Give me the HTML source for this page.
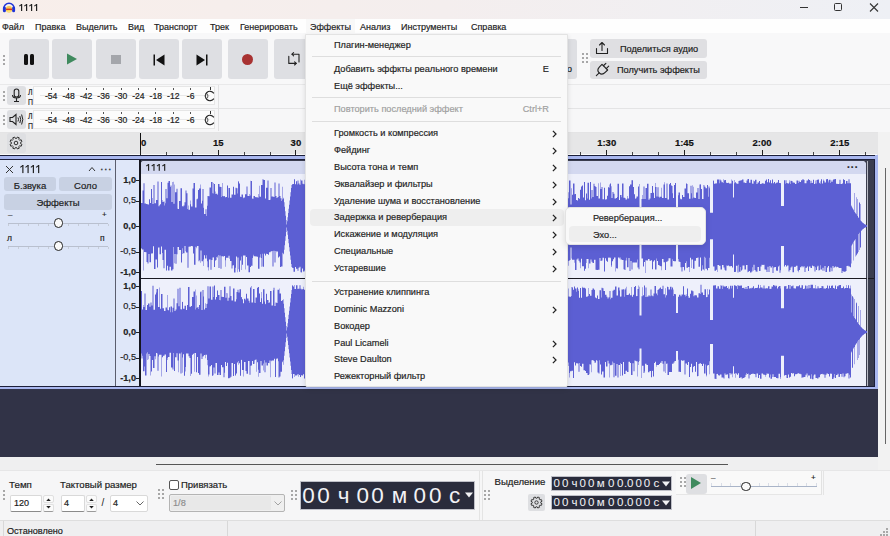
<!DOCTYPE html>
<html><head><meta charset="utf-8"><style>
*{box-sizing:border-box;margin:0;padding:0}
html,body{width:890px;height:536px;overflow:hidden;background:#f7f7f8;font-family:"Liberation Sans",sans-serif;color:#1b1b1b}
.a{position:absolute}
.t{position:absolute;white-space:nowrap;line-height:1;-webkit-text-stroke-width:0.18px}
#title{left:0;top:0;width:890px;height:19px;background:linear-gradient(90deg,#f8eeea 0%,#f4eeee 50%,#eef0f5 100%)}
#menubar{left:0;top:19px;width:890px;height:14px;background:#fefefe;font-size:9px;color:#222}
.btn{position:absolute;top:39px;width:40px;height:40px;background:#dedfe3;border-radius:3px}
.grip{position:absolute;width:2px;}
.grip i{position:absolute;left:0;width:2px;height:2px;background:#9a9a9a;border-radius:1px}
.meter{position:absolute;left:33px;width:182px;height:19px;background:#fcfcfc;border:1px solid #e6e6e6}
.ml{position:absolute;font-size:8.6px;color:#222;line-height:1;white-space:nowrap;-webkit-text-stroke-width:0.2px}
.menu{font-size:9.2px;color:#1e1e1e}
.mi{position:absolute;left:334px;white-space:nowrap;line-height:1}
.arr{position:absolute;left:551px}
</style></head><body>
<div id="title" class="a">
  <svg class="a" style="left:1.5px;top:-0.5px" width="14" height="14" viewBox="0 0 14 14">
    <path d="M1.8 8.5 A5.2 5.2 0 0 1 12.2 8.5" fill="none" stroke="#1f33d6" stroke-width="1.5"/>
    <rect x="0.9" y="6.6" width="3" height="5.6" rx="1.5" fill="#1f33d6"/>
    <rect x="10.1" y="6.6" width="3" height="5.6" rx="1.5" fill="#1f33d6"/>
    <ellipse cx="7" cy="9.3" rx="3.1" ry="3.2" fill="#f8c64c"/>
    <rect x="3.9" y="8.6" width="6.2" height="1.4" fill="#d9361e"/>
    <ellipse cx="7" cy="11.5" rx="2" ry="1" fill="#fbe27a"/>
  </svg>
<svg class="a" style="left:18.00px;top:3.00px" width="20.20" height="9.00" viewBox="0 0 20.20 9.00"><rect x="3.00" y="1" width="1.2" height="7" fill="#222"/><path d="M3.72 1.3 L1.30 3.10" stroke="#222" stroke-width="1.05" fill="none"/><rect x="8.00" y="1" width="1.2" height="7" fill="#222"/><path d="M8.72 1.3 L6.30 3.10" stroke="#222" stroke-width="1.05" fill="none"/><rect x="13.00" y="1" width="1.2" height="7" fill="#222"/><path d="M13.72 1.3 L11.30 3.10" stroke="#222" stroke-width="1.05" fill="none"/><rect x="18.00" y="1" width="1.2" height="7" fill="#222"/><path d="M18.72 1.3 L16.30 3.10" stroke="#222" stroke-width="1.05" fill="none"/></svg>
  <div class="a" style="left:800px;top:7px;width:8px;height:1px;background:#333"></div>
  <div class="a" style="left:834px;top:3px;width:8px;height:8px;border:1.2px solid #333;border-radius:1.5px"></div>
  <svg class="a" style="left:869px;top:3px" width="10" height="9" viewBox="0 0 10 9"><path d="M1 0.5 L9 8.5 M9 0.5 L1 8.5" stroke="#333" stroke-width="1.1"/></svg>
</div>
<div id="menubar" class="a"><div class="a" style="left:306px;top:0px;width:49px;height:14px;background:#f8f8f8"></div>
<div class="t" style="left:2px;top:3.6px">Файл</div>
<div class="t" style="left:35px;top:3.6px">Правка</div>
<div class="t" style="left:76px;top:3.6px">Выделить</div>
<div class="t" style="left:128px;top:3.6px">Вид</div>
<div class="t" style="left:154px;top:3.6px">Транспорт</div>
<div class="t" style="left:210px;top:3.6px">Трек</div>
<div class="t" style="left:240px;top:3.6px">Генерировать</div>
<div class="t" style="left:310px;top:3.6px">Эффекты</div>
<div class="t" style="left:360px;top:3.6px">Анализ</div>
<div class="t" style="left:401px;top:3.6px">Инструменты</div>
<div class="t" style="left:471px;top:3.6px">Справка</div>
</div>
<div class="a" style="left:0;top:33px;width:890px;height:51px;background:#f8f8f9"></div>
<div class="a" style="left:0;top:84px;width:890px;height:1px;background:#e9e9ea"></div>
<div class="a" style="left:3px;top:55px"><i class="a" style="left:0px;top:0px;width:1.5px;height:1.5px;background:#8c8c8c;border-radius:1px"></i><i class="a" style="left:0px;top:4px;width:1.5px;height:1.5px;background:#8c8c8c;border-radius:1px"></i><i class="a" style="left:0px;top:8px;width:1.5px;height:1.5px;background:#8c8c8c;border-radius:1px"></i></div>
<div class="btn" style="left:9px"></div>
<div class="btn" style="left:52px"></div>
<div class="btn" style="left:96px"></div>
<div class="btn" style="left:139px"></div>
<div class="btn" style="left:182px"></div>
<div class="btn" style="left:228px"></div>
<div class="btn" style="left:274px"></div>
<div class="a" style="left:24px;top:54px;width:4px;height:11px;background:#111;border-radius:1.5px"></div>
<div class="a" style="left:30px;top:54px;width:4px;height:11px;background:#111;border-radius:1.5px"></div>
<svg class="a" style="left:66px;top:53px" width="12" height="12" viewBox="0 0 12 12"><path d="M1 0.5 L11 6 L1 11.5Z" fill="#3f8a5e"/></svg>
<div class="a" style="left:111px;top:54.5px;width:9.5px;height:9.5px;background:#a4a6ab"></div>
<svg class="a" style="left:153px;top:53.5px" width="12" height="12" viewBox="0 0 12 12"><rect x="0.5" y="0.5" width="1.5" height="11" fill="#111"/><path d="M11.5 0.5 L3 6 L11.5 11.5Z" fill="#111"/></svg>
<svg class="a" style="left:196px;top:53.5px" width="12" height="12" viewBox="0 0 12 12"><rect x="10" y="0.5" width="1.5" height="11" fill="#111"/><path d="M0.5 0.5 L9 6 L0.5 11.5Z" fill="#111"/></svg>
<div class="a" style="left:242px;top:53.5px;width:11px;height:11px;background:#a83232;border-radius:50%"></div>
<svg class="a" style="left:287px;top:52px" width="14" height="14" viewBox="0 0 14 14"><g fill="none" stroke="#222" stroke-width="1.1" stroke-linejoin="round" stroke-linecap="round"><path d="M5 2.2 H12 V10"/><path d="M6.6 0.6 L5 2.2 L6.6 3.8"/><path d="M9.2 11.4 H1.8 V4.2"/><path d="M7.6 9.8 L9.2 11.4 L7.6 13"/></g></svg>
<div class="btn" style="left:560px;width:17px"></div>
<div class="t" style="left:567px;top:65px;font-size:9px">o</div>
<div class="a" style="left:582px;top:53px"><i class="a" style="left:0px;top:0px;width:1.5px;height:1.5px;background:#8c8c8c;border-radius:1px"></i><i class="a" style="left:0px;top:4px;width:1.5px;height:1.5px;background:#8c8c8c;border-radius:1px"></i><i class="a" style="left:0px;top:8px;width:1.5px;height:1.5px;background:#8c8c8c;border-radius:1px"></i><i class="a" style="left:4px;top:0px;width:1.5px;height:1.5px;background:#8c8c8c;border-radius:1px"></i><i class="a" style="left:4px;top:4px;width:1.5px;height:1.5px;background:#8c8c8c;border-radius:1px"></i><i class="a" style="left:4px;top:8px;width:1.5px;height:1.5px;background:#8c8c8c;border-radius:1px"></i></div>
<div class="a" style="left:590px;top:39px;width:117px;height:19px;background:#dfdfe2;border-radius:3px"></div>
<div class="a" style="left:590px;top:61px;width:117px;height:18px;background:#dfdfe2;border-radius:3px"></div>
<div class="t" style="left:620px;top:44.8px;font-size:9.2px">Поделиться аудио</div>
<div class="t" style="left:617px;top:65.5px;font-size:9.2px">Получить эффекты</div>
<svg class="a" style="left:594px;top:41px" width="16" height="15" viewBox="0 0 16 15"><path d="M2.5 7.5 V12.5 H13.5 V7.5 M8 9.5 V1.5 M5.5 4 L8 1.5 L10.5 4" fill="none" stroke="#222" stroke-width="1.1" stroke-linecap="round" stroke-linejoin="round"/></svg>
<svg class="a" style="left:593px;top:61px" width="18" height="18" viewBox="0 0 18 18"><g transform="rotate(45 9 9)" fill="none" stroke="#222" stroke-width="1.1" stroke-linecap="round" stroke-linejoin="round"><path d="M7 1.5 V5 M11 1.5 V5"/><path d="M5 5 H13 V8.5 C13 11.5 11 13 9 13 C7 13 5 11.5 5 8.5 Z"/><path d="M9 13 V17"/></g></svg>
<div class="a" style="left:0;top:108px;width:890px;height:1px;background:#e4e4e5"></div>
<div class="a" style="left:0;top:132px;width:890px;height:1px;background:#e4e4e5"></div>
<div class="a" style="left:218px;top:85px;width:1px;height:46px;background:#e2e2e3"></div>
<div class="a" style="left:3px;top:91px"><i class="a" style="left:0px;top:0px;width:1.5px;height:1.5px;background:#8c8c8c;border-radius:1px"></i><i class="a" style="left:0px;top:4px;width:1.5px;height:1.5px;background:#8c8c8c;border-radius:1px"></i><i class="a" style="left:0px;top:8px;width:1.5px;height:1.5px;background:#8c8c8c;border-radius:1px"></i></div>
<div class="a" style="left:7px;top:86px;width:19px;height:19px;background:#dedfe2;border-radius:3px"></div>
<svg class="a" style="left:10px;top:88px" width="13" height="15" viewBox="0 0 13 15"><rect x="4.2" y="1" width="4.6" height="8" rx="2.3" fill="none" stroke="#222" stroke-width="1.1"/><path d="M2.5 7 C2.5 11 10.5 11 10.5 7 M6.5 10.5 V13 M4 13.5 H9" fill="none" stroke="#222" stroke-width="1.1"/></svg>
<div class="ml" style="left:28px;top:87px;font-size:9.6px;transform:scaleX(0.72);transform-origin:0 0">Л</div>
<div class="ml" style="left:28px;top:97px;font-size:9.6px;transform:scaleX(0.72);transform-origin:0 0">П</div>
<div class="meter" style="top:86px"></div>
<div class="a" style="left:40px;top:95px;width:170px;height:1px;background:#e8e8e8"></div>
<div class="a" style="left:50.7px;top:87.5px;width:1px;height:2.5px;background:#555"></div>
<div class="ml" style="left:39.2px;width:24px;text-align:center;top:92px">-54</div>
<div class="a" style="left:68.1px;top:87.5px;width:1px;height:2.5px;background:#555"></div>
<div class="ml" style="left:56.6px;width:24px;text-align:center;top:92px">-48</div>
<div class="a" style="left:85.6px;top:87.5px;width:1px;height:2.5px;background:#555"></div>
<div class="ml" style="left:74.1px;width:24px;text-align:center;top:92px">-42</div>
<div class="a" style="left:103.0px;top:87.5px;width:1px;height:2.5px;background:#555"></div>
<div class="ml" style="left:91.5px;width:24px;text-align:center;top:92px">-36</div>
<div class="a" style="left:120.5px;top:87.5px;width:1px;height:2.5px;background:#555"></div>
<div class="ml" style="left:109.0px;width:24px;text-align:center;top:92px">-30</div>
<div class="a" style="left:137.9px;top:87.5px;width:1px;height:2.5px;background:#555"></div>
<div class="ml" style="left:126.4px;width:24px;text-align:center;top:92px">-24</div>
<div class="a" style="left:155.3px;top:87.5px;width:1px;height:2.5px;background:#555"></div>
<div class="ml" style="left:143.8px;width:24px;text-align:center;top:92px">-18</div>
<div class="a" style="left:172.8px;top:87.5px;width:1px;height:2.5px;background:#555"></div>
<div class="ml" style="left:161.3px;width:24px;text-align:center;top:92px">-12</div>
<div class="a" style="left:190.2px;top:87.5px;width:1px;height:2.5px;background:#555"></div>
<div class="ml" style="left:178.7px;width:24px;text-align:center;top:92px">-6</div>
<div class="a" style="left:209.5px;top:87px;width:1px;height:3px;background:#333"></div>
<svg class="a" style="left:203px;top:90px" width="14" height="12" viewBox="0 0 14 12"><path d="M10.85 3.30 A4.7 4.7 0 1 0 10.85 8.70" fill="none" stroke="#222" stroke-width="1.15"/><ellipse cx="3.6" cy="6" rx="1.3" ry="2.4" fill="none" stroke="#444" stroke-width="0.9"/></svg>
<div class="a" style="left:3px;top:115px"><i class="a" style="left:0px;top:0px;width:1.5px;height:1.5px;background:#8c8c8c;border-radius:1px"></i><i class="a" style="left:0px;top:4px;width:1.5px;height:1.5px;background:#8c8c8c;border-radius:1px"></i><i class="a" style="left:0px;top:8px;width:1.5px;height:1.5px;background:#8c8c8c;border-radius:1px"></i></div>
<div class="a" style="left:7px;top:110px;width:19px;height:19px;background:#dedfe2;border-radius:3px"></div>
<svg class="a" style="left:9px;top:113px" width="15" height="13" viewBox="0 0 15 13"><path d="M1 4.5 H3.5 L7 1.5 V11.5 L3.5 8.5 H1Z" fill="none" stroke="#222" stroke-width="1.1"/><path d="M9 4.5 Q10 6.5 9 8.5 M10.8 3 Q12.6 6.5 10.8 10 M12.6 1.5 Q15 6.5 12.6 11.5" fill="none" stroke="#222" stroke-width="1"/></svg>
<div class="ml" style="left:28px;top:111px;font-size:9.6px;transform:scaleX(0.72);transform-origin:0 0">Л</div>
<div class="ml" style="left:28px;top:121px;font-size:9.6px;transform:scaleX(0.72);transform-origin:0 0">П</div>
<div class="meter" style="top:110px"></div>
<div class="a" style="left:40px;top:119px;width:170px;height:1px;background:#e8e8e8"></div>
<div class="a" style="left:50.7px;top:111.5px;width:1px;height:2.5px;background:#555"></div>
<div class="ml" style="left:39.2px;width:24px;text-align:center;top:116px">-54</div>
<div class="a" style="left:68.1px;top:111.5px;width:1px;height:2.5px;background:#555"></div>
<div class="ml" style="left:56.6px;width:24px;text-align:center;top:116px">-48</div>
<div class="a" style="left:85.6px;top:111.5px;width:1px;height:2.5px;background:#555"></div>
<div class="ml" style="left:74.1px;width:24px;text-align:center;top:116px">-42</div>
<div class="a" style="left:103.0px;top:111.5px;width:1px;height:2.5px;background:#555"></div>
<div class="ml" style="left:91.5px;width:24px;text-align:center;top:116px">-36</div>
<div class="a" style="left:120.5px;top:111.5px;width:1px;height:2.5px;background:#555"></div>
<div class="ml" style="left:109.0px;width:24px;text-align:center;top:116px">-30</div>
<div class="a" style="left:137.9px;top:111.5px;width:1px;height:2.5px;background:#555"></div>
<div class="ml" style="left:126.4px;width:24px;text-align:center;top:116px">-24</div>
<div class="a" style="left:155.3px;top:111.5px;width:1px;height:2.5px;background:#555"></div>
<div class="ml" style="left:143.8px;width:24px;text-align:center;top:116px">-18</div>
<div class="a" style="left:172.8px;top:111.5px;width:1px;height:2.5px;background:#555"></div>
<div class="ml" style="left:161.3px;width:24px;text-align:center;top:116px">-12</div>
<div class="a" style="left:190.2px;top:111.5px;width:1px;height:2.5px;background:#555"></div>
<div class="ml" style="left:178.7px;width:24px;text-align:center;top:116px">-6</div>
<div class="a" style="left:209.5px;top:111px;width:1px;height:3px;background:#333"></div>
<svg class="a" style="left:203px;top:114px" width="14" height="12" viewBox="0 0 14 12"><path d="M10.85 3.30 A4.7 4.7 0 1 0 10.85 8.70" fill="none" stroke="#222" stroke-width="1.15"/><ellipse cx="3.6" cy="6" rx="1.3" ry="2.4" fill="none" stroke="#444" stroke-width="0.9"/></svg>
<div class="a" style="left:0;top:133px;width:878px;height:22px;background:#e6e6e7"></div>
<div class="a" style="left:878px;top:132px;width:12px;height:23px;background:#f2f2f2"></div>
<div class="a" style="left:7px;top:133px;width:19px;height:20px;background:#dedfe2;border-radius:3px"></div>
<svg class="a" style="left:9px;top:136px" width="14" height="14" viewBox="0 0 14 14"><path d="M11.56 7.61 L12.95 8.35 L12.16 10.25 L10.65 9.79 L10.25 10.25 L9.79 10.65 L10.25 12.16 L8.35 12.95 L7.61 11.56 L7.00 11.60 L6.39 11.56 L5.65 12.95 L3.75 12.16 L4.21 10.65 L3.75 10.25 L3.35 9.79 L1.84 10.25 L1.05 8.35 L2.44 7.61 L2.40 7.00 L2.44 6.39 L1.05 5.65 L1.84 3.75 L3.35 4.21 L3.75 3.75 L4.21 3.35 L3.75 1.84 L5.65 1.05 L6.39 2.44 L7.00 2.40 L7.61 2.44 L8.35 1.05 L10.25 1.84 L9.79 3.35 L10.25 3.75 L10.65 4.21 L12.16 3.75 L12.95 5.65 L11.56 6.39 L11.60 7.00Z" fill="none" stroke="#2a2a2a" stroke-width="0.95" stroke-linejoin="round"/><circle cx="7" cy="7" r="1.8" fill="none" stroke="#2a2a2a" stroke-width="0.95"/></svg>
<div class="a" style="left:140px;top:133px;width:1.2px;height:21px;background:#111"></div>
<div class="a" style="left:0;top:154px;width:877px;height:1px;background:#fafafa"></div>
<div class="a" style="left:140.0px;top:150px;width:1px;height:5px;background:#222"></div>
<div class="t" style="left:141px;top:138px;font-size:9.5px;font-weight:bold;color:#111">0</div>
<div class="a" style="left:165.9px;top:152px;width:1px;height:3px;background:#444"></div>
<div class="a" style="left:191.8px;top:152px;width:1px;height:3px;background:#444"></div>
<div class="a" style="left:217.7px;top:150px;width:1px;height:5px;background:#222"></div>
<div class="t" style="left:198.2px;width:40px;text-align:center;top:138px;font-size:9.5px;font-weight:bold;color:#111">15</div>
<div class="a" style="left:243.6px;top:152px;width:1px;height:3px;background:#444"></div>
<div class="a" style="left:269.5px;top:152px;width:1px;height:3px;background:#444"></div>
<div class="a" style="left:295.4px;top:150px;width:1px;height:5px;background:#222"></div>
<div class="t" style="left:275.9px;width:40px;text-align:center;top:138px;font-size:9.5px;font-weight:bold;color:#111">30</div>
<div class="a" style="left:321.3px;top:152px;width:1px;height:3px;background:#444"></div>
<div class="a" style="left:347.2px;top:152px;width:1px;height:3px;background:#444"></div>
<div class="a" style="left:373.1px;top:150px;width:1px;height:5px;background:#222"></div>
<div class="a" style="left:399.0px;top:152px;width:1px;height:3px;background:#444"></div>
<div class="a" style="left:424.9px;top:152px;width:1px;height:3px;background:#444"></div>
<div class="a" style="left:450.8px;top:150px;width:1px;height:5px;background:#222"></div>
<div class="a" style="left:476.7px;top:152px;width:1px;height:3px;background:#444"></div>
<div class="a" style="left:502.6px;top:152px;width:1px;height:3px;background:#444"></div>
<div class="a" style="left:528.5px;top:150px;width:1px;height:5px;background:#222"></div>
<div class="a" style="left:554.4px;top:152px;width:1px;height:3px;background:#444"></div>
<div class="a" style="left:580.3px;top:152px;width:1px;height:3px;background:#444"></div>
<div class="a" style="left:606.2px;top:150px;width:1px;height:5px;background:#222"></div>
<div class="t" style="left:586.7px;width:40px;text-align:center;top:138px;font-size:9.5px;font-weight:bold;color:#111">1:30</div>
<div class="a" style="left:632.1px;top:152px;width:1px;height:3px;background:#444"></div>
<div class="a" style="left:658.0px;top:152px;width:1px;height:3px;background:#444"></div>
<div class="a" style="left:683.9px;top:150px;width:1px;height:5px;background:#222"></div>
<div class="t" style="left:664.4px;width:40px;text-align:center;top:138px;font-size:9.5px;font-weight:bold;color:#111">1:45</div>
<div class="a" style="left:709.8px;top:152px;width:1px;height:3px;background:#444"></div>
<div class="a" style="left:735.7px;top:152px;width:1px;height:3px;background:#444"></div>
<div class="a" style="left:761.6px;top:150px;width:1px;height:5px;background:#222"></div>
<div class="t" style="left:742.1px;width:40px;text-align:center;top:138px;font-size:9.5px;font-weight:bold;color:#111">2:00</div>
<div class="a" style="left:787.5px;top:152px;width:1px;height:3px;background:#444"></div>
<div class="a" style="left:813.4px;top:152px;width:1px;height:3px;background:#444"></div>
<div class="a" style="left:839.3px;top:150px;width:1px;height:5px;background:#222"></div>
<div class="t" style="left:819.8px;width:40px;text-align:center;top:138px;font-size:9.5px;font-weight:bold;color:#111">2:15</div>
<div class="a" style="left:865.2px;top:152px;width:1px;height:3px;background:#444"></div>
<div class="a" style="left:0;top:155px;width:878px;height:303px;background:#313347"></div>
<div class="a" style="left:878px;top:155px;width:12px;height:315px;background:#f2f2f2"></div>
<div class="a" style="left:884.5px;top:168px;width:1.5px;height:276px;background:#666"></div>
<div class="a" style="left:0;top:155px;width:878px;height:234px;background:#a9b7ef"></div>
<div class="a" style="left:0;top:155px;width:875px;height:1px;background:#1c1f3a"></div>
<div class="a" style="left:0;top:159px;width:875px;height:228px;background:#1c1f3a"></div>
<div class="a" style="left:0;top:160px;width:874px;height:226px;background:#313347"></div>
<div class="a" style="left:0;top:160px;width:115px;height:226px;background:#dce5f8"></div>
<div class="a" style="left:115px;top:160px;width:1.2px;height:226px;background:#5b5e6e"></div>
<div class="a" style="left:116px;top:160px;width:23.5px;height:226px;background:#dfe7f9"></div>
<div class="a" style="left:139px;top:160px;width:2px;height:226px;background:#15161f"></div>
<div class="a" style="left:141px;top:160px;width:733px;height:226px;background:#3a3d4f"></div>
<div class="a" style="left:141px;top:161px;width:725px;height:225px;background:#eef0fb;border-radius:3px 4px 0 0"></div>
<div class="a" style="left:141px;top:161px;width:725px;height:13px;background:#d3d8f0;border-radius:3px 4px 0 0"></div>
<svg class="a" style="left:144.90px;top:163.00px" width="21.25" height="8.80" viewBox="0 0 21.25 8.80"><rect x="3.00" y="1" width="1.15" height="6.8" fill="#222"/><path d="M3.69 1.3 L1.30 3.04" stroke="#222" stroke-width="1.05" fill="none"/><rect x="8.40" y="1" width="1.15" height="6.8" fill="#222"/><path d="M9.09 1.3 L6.70 3.04" stroke="#222" stroke-width="1.05" fill="none"/><rect x="13.70" y="1" width="1.15" height="6.8" fill="#222"/><path d="M14.39 1.3 L12.00 3.04" stroke="#222" stroke-width="1.05" fill="none"/><rect x="19.10" y="1" width="1.15" height="6.8" fill="#222"/><path d="M19.79 1.3 L17.40 3.04" stroke="#222" stroke-width="1.05" fill="none"/></svg>
<div class="t" style="left:847px;top:163px;font-size:10px;font-weight:bold;letter-spacing:0.5px;color:#222">&middot;&middot;&middot;</div>
<div class="a" style="left:141px;top:277.5px;width:733px;height:1.5px;background:#1a1a22"></div>
<div class="a" style="left:866.5px;top:161px;width:1.3px;height:225px;background:#b9bbc6"></div>
<svg class="a" style="left:5px;top:165px" width="9" height="9" viewBox="0 0 9 9"><path d="M1 1 L8 8 M8 1 L1 8" stroke="#333" stroke-width="1"/></svg>
<svg class="a" style="left:18.60px;top:164.00px" width="21.25" height="10.10" viewBox="0 0 21.25 10.10"><rect x="3.30" y="1" width="1.15" height="8.1" fill="#1b1b1b"/><path d="M3.99 1.3 L1.30 3.43" stroke="#1b1b1b" stroke-width="1.05" fill="none"/><rect x="8.50" y="1" width="1.15" height="8.1" fill="#1b1b1b"/><path d="M9.19 1.3 L6.50 3.43" stroke="#1b1b1b" stroke-width="1.05" fill="none"/><rect x="13.80" y="1" width="1.15" height="8.1" fill="#1b1b1b"/><path d="M14.49 1.3 L11.80 3.43" stroke="#1b1b1b" stroke-width="1.05" fill="none"/><rect x="19.10" y="1" width="1.15" height="8.1" fill="#1b1b1b"/><path d="M19.79 1.3 L17.10 3.43" stroke="#1b1b1b" stroke-width="1.05" fill="none"/></svg>
<svg class="a" style="left:88px;top:166px" width="8" height="6" viewBox="0 0 8 6"><path d="M1 5 L4 1.5 L7 5" fill="none" stroke="#333" stroke-width="1"/></svg>
<div class="t" style="left:100.5px;top:166px;font-size:9px;font-weight:bold;letter-spacing:1px;color:#333">&middot;&middot;&middot;</div>
<div class="a" style="left:4px;top:177px;width:52px;height:14px;background:#c8d1e3;border-radius:3px"></div>
<div class="a" style="left:59px;top:177px;width:53px;height:14px;background:#c8d1e3;border-radius:3px"></div>
<div class="a" style="left:4px;top:194px;width:108px;height:16px;background:#c8d1e3;border-radius:3px"></div>
<div class="t" style="left:4px;width:52px;text-align:center;top:180.5px;font-size:9.5px">Б.звука</div>
<div class="t" style="left:59px;width:53px;text-align:center;top:180.5px;font-size:9.5px">Соло</div>
<div class="t" style="left:4px;width:108px;text-align:center;top:198px;font-size:9.5px">Эффекты</div>
<div class="t" style="left:8px;top:211px;font-size:8px;color:#222">&ndash;</div>
<div class="t" style="left:102px;top:211px;font-size:8px;color:#222">+</div>
<div class="t" style="left:7px;top:234px;font-size:8.5px;color:#222">л</div>
<div class="t" style="left:100px;top:234px;font-size:8.5px;color:#222">п</div>
<div class="a" style="left:8px;top:222.5px;width:100px;height:1px;background:#b9c0cf"></div>
<div class="a" style="left:8px;top:223.5px;width:1px;height:2px;background:#c6ccd8"></div>
<div class="a" style="left:18px;top:223.5px;width:1px;height:2px;background:#c6ccd8"></div>
<div class="a" style="left:28px;top:223.5px;width:1px;height:2px;background:#c6ccd8"></div>
<div class="a" style="left:38px;top:223.5px;width:1px;height:2px;background:#c6ccd8"></div>
<div class="a" style="left:48px;top:223.5px;width:1px;height:2px;background:#c6ccd8"></div>
<div class="a" style="left:58px;top:223.5px;width:1px;height:2px;background:#c6ccd8"></div>
<div class="a" style="left:68px;top:223.5px;width:1px;height:2px;background:#c6ccd8"></div>
<div class="a" style="left:78px;top:223.5px;width:1px;height:2px;background:#c6ccd8"></div>
<div class="a" style="left:88px;top:223.5px;width:1px;height:2px;background:#c6ccd8"></div>
<div class="a" style="left:98px;top:223.5px;width:1px;height:2px;background:#c6ccd8"></div>
<div class="a" style="left:108px;top:223.5px;width:1px;height:2px;background:#c6ccd8"></div>
<div class="a" style="left:53.5px;top:218.0px;width:9.5px;height:9.5px;border:1.2px solid #222;border-radius:50%;background:#fafafa"></div>
<div class="a" style="left:8px;top:245.5px;width:100px;height:1px;background:#b9c0cf"></div>
<div class="a" style="left:8px;top:246.5px;width:1px;height:2px;background:#c6ccd8"></div>
<div class="a" style="left:18px;top:246.5px;width:1px;height:2px;background:#c6ccd8"></div>
<div class="a" style="left:28px;top:246.5px;width:1px;height:2px;background:#c6ccd8"></div>
<div class="a" style="left:38px;top:246.5px;width:1px;height:2px;background:#c6ccd8"></div>
<div class="a" style="left:48px;top:246.5px;width:1px;height:2px;background:#c6ccd8"></div>
<div class="a" style="left:58px;top:246.5px;width:1px;height:2px;background:#c6ccd8"></div>
<div class="a" style="left:68px;top:246.5px;width:1px;height:2px;background:#c6ccd8"></div>
<div class="a" style="left:78px;top:246.5px;width:1px;height:2px;background:#c6ccd8"></div>
<div class="a" style="left:88px;top:246.5px;width:1px;height:2px;background:#c6ccd8"></div>
<div class="a" style="left:98px;top:246.5px;width:1px;height:2px;background:#c6ccd8"></div>
<div class="a" style="left:108px;top:246.5px;width:1px;height:2px;background:#c6ccd8"></div>
<div class="a" style="left:53.5px;top:241.0px;width:9.5px;height:9.5px;border:1.2px solid #222;border-radius:50%;background:#fafafa"></div>
<div class="t" style="left:110px;width:26px;text-align:right;top:175.5px;font-size:9.2px;font-weight:bold;color:#222">1,0</div>
<div class="a" style="left:136px;top:180px;width:3px;height:1px;background:#222"></div>
<div class="t" style="left:110px;width:26px;text-align:right;top:196.0px;font-size:9.2px;color:#222">0,5</div>
<div class="a" style="left:136px;top:200.5px;width:3px;height:1px;background:#222"></div>
<div class="t" style="left:110px;width:26px;text-align:right;top:221.5px;font-size:9.2px;font-weight:bold;color:#222">0,0</div>
<div class="a" style="left:136px;top:226px;width:3px;height:1px;background:#222"></div>
<div class="t" style="left:110px;width:26px;text-align:right;top:247.0px;font-size:9.2px;color:#222">-0,5</div>
<div class="a" style="left:136px;top:251.5px;width:3px;height:1px;background:#222"></div>
<div class="t" style="left:110px;width:26px;text-align:right;top:267.5px;font-size:9.2px;font-weight:bold;color:#222">-1,0</div>
<div class="a" style="left:136px;top:272px;width:3px;height:1px;background:#222"></div>
<div class="t" style="left:110px;width:26px;text-align:right;top:281.5px;font-size:9.2px;font-weight:bold;color:#222">1,0</div>
<div class="a" style="left:136px;top:286px;width:3px;height:1px;background:#222"></div>
<div class="t" style="left:110px;width:26px;text-align:right;top:302.0px;font-size:9.2px;color:#222">0,5</div>
<div class="a" style="left:136px;top:306.5px;width:3px;height:1px;background:#222"></div>
<div class="t" style="left:110px;width:26px;text-align:right;top:327.5px;font-size:9.2px;font-weight:bold;color:#222">0,0</div>
<div class="a" style="left:136px;top:332px;width:3px;height:1px;background:#222"></div>
<div class="t" style="left:110px;width:26px;text-align:right;top:353.0px;font-size:9.2px;color:#222">-0,5</div>
<div class="a" style="left:136px;top:357.5px;width:3px;height:1px;background:#222"></div>
<div class="t" style="left:110px;width:26px;text-align:right;top:373.5px;font-size:9.2px;font-weight:bold;color:#222">-1,0</div>
<div class="a" style="left:136px;top:378px;width:3px;height:1px;background:#222"></div>
<svg class="a" style="left:0;top:0" width="890" height="536" viewBox="0 0 890 536"><g fill="#5c5fd3"><path d="M141 226L141 202.9L141.5 202.9L141.5 202.9L142 202.9L142 202.9L142.5 202.9L142.5 190.6L143 190.6L143 190.6L143.5 190.6L143.5 183.2L144 183.2L144 183.2L144.5 183.2L144.5 203.4L145 203.4L145 203.4L145.5 203.4L145.5 203.4L146 203.4L146 204.1L146.5 204.1L146.5 204.1L147 204.1L147 204.1L147.5 204.1L147.5 204.4L148 204.4L148 204.4L148.5 204.4L148.5 204.4L149 204.4L149 199.2L149.5 199.2L149.5 199.2L150 199.2L150 203.1L150.5 203.1L150.5 203.1L151 203.1L151 189.0L151.5 189.0L151.5 189.0L152 189.0L152 198.0L152.5 198.0L152.5 204.0L153 204.0L153 204.0L153.5 204.0L153.5 185.0L154 185.0L154 185.0L154.5 185.0L154.5 203.2L155 203.2L155 203.2L155.5 203.2L155.5 203.2L156 203.2L156 200.1L156.5 200.1L156.5 200.1L157 200.1L157 200.1L157.5 200.1L157.5 181.5L158 181.5L158 181.5L158.5 181.5L158.5 206.3L159 206.3L159 206.3L159.5 206.3L159.5 205.0L160 205.0L160 204.2L160.5 204.2L160.5 204.2L161 204.2L161 182.1L161.5 182.1L161.5 182.1L162 182.1L162 200.1L162.5 200.1L162.5 202.1L163 202.1L163 202.1L163.5 202.1L163.5 201.5L164 201.5L164 201.5L164.5 201.5L164.5 205.6L165 205.6L165 203.2L165.5 203.2L165.5 188.9L166 188.9L166 188.9L166.5 188.9L166.5 198.3L167 198.3L167 198.3L167.5 198.3L167.5 182.8L168 182.8L168 182.8L168.5 182.8L168.5 181.1L169 181.1L169 181.1L169.5 181.1L169.5 181.1L170 181.1L170 186.9L170.5 186.9L170.5 185.5L171 185.5L171 185.5L171.5 185.5L171.5 202.1L172 202.1L172 202.1L172.5 202.1L172.5 182.1L173 182.1L173 181.8L173.5 181.8L173.5 203.7L174 203.7L174 203.7L174.5 203.7L174.5 184.5L175 184.5L175 192.3L175.5 192.3L175.5 192.3L176 192.3L176 192.3L176.5 192.3L176.5 188.8L177 188.8L177 188.8L177.5 188.8L177.5 208.7L178 208.7L178 208.9L178.5 208.9L178.5 208.9L179 208.9L179 200.9L179.5 200.9L179.5 200.9L180 200.9L180 200.9L180.5 200.9L180.5 188.3L181 188.3L181 188.3L181.5 188.3L181.5 188.3L182 188.3L182 206.0L182.5 206.0L182.5 206.5L183 206.5L183 206.5L183.5 206.5L183.5 205.4L184 205.4L184 205.4L184.5 205.4L184.5 202.2L185 202.2L185 202.2L185.5 202.2L185.5 190.4L186 190.4L186 190.4L186.5 190.4L186.5 193.3L187 193.3L187 193.3L187.5 193.3L187.5 208.9L188 208.9L188 205.4L188.5 205.4L188.5 209.7L189 209.7L189 209.7L189.5 209.7L189.5 209.7L190 209.7L190 200.5L190.5 200.5L190.5 204.2L191 204.2L191 206.5L191.5 206.5L191.5 206.5L192 206.5L192 206.5L192.5 206.5L192.5 188.6L193 188.6L193 188.6L193.5 188.6L193.5 183.0L194 183.0L194 183.0L194.5 183.0L194.5 183.0L195 183.0L195 207.5L195.5 207.5L195.5 207.5L196 207.5L196 207.5L196.5 207.5L196.5 199.2L197 199.2L197 199.2L197.5 199.2L197.5 198.4L198 198.4L198 190.0L198.5 190.0L198.5 190.0L199 190.0L199 188.6L199.5 188.6L199.5 188.6L200 188.6L200 188.6L200.5 188.6L200.5 184.4L201 184.4L201 203.4L201.5 203.4L201.5 203.4L202 203.4L202 200.7L202.5 200.7L202.5 189.0L203 189.0L203 189.0L203.5 189.0L203.5 207.7L204 207.7L204 214.0L204.5 214.0L204.5 214.1L205 214.1L205 214.1L205.5 214.1L205.5 209.3L206 209.3L206 209.3L206.5 209.3L206.5 215.9L207 215.9L207 205.7L207.5 205.7L207.5 195.9L208 195.9L208 196.0L208.5 196.0L208.5 196.2L209 196.2L209 196.2L209.5 196.2L209.5 187.4L210 187.4L210 187.4L210.5 187.4L210.5 187.4L211 187.4L211 182.1L211.5 182.1L211.5 182.1L212 182.1L212 182.1L212.5 182.1L212.5 193.3L213 193.3L213 193.4L213.5 193.4L213.5 183.1L214 183.1L214 183.9L214.5 183.9L214.5 183.9L215 183.9L215 191.4L215.5 191.4L215.5 193.9L216 193.9L216 194.0L216.5 194.0L216.5 193.6L217 193.6L217 193.7L217.5 193.7L217.5 195.0L218 195.0L218 184.0L218.5 184.0L218.5 184.1L219 184.1L219 184.1L219.5 184.1L219.5 186.7L220 186.7L220 186.8L220.5 186.8L220.5 186.9L221 186.9L221 187.0L221.5 187.0L221.5 197.0L222 197.0L222 183.1L222.5 183.1L222.5 196.1L223 196.1L223 196.2L223.5 196.2L223.5 196.2L224 196.2L224 196.1L224.5 196.1L224.5 196.2L225 196.2L225 197.4L225.5 197.4L225.5 197.0L226 197.0L226 197.1L226.5 197.1L226.5 197.1L227 197.1L227 185.6L227.5 185.6L227.5 185.6L228 185.6L228 197.7L228.5 197.7L228.5 188.0L229 188.0L229 188.0L229.5 188.0L229.5 188.0L230 188.0L230 197.8L230.5 197.8L230.5 197.8L231 197.8L231 197.7L231.5 197.7L231.5 194.4L232 194.4L232 194.4L232.5 194.4L232.5 194.5L233 194.5L233 186.7L233.5 186.7L233.5 186.7L234 186.7L234 194.8L234.5 194.8L234.5 194.8L235 194.8L235 194.8L235.5 194.8L235.5 187.8L236 187.8L236 187.8L236.5 187.8L236.5 188.3L237 188.3L237 188.3L237.5 188.3L237.5 193.4L238 193.4L238 181.3L238.5 181.3L238.5 181.4L239 181.4L239 183.4L239.5 183.4L239.5 183.4L240 183.4L240 196.8L240.5 196.8L240.5 196.8L241 196.8L241 196.9L241.5 196.9L241.5 194.5L242 194.5L242 194.5L242.5 194.5L242.5 194.6L243 194.6L243 198.2L243.5 198.2L243.5 197.5L244 197.5L244 197.5L244.5 197.5L244.5 197.6L245 197.6L245 194.2L245.5 194.2L245.5 194.2L246 194.2L246 194.3L246.5 194.3L246.5 186.4L247 186.4L247 186.4L247.5 186.4L247.5 196.1L248 196.1L248 196.1L248.5 196.1L248.5 196.1L249 196.1L249 196.0L249.5 196.0L249.5 194.1L250 194.1L250 195.4L250.5 195.4L250.5 180.8L251 180.8L251 180.9L251.5 180.9L251.5 180.9L252 180.9L252 198.6L252.5 198.6L252.5 198.7L253 198.7L253 198.7L253.5 198.7L253.5 196.1L254 196.1L254 196.1L254.5 196.1L254.5 196.1L255 196.1L255 197.1L255.5 197.1L255.5 197.2L256 197.2L256 197.2L256.5 197.2L256.5 197.3L257 197.3L257 197.3L257.5 197.3L257.5 197.6L258 197.6L258 197.7L258.5 197.7L258.5 194.1L259 194.1L259 185.7L259.5 185.7L259.5 196.6L260 196.6L260 196.7L260.5 196.7L260.5 196.7L261 196.7L261 185.0L261.5 185.0L261.5 185.0L262 185.0L262 185.1L262.5 185.1L262.5 179.2L263 179.2L263 179.2L263.5 179.2L263.5 180.1L264 180.1L264 180.1L264.5 180.1L264.5 180.1L265 180.1L265 198.4L265.5 198.4L265.5 198.5L266 198.5L266 187.8L266.5 187.8L266.5 187.8L267 187.8L267 187.8L267.5 187.8L267.5 180.4L268 180.4L268 180.4L268.5 180.4L268.5 199.9L269 199.9L269 199.9L269.5 199.9L269.5 199.9L270 199.9L270 199.7L270.5 199.7L270.5 187.9L271 187.9L271 187.9L271.5 187.9L271.5 196.5L272 196.5L272 196.6L272.5 196.6L272.5 196.6L273 196.6L273 196.8L273.5 196.8L273.5 196.8L274 196.8L274 196.9L274.5 196.9L274.5 182.4L275 182.4L275 182.4L275.5 182.4L275.5 195.9L276 195.9L276 196.0L276.5 196.0L276.5 197.9L277 197.9L277 197.9L277.5 197.9L277.5 196.9L278 196.9L278 197.0L278.5 197.0L278.5 183.5L279 183.5L279 183.5L279.5 183.5L279.5 195.9L280 195.9L280 195.9L280.5 195.9L280.5 198.2L281 198.2L281 198.2L281.5 198.2L281.5 200.9L282 200.9L282 186.8L282.5 186.8L282.5 199.6L283 199.6L283 198.8L283.5 198.8L283.5 197.7L284 197.7L284 202.2L284.5 202.2L284.5 206.7L285 206.7L285 211.2L285.5 211.2L285.5 215.7L286 215.7L286 220.1L286.5 220.1L286.5 224.6L287 224.6L287 221.3L287.5 221.3L287.5 217.2L288 217.2L288 213.0L288.5 213.0L288.5 208.8L289 208.8L289 204.7L289.5 204.7L289.5 200.5L290 200.5L290 196.4L290.5 196.4L290.5 192.2L291 192.2L291 188.1L291.5 188.1L291.5 184.9L292 184.9L292 184.6L292.5 184.6L292.5 184.1L293 184.1L293 184.1L293.5 184.1L293.5 184.1L294 184.1L294 179.5L294.5 179.5L294.5 179.1L295 179.1L295 184.2L295.5 184.2L295.5 184.2L296 184.2L296 181.2L296.5 181.2L296.5 181.2L297 181.2L297 184.5L297.5 184.5L297.5 180.4L298 180.4L298 180.4L298.5 180.4L298.5 183.4L299 183.4L299 183.4L299.5 183.4L299.5 184.7L300 184.7L300 184.7L300.5 184.7L300.5 179.4L301 179.4L301 180.6L301.5 180.6L301.5 180.6L302 180.6L302 180.6L302.5 180.6L302.5 183.7L303 183.7L303 183.7L303.5 183.7L303.5 184.3L304 184.3L304 184.3L304.5 184.3L304.5 179.7L305 179.7L305 179.7L305.5 179.7L305.5 185.0L306 185.0L306 184.3L306.5 184.3L306.5 183.7L307 183.7L307 184.9L307.5 184.9L307.5 181.1L308 181.1L308 185.3L308.5 185.3L308.5 185.3L309 185.3L309 179.7L309.5 179.7L309.5 179.7L310 179.7L310 179.7L310.5 179.7L310.5 181.4L311 181.4L311 181.5L311.5 181.5L311.5 185.1L312 185.1L312 185.1L312.5 185.1L312.5 185.3L313 185.3L313 185.3L313.5 185.3L313.5 184.9L314 184.9L314 183.9L314.5 183.9L314.5 183.9L315 183.9L315 183.9L315.5 183.9L315.5 183.7L316 183.7L316 183.7L316.5 183.7L316.5 184.2L317 184.2L317 183.7L317.5 183.7L317.5 184.5L318 184.5L318 185.2L318.5 185.2L318.5 185.2L319 185.2L319 181.5L319.5 181.5L319.5 181.5L320 181.5L320 181.5L320.5 181.5L320.5 185.2L321 185.2L321 185.2L321.5 185.2L321.5 185.2L322 185.2L322 185.1L322.5 185.1L322.5 184.0L323 184.0L323 184.0L323.5 184.0L323.5 183.8L324 183.8L324 183.9L324.5 183.9L324.5 183.9L325 183.9L325 183.4L325.5 183.4L325.5 181.1L326 181.1L326 181.1L326.5 181.1L326.5 181.0L327 181.0L327 181.0L327.5 181.0L327.5 181.0L328 181.0L328 185.5L328.5 185.5L328.5 185.5L329 185.5L329 185.1L329.5 185.1L329.5 185.2L330 185.2L330 183.5L330.5 183.5L330.5 183.5L331 183.5L331 183.5L331.5 183.5L331.5 185.0L332 185.0L332 185.1L332.5 185.1L332.5 185.1L333 185.1L333 185.5L333.5 185.5L333.5 185.8L334 185.8L334 181.5L334.5 181.5L334.5 181.5L335 181.5L335 181.5L335.5 181.5L335.5 184.3L336 184.3L336 184.3L336.5 184.3L336.5 186.2L337 186.2L337 186.2L337.5 186.2L337.5 184.1L338 184.1L338 184.2L338.5 184.2L338.5 186.1L339 186.1L339 186.1L339.5 186.1L339.5 186.1L340 186.1L340 186.4L340.5 186.4L340.5 186.4L341 186.4L341 186.5L341.5 186.5L341.5 186.5L342 186.5L342 183.9L342.5 183.9L342.5 183.9L343 183.9L343 186.7L343.5 186.7L343.5 186.7L344 186.7L344 179.4L344.5 179.4L344.5 179.4L345 179.4L345 186.8L345.5 186.8L345.5 186.8L346 186.8L346 185.9L346.5 185.9L346.5 185.9L347 185.9L347 185.9L347.5 185.9L347.5 187.0L348 187.0L348 187.1L348.5 187.1L348.5 181.9L349 181.9L349 181.9L349.5 181.9L349.5 187.2L350 187.2L350 187.2L350.5 187.2L350.5 187.2L351 187.2L351 180.7L351.5 180.7L351.5 180.7L352 180.7L352 180.7L352.5 180.7L352.5 179.6L353 179.6L353 179.6L353.5 179.6L353.5 181.3L354 181.3L354 181.4L354.5 181.4L354.5 186.1L355 186.1L355 180.4L355.5 180.4L355.5 186.2L356 186.2L356 188.0L356.5 188.0L356.5 188.0L357 188.0L357 188.0L357.5 188.0L357.5 187.2L358 187.2L358 187.2L358.5 187.2L358.5 187.4L359 187.4L359 186.0L359.5 186.0L359.5 186.0L360 186.0L360 188.3L360.5 188.3L360.5 188.3L361 188.3L361 188.3L361.5 188.3L361.5 186.5L362 186.5L362 186.5L362.5 186.5L362.5 187.3L363 187.3L363 182.9L363.5 182.9L363.5 179.9L364 179.9L364 179.9L364.5 179.9L364.5 179.9L365 179.9L365 188.2L365.5 188.2L365.5 188.2L366 188.2L366 188.3L366.5 188.3L366.5 183.3L367 183.3L367 181.3L367.5 181.3L367.5 181.3L368 181.3L368 182.3L368.5 182.3L368.5 182.3L369 182.3L369 182.3L369.5 182.3L369.5 189.0L370 189.0L370 189.1L370.5 189.1L370.5 179.8L371 179.8L371 179.8L371.5 179.8L371.5 179.8L372 179.8L372 183.7L372.5 183.7L372.5 183.7L373 183.7L373 183.7L373.5 183.7L373.5 189.1L374 189.1L374 189.2L374.5 189.2L374.5 186.8L375 186.8L375 186.9L375.5 186.9L375.5 186.9L376 186.9L376 186.4L376.5 186.4L376.5 187.8L377 187.8L377 187.8L377.5 187.8L377.5 187.1L378 187.1L378 183.3L378.5 183.3L378.5 183.3L379 183.3L379 189.5L379.5 189.5L379.5 189.5L380 189.5L380 189.5L380.5 189.5L380.5 182.8L381 182.8L381 182.8L381.5 182.8L381.5 188.2L382 188.2L382 188.2L382.5 188.2L382.5 182.0L383 182.0L383 182.1L383.5 182.1L383.5 189.4L384 189.4L384 189.4L384.5 189.4L384.5 189.9L385 189.9L385 189.9L385.5 189.9L385.5 190.3L386 190.3L386 190.3L386.5 190.3L386.5 190.2L387 190.2L387 190.2L387.5 190.2L387.5 190.3L388 190.3L388 188.3L388.5 188.3L388.5 188.3L389 188.3L389 180.6L389.5 180.6L389.5 180.6L390 180.6L390 190.1L390.5 190.1L390.5 190.1L391 190.1L391 181.7L391.5 181.7L391.5 189.5L392 189.5L392 189.5L392.5 189.5L392.5 189.7L393 189.7L393 179.7L393.5 179.7L393.5 179.7L394 179.7L394 188.8L394.5 188.8L394.5 188.9L395 188.9L395 181.1L395.5 181.1L395.5 188.7L396 188.7L396 188.7L396.5 188.7L396.5 180.5L397 180.5L397 180.5L397.5 180.5L397.5 180.5L398 180.5L398 187.9L398.5 187.9L398.5 182.0L399 182.0L399 182.1L399.5 182.1L399.5 182.2L400 182.2L400 182.2L400.5 182.2L400.5 181.7L401 181.7L401 181.7L401.5 181.7L401.5 179.8L402 179.8L402 190.5L402.5 190.5L402.5 190.5L403 190.5L403 182.1L403.5 182.1L403.5 189.7L404 189.7L404 189.7L404.5 189.7L404.5 189.7L405 189.7L405 189.5L405.5 189.5L405.5 189.5L406 189.5L406 189.6L406.5 189.6L406.5 187.7L407 187.7L407 187.8L407.5 187.8L407.5 187.8L408 187.8L408 190.6L408.5 190.6L408.5 189.2L409 189.2L409 189.2L409.5 189.2L409.5 189.2L410 189.2L410 190.5L410.5 190.5L410.5 181.0L411 181.0L411 181.0L411.5 181.0L411.5 181.1L412 181.1L412 188.5L412.5 188.5L412.5 188.6L413 188.6L413 187.1L413.5 187.1L413.5 187.1L414 187.1L414 181.7L414.5 181.7L414.5 181.7L415 181.7L415 181.7L415.5 181.7L415.5 189.2L416 189.2L416 190.2L416.5 190.2L416.5 190.2L417 190.2L417 187.1L417.5 187.1L417.5 188.4L418 188.4L418 188.4L418.5 188.4L418.5 190.1L419 190.1L419 190.1L419.5 190.1L419.5 180.9L420 180.9L420 191.4L420.5 191.4L420.5 191.4L421 191.4L421 182.2L421.5 182.2L421.5 182.2L422 182.2L422 182.2L422.5 182.2L422.5 183.9L423 183.9L423 183.9L423.5 183.9L423.5 184.3L424 184.3L424 184.3L424.5 184.3L424.5 184.3L425 184.3L425 188.7L425.5 188.7L425.5 188.7L426 188.7L426 188.7L426.5 188.7L426.5 181.1L427 181.1L427 181.1L427.5 181.1L427.5 184.5L428 184.5L428 184.5L428.5 184.5L428.5 181.7L429 181.7L429 181.7L429.5 181.7L429.5 181.8L430 181.8L430 190.7L430.5 190.7L430.5 179.6L431 179.6L431 179.6L431.5 179.6L431.5 191.1L432 191.1L432 191.1L432.5 191.1L432.5 190.6L433 190.6L433 190.4L433.5 190.4L433.5 190.5L434 190.5L434 190.6L434.5 190.6L434.5 190.6L435 190.6L435 190.7L435.5 190.7L435.5 191.2L436 191.2L436 191.2L436.5 191.2L436.5 191.2L437 191.2L437 183.5L437.5 183.5L437.5 183.5L438 183.5L438 180.6L438.5 180.6L438.5 180.6L439 180.6L439 183.3L439.5 183.3L439.5 183.3L440 183.3L440 190.7L440.5 190.7L440.5 191.3L441 191.3L441 191.3L441.5 191.3L441.5 191.5L442 191.5L442 191.6L442.5 191.6L442.5 181.1L443 181.1L443 192.1L443.5 192.1L443.5 192.3L444 192.3L444 192.4L444.5 192.4L444.5 191.5L445 191.5L445 179.8L445.5 179.8L445.5 179.8L446 179.8L446 184.4L446.5 184.4L446.5 180.9L447 180.9L447 189.6L447.5 189.6L447.5 189.7L448 189.7L448 189.7L448.5 189.7L448.5 181.4L449 181.4L449 183.5L449.5 183.5L449.5 183.5L450 183.5L450 184.0L450.5 184.0L450.5 192.6L451 192.6L451 192.7L451.5 192.7L451.5 191.2L452 191.2L452 193.8L452.5 193.8L452.5 193.8L453 193.8L453 193.9L453.5 193.9L453.5 193.7L454 193.7L454 193.7L454.5 193.7L454.5 183.4L455 183.4L455 183.5L455.5 183.5L455.5 183.5L456 183.5L456 185.5L456.5 185.5L456.5 190.3L457 190.3L457 190.4L457.5 190.4L457.5 182.9L458 182.9L458 182.9L458.5 182.9L458.5 182.9L459 182.9L459 192.6L459.5 192.6L459.5 192.6L460 192.6L460 194.3L460.5 194.3L460.5 192.2L461 192.2L461 192.2L461.5 192.2L461.5 194.1L462 194.1L462 194.1L462.5 194.1L462.5 194.1L463 194.1L463 184.0L463.5 184.0L463.5 184.0L464 184.0L464 191.8L464.5 191.8L464.5 191.8L465 191.8L465 183.9L465.5 183.9L465.5 183.9L466 183.9L466 183.9L466.5 183.9L466.5 189.3L467 189.3L467 189.3L467.5 189.3L467.5 189.3L468 189.3L468 182.5L468.5 182.5L468.5 182.5L469 182.5L469 190.2L469.5 190.2L469.5 180.4L470 180.4L470 180.4L470.5 180.4L470.5 182.5L471 182.5L471 182.9L471.5 182.9L471.5 182.9L472 182.9L472 182.2L472.5 182.2L472.5 182.2L473 182.2L473 182.2L473.5 182.2L473.5 194.1L474 194.1L474 191.2L474.5 191.2L474.5 191.2L475 191.2L475 185.6L475.5 185.6L475.5 185.6L476 185.6L476 185.9L476.5 185.9L476.5 185.9L477 185.9L477 184.3L477.5 184.3L477.5 184.3L478 184.3L478 183.8L478.5 183.8L478.5 192.4L479 192.4L479 192.5L479.5 192.5L479.5 193.3L480 193.3L480 193.3L480.5 193.3L480.5 180.9L481 180.9L481 180.9L481.5 180.9L481.5 184.3L482 184.3L482 184.3L482.5 184.3L482.5 192.7L483 192.7L483 192.7L483.5 192.7L483.5 192.8L484 192.8L484 192.1L484.5 192.1L484.5 192.1L485 192.1L485 192.2L485.5 192.2L485.5 190.8L486 190.8L486 190.8L486.5 190.8L486.5 190.9L487 190.9L487 182.9L487.5 182.9L487.5 183.7L488 183.7L488 183.7L488.5 183.7L488.5 192.3L489 192.3L489 192.3L489.5 192.3L489.5 192.3L490 192.3L490 192.3L490.5 192.3L490.5 183.9L491 183.9L491 183.9L491.5 183.9L491.5 191.5L492 191.5L492 191.5L492.5 191.5L492.5 192.2L493 192.2L493 184.8L493.5 184.8L493.5 184.8L494 184.8L494 184.8L494.5 184.8L494.5 191.5L495 191.5L495 191.6L495.5 191.6L495.5 191.6L496 191.6L496 181.8L496.5 181.8L496.5 183.1L497 183.1L497 183.1L497.5 183.1L497.5 183.1L498 183.1L498 186.5L498.5 186.5L498.5 186.5L499 186.5L499 185.5L499.5 185.5L499.5 185.6L500 185.6L500 185.6L500.5 185.6L500.5 193.6L501 193.6L501 193.6L501.5 193.6L501.5 185.0L502 185.0L502 185.0L502.5 185.0L502.5 185.0L503 185.0L503 186.9L503.5 186.9L503.5 186.9L504 186.9L504 195.6L504.5 195.6L504.5 195.7L505 195.7L505 182.1L505.5 182.1L505.5 182.1L506 182.1L506 185.5L506.5 185.5L506.5 185.6L507 185.6L507 181.8L507.5 181.8L507.5 181.8L508 181.8L508 181.8L508.5 181.8L508.5 192.5L509 192.5L509 192.6L509.5 192.6L509.5 196.4L510 196.4L510 196.4L510.5 196.4L510.5 195.1L511 195.1L511 191.6L511.5 191.6L511.5 191.6L512 191.6L512 195.4L512.5 195.4L512.5 195.5L513 195.5L513 195.5L513.5 195.5L513.5 183.4L514 183.4L514 183.4L514.5 183.4L514.5 183.4L515 183.4L515 184.6L515.5 184.6L515.5 184.6L516 184.6L516 184.6L516.5 184.6L516.5 195.6L517 195.6L517 195.7L517.5 195.7L517.5 195.7L518 195.7L518 181.1L518.5 181.1L518.5 181.1L519 181.1L519 195.5L519.5 195.5L519.5 191.1L520 191.1L520 191.1L520.5 191.1L520.5 195.4L521 195.4L521 195.5L521.5 195.5L521.5 196.2L522 196.2L522 196.3L522.5 196.3L522.5 196.3L523 196.3L523 179.9L523.5 179.9L523.5 179.9L524 179.9L524 179.9L524.5 179.9L524.5 184.3L525 184.3L525 184.3L525.5 184.3L525.5 195.9L526 195.9L526 195.9L526.5 195.9L526.5 187.5L527 187.5L527 187.6L527.5 187.6L527.5 195.1L528 195.1L528 195.1L528.5 195.1L528.5 192.9L529 192.9L529 192.9L529.5 192.9L529.5 192.9L530 192.9L530 185.9L530.5 185.9L530.5 185.9L531 185.9L531 183.1L531.5 183.1L531.5 183.1L532 183.1L532 195.3L532.5 195.3L532.5 195.4L533 195.4L533 195.4L533.5 195.4L533.5 198.5L534 198.5L534 193.5L534.5 193.5L534.5 193.6L535 193.6L535 193.6L535.5 193.6L535.5 197.4L536 197.4L536 197.4L536.5 197.4L536.5 198.2L537 198.2L537 198.2L537.5 198.2L537.5 198.2L538 198.2L538 181.5L538.5 181.5L538.5 181.5L539 181.5L539 198.5L539.5 198.5L539.5 198.5L540 198.5L540 198.7L540.5 198.7L540.5 193.3L541 193.3L541 185.5L541.5 185.5L541.5 196.8L542 196.8L542 196.8L542.5 196.8L542.5 188.6L543 188.6L543 183.5L543.5 183.5L543.5 183.5L544 183.5L544 183.5L544.5 183.5L544.5 193.2L545 193.2L545 193.2L545.5 193.2L545.5 184.0L546 184.0L546 184.0L546.5 184.0L546.5 184.0L547 184.0L547 198.1L547.5 198.1L547.5 198.1L548 198.1L548 198.1L548.5 198.1L548.5 182.8L549 182.8L549 182.8L549.5 182.8L549.5 182.8L550 182.8L550 186.8L550.5 186.8L550.5 186.9L551 186.9L551 193.2L551.5 193.2L551.5 193.3L552 193.3L552 192.3L552.5 192.3L552.5 197.5L553 197.5L553 197.5L553.5 197.5L553.5 197.5L554 197.5L554 194.5L554.5 194.5L554.5 180.4L555 180.4L555 180.4L555.5 180.4L555.5 180.4L556 180.4L556 185.1L556.5 185.1L556.5 185.1L557 185.1L557 185.2L557.5 185.2L557.5 181.7L558 181.7L558 181.7L558.5 181.7L558.5 196.4L559 196.4L559 196.4L559.5 196.4L559.5 197.1L560 197.1L560 197.1L560.5 197.1L560.5 196.0L561 196.0L561 196.0L561.5 196.0L561.5 192.9L562 192.9L562 192.9L562.5 192.9L562.5 184.4L563 184.4L563 184.4L563.5 184.4L563.5 186.2L564 186.2L564 194.5L564.5 194.5L564.5 194.5L565 194.5L565 185.6L565.5 185.6L565.5 185.6L566 185.6L566 197.0L566.5 197.0L566.5 197.0L567 197.0L567 181.8L567.5 181.8L567.5 198.2L568 198.2L568 198.2L568.5 198.2L568.5 192.2L569 192.2L569 180.5L569.5 180.5L569.5 180.5L570 180.5L570 180.5L570.5 180.5L570.5 204.6L571 204.6L571 204.6L571.5 204.6L571.5 188.3L572 188.3L572 194.8L572.5 194.8L572.5 194.8L573 194.8L573 183.5L573.5 183.5L573.5 183.5L574 183.5L574 183.5L574.5 183.5L574.5 194.2L575 194.2L575 194.1L575.5 194.1L575.5 194.1L576 194.1L576 200.1L576.5 200.1L576.5 200.1L577 200.1L577 200.4L577.5 200.4L577.5 200.4L578 200.4L578 197.9L578.5 197.9L578.5 197.9L579 197.9L579 198.7L579.5 198.7L579.5 198.7L580 198.7L580 189.8L580.5 189.8L580.5 189.8L581 189.8L581 186.4L581.5 186.4L581.5 186.4L582 186.4L582 185.6L582.5 185.6L582.5 185.6L583 185.6L583 197.5L583.5 197.5L583.5 197.5L584 197.5L584 182.0L584.5 182.0L584.5 182.0L585 182.0L585 200.3L585.5 200.3L585.5 200.3L586 200.3L586 193.6L586.5 193.6L586.5 193.6L587 193.6L587 198.6L587.5 198.6L587.5 182.8L588 182.8L588 182.8L588.5 182.8L588.5 182.8L589 182.8L589 199.8L589.5 199.8L589.5 199.8L590 199.8L590 181.9L590.5 181.9L590.5 181.9L591 181.9L591 198.6L591.5 198.6L591.5 189.9L592 189.9L592 189.9L592.5 189.9L592.5 197.0L593 197.0L593 197.0L593.5 197.0L593.5 183.7L594 183.7L594 183.7L594.5 183.7L594.5 186.1L595 186.1L595 186.1L595.5 186.1L595.5 187.0L596 187.0L596 187.0L596.5 187.0L596.5 196.0L597 196.0L597 196.0L597.5 196.0L597.5 196.0L598 196.0L598 183.3L598.5 183.3L598.5 198.5L599 198.5L599 198.5L599.5 198.5L599.5 198.5L600 198.5L600 182.4L600.5 182.4L600.5 189.0L601 189.0L601 189.0L601.5 189.0L601.5 187.1L602 187.1L602 187.1L602.5 187.1L602.5 199.3L603 199.3L603 199.3L603.5 199.3L603.5 199.3L604 199.3L604 187.7L604.5 187.7L604.5 187.7L605 187.7L605 199.4L605.5 199.4L605.5 199.4L606 199.4L606 199.3L606.5 199.3L606.5 199.3L607 199.3L607 195.8L607.5 195.8L607.5 195.8L608 195.8L608 187.3L608.5 187.3L608.5 187.3L609 187.3L609 184.6L609.5 184.6L609.5 187.7L610 187.7L610 183.4L610.5 183.4L610.5 183.4L611 183.4L611 186.3L611.5 186.3L611.5 198.0L612 198.0L612 197.9L612.5 197.9L612.5 191.9L613 191.9L613 191.9L613.5 191.9L613.5 193.8L614 193.8L614 193.8L614.5 193.8L614.5 198.5L615 198.5L615 198.5L615.5 198.5L615.5 198.5L616 198.5L616 197.9L616.5 197.9L616.5 197.9L617 197.9L617 196.9L617.5 196.9L617.5 183.8L618 183.8L618 183.8L618.5 183.8L618.5 183.8L619 183.8L619 199.9L619.5 199.9L619.5 199.9L620 199.9L620 194.9L620.5 194.9L620.5 194.9L621 194.9L621 194.9L621.5 194.9L621.5 197.3L622 197.3L622 183.4L622.5 183.4L622.5 183.4L623 183.4L623 183.4L623.5 183.4L623.5 197.8L624 197.8L624 197.8L624.5 197.8L624.5 197.8L625 197.8L625 198.0L625.5 198.0L625.5 199.4L626 199.4L626 199.4L626.5 199.4L626.5 199.4L627 199.4L627 196.1L627.5 196.1L627.5 198.6L628 198.6L628 198.6L628.5 198.6L628.5 198.6L629 198.6L629 186.3L629.5 186.3L629.5 186.3L630 186.3L630 184.5L630.5 184.5L630.5 184.5L631 184.5L631 184.5L631.5 184.5L631.5 180.3L632 180.3L632 180.3L632.5 180.3L632.5 180.3L633 180.3L633 187.0L633.5 187.0L633.5 187.0L634 187.0L634 194.3L634.5 194.3L634.5 194.3L635 194.3L635 198.9L635.5 198.9L635.5 198.2L636 198.2L636 198.2L636.5 198.2L636.5 196.5L637 196.5L637 196.5L637.5 196.5L637.5 196.5L638 196.5L638 186.4L638.5 186.4L638.5 186.4L639 186.4L639 184.1L639.5 184.1L639.5 211.8L640 211.8L640 211.8L640.5 211.8L640.5 211.8L641 211.8L641 211.8L641.5 211.8L641.5 199.0L642 199.0L642 194.9L642.5 194.9L642.5 199.0L643 199.0L643 199.0L643.5 199.0L643.5 186.4L644 186.4L644 186.4L644.5 186.4L644.5 199.0L645 199.0L645 199.0L645.5 199.0L645.5 187.9L646 187.9L646 187.9L646.5 187.9L646.5 187.9L647 187.9L647 183.8L647.5 183.8L647.5 183.8L648 183.8L648 183.8L648.5 183.8L648.5 199.7L649 199.7L649 199.7L649.5 199.7L649.5 198.5L650 198.5L650 198.5L650.5 198.5L650.5 193.0L651 193.0L651 193.0L651.5 193.0L651.5 193.0L652 193.0L652 185.9L652.5 185.9L652.5 185.9L653 185.9L653 192.7L653.5 192.7L653.5 192.7L654 192.7L654 197.9L654.5 197.9L654.5 197.9L655 197.9L655 183.1L655.5 183.1L655.5 186.9L656 186.9L656 186.9L656.5 186.9L656.5 196.6L657 196.6L657 196.6L657.5 196.6L657.5 187.2L658 187.2L658 187.2L658.5 187.2L658.5 196.8L659 196.8L659 196.8L659.5 196.8L659.5 197.8L660 197.8L660 196.7L660.5 196.7L660.5 196.7L661 196.7L661 196.7L661.5 196.7L661.5 187.7L662 187.7L662 197.9L662.5 197.9L662.5 197.9L663 197.9L663 197.9L663.5 197.9L663.5 184.6L664 184.6L664 184.6L664.5 184.6L664.5 182.3L665 182.3L665 197.9L665.5 197.9L665.5 197.9L666 197.9L666 197.9L666.5 197.9L666.5 183.5L667 183.5L667 183.5L667.5 183.5L667.5 199.6L668 199.6L668 199.6L668.5 199.6L668.5 199.6L669 199.6L669 184.3L669.5 184.3L669.5 184.3L670 184.3L670 183.1L670.5 183.1L670.5 183.1L671 183.1L671 185.5L671.5 185.5L671.5 185.5L672 185.5L672 186.0L672.5 186.0L672.5 193.3L673 193.3L673 198.1L673.5 198.1L673.5 198.1L674 198.1L674 185.0L674.5 185.0L674.5 185.0L675 185.0L675 183.1L675.5 183.1L675.5 183.1L676 183.1L676 207.0L676.5 207.0L676.5 207.0L677 207.0L677 207.0L677.5 207.0L677.5 207.0L678 207.0L678 195.2L678.5 195.2L678.5 192.5L679 192.5L679 192.5L679.5 192.5L679.5 192.5L680 192.5L680 198.5L680.5 198.5L680.5 199.2L681 199.2L681 199.2L681.5 199.2L681.5 199.2L682 199.2L682 195.1L682.5 195.1L682.5 195.1L683 195.1L683 196.9L683.5 196.9L683.5 196.9L684 196.9L684 196.9L684.5 196.9L684.5 188.4L685 188.4L685 188.4L685.5 188.4L685.5 188.4L686 188.4L686 182.9L686.5 182.9L686.5 184.1L687 184.1L687 184.1L687.5 184.1L687.5 193.2L688 193.2L688 193.2L688.5 193.2L688.5 193.2L689 193.2L689 198.8L689.5 198.8L689.5 198.8L690 198.8L690 198.8L690.5 198.8L690.5 185.7L691 185.7L691 185.7L691.5 185.7L691.5 193.3L692 193.3L692 185.2L692.5 185.2L692.5 198.5L693 198.5L693 186.7L693.5 186.7L693.5 197.6L694 197.6L694 197.6L694.5 197.6L694.5 198.0L695 198.0L695 197.9L695.5 197.9L695.5 197.9L696 197.9L696 192.6L696.5 192.6L696.5 192.5L697 192.5L697 192.5L697.5 192.5L697.5 188.1L698 188.1L698 188.1L698.5 188.1L698.5 198.9L699 198.9L699 198.9L699.5 198.9L699.5 184.5L700 184.5L700 184.5L700.5 184.5L700.5 184.2L701 184.2L701 189.1L701.5 189.1L701.5 189.1L702 189.1L702 199.0L702.5 199.0L702.5 199.0L703 199.0L703 199.0L703.5 199.0L703.5 184.9L704 184.9L704 185.2L704.5 185.2L704.5 186.7L705 186.7L705 186.7L705.5 186.7L705.5 188.2L706 188.2L706 188.2L706.5 188.2L706.5 188.2L707 188.2L707 185.1L707.5 185.1L707.5 185.1L708 185.1L708 196.8L708.5 196.8L708.5 186.6L709 186.6L709 186.6L709.5 186.6L709.5 188.3L710 188.3L710 212.7L710.5 212.7L710.5 212.7L711 212.7L711 212.7L711.5 212.7L711.5 212.7L712 212.7L712 212.7L712.5 212.7L712.5 212.7L713 212.7L713 180.4L713.5 180.4L713.5 180.7L714 180.7L714 183.8L714.5 183.8L714.5 183.8L715 183.8L715 183.5L715.5 183.5L715.5 183.5L716 183.5L716 183.5L716.5 183.5L716.5 183.2L717 183.2L717 179.5L717.5 179.5L717.5 179.5L718 179.5L718 179.5L718.5 179.5L718.5 179.5L719 179.5L719 183.2L719.5 183.2L719.5 179.6L720 179.6L720 179.6L720.5 179.6L720.5 180.5L721 180.5L721 180.5L721.5 180.5L721.5 182.2L722 182.2L722 182.2L722.5 182.2L722.5 182.2L723 182.2L723 183.0L723.5 183.0L723.5 179.3L724 179.3L724 180.3L724.5 180.3L724.5 180.3L725 180.3L725 180.1L725.5 180.1L725.5 180.1L726 180.1L726 182.6L726.5 182.6L726.5 182.9L727 182.9L727 182.9L727.5 182.9L727.5 182.9L728 182.9L728 182.8L728.5 182.8L728.5 182.8L729 182.8L729 183.5L729.5 183.5L729.5 183.5L730 183.5L730 183.5L730.5 183.5L730.5 183.5L731 183.5L731 183.5L731.5 183.5L731.5 179.5L732 179.5L732 180.8L732.5 180.8L732.5 180.8L733 180.8L733 197.5L733.5 197.5L733.5 197.5L734 197.5L734 180.1L734.5 180.1L734.5 183.3L735 183.3L735 182.3L735.5 182.3L735.5 182.3L736 182.3L736 183.2L736.5 183.2L736.5 183.5L737 183.5L737 183.8L737.5 183.8L737.5 183.8L738 183.8L738 183.8L738.5 183.8L738.5 181.0L739 181.0L739 180.7L739.5 180.7L739.5 180.7L740 180.7L740 180.7L740.5 180.7L740.5 180.2L741 180.2L741 180.2L741.5 180.2L741.5 180.2L742 180.2L742 179.5L742.5 179.5L742.5 179.5L743 179.5L743 179.5L743.5 179.5L743.5 182.6L744 182.6L744 182.6L744.5 182.6L744.5 182.6L745 182.6L745 182.9L745.5 182.9L745.5 182.9L746 182.9L746 183.1L746.5 183.1L746.5 180.4L747 180.4L747 180.4L747.5 180.4L747.5 179.0L748 179.0L748 179.0L748.5 179.0L748.5 179.0L749 179.0L749 182.8L749.5 182.8L749.5 182.8L750 182.8L750 182.8L750.5 182.8L750.5 179.7L751 179.7L751 179.7L751.5 179.7L751.5 179.7L752 179.7L752 183.4L752.5 183.4L752.5 183.7L753 183.7L753 183.7L753.5 183.7L753.5 180.4L754 180.4L754 181.2L754.5 181.2L754.5 181.2L755 181.2L755 179.8L755.5 179.8L755.5 179.8L756 179.8L756 179.8L756.5 179.8L756.5 184.0L757 184.0L757 184.0L757.5 184.0L757.5 182.5L758 182.5L758 182.5L758.5 182.5L758.5 182.5L759 182.5L759 181.1L759.5 181.1L759.5 181.1L760 181.1L760 183.9L760.5 183.9L760.5 183.9L761 183.9L761 183.8L761.5 183.8L761.5 183.8L762 183.8L762 183.2L762.5 183.2L762.5 183.2L763 183.2L763 183.4L763.5 183.4L763.5 183.4L764 183.4L764 183.8L764.5 183.8L764.5 183.8L765 183.8L765 180.8L765.5 180.8L765.5 180.8L766 180.8L766 179.5L766.5 179.5L766.5 179.5L767 179.5L767 182.3L767.5 182.3L767.5 182.3L768 182.3L768 179.0L768.5 179.0L768.5 179.0L769 179.0L769 182.4L769.5 182.4L769.5 182.4L770 182.4L770 180.2L770.5 180.2L770.5 180.2L771 180.2L771 183.3L771.5 183.3L771.5 183.3L772 183.3L772 179.6L772.5 179.6L772.5 179.6L773 179.6L773 183.2L773.5 183.2L773.5 183.2L774 183.2L774 181.9L774.5 181.9L774.5 181.9L775 181.9L775 183.4L775.5 183.4L775.5 183.4L776 183.4L776 182.8L776.5 182.8L776.5 182.8L777 182.8L777 182.6L777.5 182.6L777.5 182.6L778 182.6L778 180.0L778.5 180.0L778.5 180.0L779 180.0L779 182.9L779.5 182.9L779.5 182.9L780 182.9L780 182.9L780.5 182.9L780.5 183.2L781 183.2L781 206.1L781.5 206.1L781.5 206.1L782 206.1L782 206.1L782.5 206.1L782.5 206.1L783 206.1L783 206.1L783.5 206.1L783.5 206.1L784 206.1L784 180.2L784.5 180.2L784.5 180.2L785 180.2L785 183.7L785.5 183.7L785.5 180.2L786 180.2L786 180.2L786.5 180.2L786.5 182.9L787 182.9L787 182.9L787.5 182.9L787.5 183.5L788 183.5L788 183.5L788.5 183.5L788.5 183.5L789 183.5L789 182.6L789.5 182.6L789.5 180.3L790 180.3L790 184.1L790.5 184.1L790.5 180.8L791 180.8L791 180.8L791.5 180.8L791.5 180.9L792 180.9L792 180.9L792.5 180.9L792.5 182.5L793 182.5L793 182.5L793.5 182.5L793.5 182.5L794 182.5L794 182.8L794.5 182.8L794.5 182.8L795 182.8L795 183.9L795.5 183.9L795.5 183.9L796 183.9L796 183.8L796.5 183.8L796.5 180.4L797 180.4L797 180.6L797.5 180.6L797.5 180.6L798 180.6L798 182.9L798.5 182.9L798.5 180.7L799 180.7L799 180.7L799.5 180.7L799.5 182.1L800 182.1L800 182.1L800.5 182.1L800.5 182.1L801 182.1L801 180.2L801.5 180.2L801.5 180.2L802 180.2L802 180.2L802.5 180.2L802.5 179.1L803 179.1L803 179.1L803.5 179.1L803.5 180.0L804 180.0L804 180.0L804.5 180.0L804.5 183.2L805 183.2L805 183.2L805.5 183.2L805.5 183.3L806 183.3L806 183.3L806.5 183.3L806.5 180.6L807 180.6L807 180.6L807.5 180.6L807.5 180.6L808 180.6L808 179.3L808.5 179.3L808.5 179.3L809 179.3L809 179.9L809.5 179.9L809.5 179.9L810 179.9L810 183.3L810.5 183.3L810.5 180.8L811 180.8L811 180.8L811.5 180.8L811.5 182.9L812 182.9L812 182.9L812.5 182.9L812.5 182.8L813 182.8L813 179.7L813.5 179.7L813.5 179.7L814 179.7L814 184.0L814.5 184.0L814.5 184.0L815 184.0L815 180.6L815.5 180.6L815.5 183.6L816 183.6L816 183.6L816.5 183.6L816.5 179.9L817 179.9L817 179.9L817.5 179.9L817.5 179.6L818 179.6L818 179.6L818.5 179.6L818.5 179.6L819 179.6L819 183.3L819.5 183.3L819.5 182.7L820 182.7L820 181.2L820.5 181.2L820.5 183.8L821 183.8L821 179.3L821.5 179.3L821.5 179.3L822 179.3L822 183.5L822.5 183.5L822.5 183.5L823 183.5L823 179.6L823.5 179.6L823.5 180.8L824 180.8L824 180.8L824.5 180.8L824.5 182.6L825 182.6L825 182.6L825.5 182.6L825.5 182.6L826 182.6L826 179.3L826.5 179.3L826.5 179.3L827 179.3L827 179.0L827.5 179.0L827.5 179.0L828 179.0L828 182.6L828.5 182.6L828.5 180.5L829 180.5L829 179.8L829.5 179.8L829.5 179.8L830 179.8L830 179.8L830.5 179.8L830.5 183.0L831 183.0L831 180.5L831.5 180.5L831.5 182.0L832 182.0L832 182.0L832.5 182.0L832.5 180.4L833 180.4L833 179.4L833.5 179.4L833.5 179.4L834 179.4L834 179.4L834.5 179.4L834.5 179.0L835 179.0L835 179.0L835.5 179.0L835.5 179.0L836 179.0L836 183.8L836.5 183.8L836.5 183.8L837 183.8L837 183.8L837.5 183.8L837.5 183.9L838 183.9L838 183.9L838.5 183.9L838.5 183.9L839 183.9L839 183.7L839.5 183.7L839.5 179.7L840 179.7L840 179.7L840.5 179.7L840.5 183.9L841 183.9L841 183.9L841.5 183.9L841.5 183.9L842 183.9L842 183.3L842.5 183.3L842.5 183.8L843 183.8L843 179.2L843.5 179.2L843.5 179.2L844 179.2L844 179.9L844.5 179.9L844.5 179.9L845 179.9L845 183.7L845.5 183.7L845.5 183.7L846 183.7L846 181.0L846.5 181.0L846.5 181.0L847 181.0L847 181.0L847.5 181.0L847.5 183.2L848 183.2L848 183.2L848.5 183.2L848.5 179.3L849 179.3L849 179.3L849.5 179.3L849.5 183.2L850 183.2L850 183.2L850.5 183.2L850.5 183.3L851 183.3L851 205.6L851.5 205.6L851.5 206.5L852 206.5L852 207.5L852.5 207.5L852.5 208.4L853 208.4L853 209.3L853.5 209.3L853.5 210.2L854 210.2L854 193.0L854.5 193.0L854.5 211.9L855 211.9L855 212.7L855.5 212.7L855.5 213.5L856 213.5L856 214.3L856.5 214.3L856.5 197.2L857 197.2L857 215.9L857.5 215.9L857.5 199.0L858 199.0L858 217.3L858.5 217.3L858.5 218.0L859 218.0L859 201.9L859.5 201.9L859.5 202.9L860 202.9L860 204.0L860.5 204.0L860.5 220.5L861 220.5L861 221.1L861.5 221.1L861.5 221.7L862 221.7L862 222.2L862.5 222.2L862.5 222.7L863 222.7L863 223.1L863.5 223.1L863.5 223.6L864 223.6L864 223.9L864.5 223.9L864.5 224.3L865 224.3L865 224.6L865.5 224.6L865.5 224.8L866 224.8L866 225.0L866.5 225.0L866.5 225.1L867 225.1L867 226.9L866.5 226.9L866.5 227.0L866 227.0L866 227.2L865.5 227.2L865.5 227.4L865 227.4L865 227.7L864.5 227.7L864.5 228.1L864 228.1L864 228.4L863.5 228.4L863.5 228.9L863 228.9L863 229.3L862.5 229.3L862.5 229.8L862 229.8L862 230.3L861.5 230.3L861.5 230.9L861 230.9L861 247.0L860.5 247.0L860.5 248.0L860 248.0L860 232.7L859.5 232.7L859.5 250.1L859 250.1L859 234.0L858.5 234.0L858.5 252.0L858 252.0L858 253.0L857.5 253.0L857.5 253.9L857 253.9L857 254.8L856.5 254.8L856.5 255.6L856 255.6L856 256.5L855.5 256.5L855.5 239.3L855 239.3L855 240.1L854.5 240.1L854.5 241.0L854 241.0L854 241.8L853.5 241.8L853.5 260.6L853 260.6L853 243.6L852.5 243.6L852.5 244.5L852 244.5L852 245.5L851.5 245.5L851.5 263.6L851 263.6L851 267.3L850.5 267.3L850.5 267.3L850 267.3L850 266.4L849.5 266.4L849.5 266.4L849 266.4L849 266.4L848.5 266.4L848.5 265.8L848 265.8L848 265.8L847.5 265.8L847.5 266.1L847 266.1L847 266.1L846.5 266.1L846.5 271.0L846 271.0L846 271.5L845.5 271.5L845.5 271.5L845 271.5L845 271.5L844.5 271.5L844.5 272.0L844 272.0L844 272.0L843.5 272.0L843.5 271.0L843 271.0L843 271.0L842.5 271.0L842.5 272.9L842 272.9L842 272.9L841.5 272.9L841.5 268.1L841 268.1L841 268.1L840.5 268.1L840.5 268.1L840 268.1L840 268.1L839.5 268.1L839.5 268.1L839 268.1L839 268.1L838.5 268.1L838.5 267.0L838 267.0L838 267.0L837.5 267.0L837.5 266.7L837 266.7L837 266.7L836.5 266.7L836.5 267.5L836 267.5L836 266.0L835.5 266.0L835.5 267.1L835 267.1L835 267.1L834.5 267.1L834.5 267.7L834 267.7L834 267.7L833.5 267.7L833.5 266.0L833 266.0L833 266.0L832.5 266.0L832.5 271.3L832 271.3L832 271.3L831.5 271.3L831.5 267.7L831 267.7L831 267.6L830.5 267.6L830.5 271.7L830 271.7L830 271.7L829.5 271.7L829.5 271.7L829 271.7L829 266.0L828.5 266.0L828.5 266.0L828 266.0L828 267.4L827.5 267.4L827.5 267.4L827 267.4L827 272.0L826.5 272.0L826.5 272.0L826 272.0L826 272.0L825.5 272.0L825.5 265.9L825 265.9L825 265.9L824.5 265.9L824.5 270.8L824 270.8L824 270.8L823.5 270.8L823.5 267.7L823 267.7L823 267.7L822.5 267.7L822.5 270.8L822 270.8L822 269.6L821.5 269.6L821.5 269.6L821 269.6L821 269.6L820.5 269.6L820.5 265.3L820 265.3L820 270.0L819.5 270.0L819.5 270.4L819 270.4L819 270.4L818.5 270.4L818.5 265.8L818 265.8L818 265.8L817.5 265.8L817.5 266.7L817 266.7L817 269.9L816.5 269.9L816.5 269.9L816 269.9L816 267.2L815.5 267.2L815.5 271.5L815 271.5L815 271.5L814.5 271.5L814.5 266.2L814 266.2L814 266.2L813.5 266.2L813.5 266.2L813 266.2L813 265.6L812.5 265.6L812.5 265.7L812 265.7L812 267.9L811.5 267.9L811.5 267.9L811 267.9L811 267.9L810.5 267.9L810.5 266.4L810 266.4L810 266.4L809.5 266.4L809.5 266.4L809 266.4L809 270.9L808.5 270.9L808.5 270.9L808 270.9L808 266.4L807.5 266.4L807.5 266.4L807 266.4L807 267.8L806.5 267.8L806.5 267.8L806 267.8L806 267.8L805.5 267.8L805.5 272.0L805 272.0L805 272.0L804.5 272.0L804.5 266.2L804 266.2L804 266.2L803.5 266.2L803.5 267.2L803 267.2L803 267.2L802.5 267.2L802.5 265.9L802 265.9L802 265.9L801.5 265.9L801.5 267.2L801 267.2L801 267.2L800.5 267.2L800.5 267.2L800 267.2L800 270.0L799.5 270.0L799.5 270.0L799 270.0L799 272.3L798.5 272.3L798.5 270.8L798 270.8L798 270.8L797.5 270.8L797.5 265.8L797 265.8L797 265.8L796.5 265.8L796.5 265.8L796 265.8L796 266.8L795.5 266.8L795.5 266.8L795 266.8L795 266.8L794.5 266.8L794.5 266.9L794 266.9L794 272.3L793.5 272.3L793.5 272.3L793 272.3L793 272.3L792.5 272.3L792.5 266.5L792 266.5L792 266.5L791.5 266.5L791.5 267.6L791 267.6L791 267.6L790.5 267.6L790.5 269.9L790 269.9L790 269.9L789.5 269.9L789.5 271.4L789 271.4L789 271.4L788.5 271.4L788.5 265.6L788 265.6L788 265.6L787.5 265.6L787.5 265.6L787 265.6L787 266.5L786.5 266.5L786.5 266.5L786 266.5L786 265.1L785.5 265.1L785.5 265.1L785 265.1L785 266.5L784.5 266.5L784.5 266.5L784 266.5L784 245.9L783.5 245.9L783.5 245.9L783 245.9L783 245.9L782.5 245.9L782.5 245.9L782 245.9L782 245.9L781.5 245.9L781.5 245.9L781 245.9L781 270.3L780.5 270.3L780.5 272.7L780 272.7L780 272.7L779.5 272.7L779.5 265.6L779 265.6L779 266.5L778.5 266.5L778.5 266.5L778 266.5L778 270.8L777.5 270.8L777.5 270.8L777 270.8L777 270.8L776.5 270.8L776.5 270.4L776 270.4L776 267.0L775.5 267.0L775.5 267.0L775 267.0L775 267.0L774.5 267.0L774.5 267.6L774 267.6L774 267.6L773.5 267.6L773.5 273.0L773 273.0L773 273.0L772.5 273.0L772.5 265.9L772 265.9L772 267.5L771.5 267.5L771.5 267.5L771 267.5L771 267.5L770.5 267.5L770.5 266.1L770 266.1L770 266.1L769.5 266.1L769.5 271.9L769 271.9L769 271.9L768.5 271.9L768.5 266.8L768 266.8L768 266.8L767.5 266.8L767.5 272.0L767 272.0L767 272.0L766.5 272.0L766.5 269.7L766 269.7L766 269.6L765.5 269.6L765.5 269.6L765 269.6L765 269.6L764.5 269.6L764.5 264.8L764 264.8L764 264.8L763.5 264.8L763.5 264.9L763 264.9L763 264.9L762.5 264.9L762.5 264.7L762 264.7L762 264.7L761.5 264.7L761.5 266.5L761 266.5L761 266.5L760.5 266.5L760.5 270.9L760 270.9L760 270.9L759.5 270.9L759.5 270.9L759 270.9L759 267.1L758.5 267.1L758.5 267.1L758 267.1L758 267.1L757.5 267.1L757.5 271.8L757 271.8L757 271.8L756.5 271.8L756.5 271.6L756 271.6L756 271.6L755.5 271.6L755.5 270.1L755 270.1L755 270.1L754.5 270.1L754.5 264.8L754 264.8L754 264.8L753.5 264.8L753.5 270.8L753 270.8L753 267.3L752.5 267.3L752.5 271.4L752 271.4L752 271.4L751.5 271.4L751.5 272.4L751 272.4L751 272.4L750.5 272.4L750.5 272.4L750 272.4L750 271.0L749.5 271.0L749.5 271.0L749 271.0L749 271.8L748.5 271.8L748.5 271.8L748 271.8L748 272.3L747.5 272.3L747.5 264.9L747 264.9L747 264.9L746.5 264.9L746.5 264.9L746 264.9L746 269.6L745.5 269.6L745.5 269.6L745 269.6L745 269.6L744.5 269.6L744.5 265.6L744 265.6L744 265.6L743.5 265.6L743.5 265.6L743 265.6L743 265.6L742.5 265.6L742.5 269.5L742 269.5L742 270.6L741.5 270.6L741.5 270.6L741 270.6L741 267.1L740.5 267.1L740.5 271.7L740 271.7L740 271.7L739.5 271.7L739.5 271.7L739 271.7L739 264.8L738.5 264.8L738.5 272.4L738 272.4L738 272.4L737.5 272.4L737.5 265.8L737 265.8L737 265.8L736.5 265.8L736.5 265.8L736 265.8L736 271.7L735.5 271.7L735.5 272.1L735 272.1L735 272.1L734.5 272.1L734.5 272.1L734 272.1L734 254.5L733.5 254.5L733.5 254.5L733 254.5L733 267.5L732.5 267.5L732.5 267.5L732 267.5L732 266.0L731.5 266.0L731.5 266.0L731 266.0L731 266.2L730.5 266.2L730.5 266.2L730 266.2L730 266.2L729.5 266.2L729.5 266.2L729 266.2L729 265.5L728.5 265.5L728.5 265.5L728 265.5L728 265.7L727.5 265.7L727.5 265.7L727 265.7L727 265.4L726.5 265.4L726.5 270.4L726 270.4L726 270.4L725.5 270.4L725.5 270.4L725 270.4L725 269.7L724.5 269.7L724.5 267.6L724 267.6L724 267.6L723.5 267.6L723.5 265.0L723 265.0L723 265.0L722.5 265.0L722.5 265.0L722 265.0L722 269.4L721.5 269.4L721.5 269.4L721 269.4L721 269.4L720.5 269.4L720.5 265.8L720 265.8L720 265.8L719.5 265.8L719.5 265.8L719 265.8L719 265.1L718.5 265.1L718.5 265.0L718 265.0L718 265.0L717.5 265.0L717.5 272.1L717 272.1L717 269.8L716.5 269.8L716.5 269.8L716 269.8L716 270.8L715.5 270.8L715.5 270.8L715 270.8L715 270.8L714.5 270.8L714.5 266.4L714 266.4L714 266.4L713.5 266.4L713.5 266.6L713 266.6L713 239.3L712.5 239.3L712.5 239.3L712 239.3L712 239.3L711.5 239.3L711.5 239.3L711 239.3L711 239.3L710.5 239.3L710.5 239.3L710 239.3L710 257.8L709.5 257.8L709.5 267.9L709 267.9L709 267.9L708.5 267.9L708.5 267.9L708 267.9L708 270.3L707.5 270.3L707.5 270.3L707 270.3L707 268.8L706.5 268.8L706.5 268.8L706 268.8L706 268.8L705.5 268.8L705.5 257.8L705 257.8L705 256.8L704.5 256.8L704.5 270.5L704 270.5L704 269.6L703.5 269.6L703.5 269.6L703 269.6L703 269.6L702.5 269.6L702.5 265.2L702 265.2L702 270.8L701.5 270.8L701.5 270.8L701 270.8L701 257.6L700.5 257.6L700.5 257.6L700 257.6L700 266.8L699.5 266.8L699.5 266.8L699 266.8L699 266.8L698.5 266.8L698.5 257.5L698 257.5L698 257.5L697.5 257.5L697.5 257.9L697 257.9L697 257.9L696.5 257.9L696.5 257.9L696 257.9L696 260.8L695.5 260.8L695.5 260.8L695 260.8L695 260.8L694.5 260.8L694.5 268.7L694 268.7L694 268.7L693.5 268.7L693.5 268.7L693 268.7L693 259.5L692.5 259.5L692.5 259.5L692 259.5L692 259.5L691.5 259.5L691.5 268.0L691 268.0L691 257.8L690.5 257.8L690.5 257.8L690 257.8L690 272.0L689.5 272.0L689.5 267.1L689 267.1L689 267.1L688.5 267.1L688.5 267.1L688 267.1L688 267.7L687.5 267.7L687.5 267.7L687 267.7L687 267.7L686.5 267.7L686.5 261.2L686 261.2L686 262.9L685.5 262.9L685.5 262.9L685 262.9L685 269.8L684.5 269.8L684.5 270.7L684 270.7L684 267.1L683.5 267.1L683.5 267.1L683 267.1L683 267.1L682.5 267.1L682.5 271.4L682 271.4L682 271.4L681.5 271.4L681.5 267.3L681 267.3L681 267.3L680.5 267.3L680.5 262.0L680 262.0L680 262.0L679.5 262.0L679.5 261.6L679 261.6L679 261.6L678.5 261.6L678.5 258.9L678 258.9L678 245.0L677.5 245.0L677.5 245.0L677 245.0L677 245.0L676.5 245.0L676.5 245.0L676 245.0L676 261.1L675.5 261.1L675.5 261.5L675 261.5L675 261.5L674.5 261.5L674.5 261.1L674 261.1L674 261.1L673.5 261.1L673.5 261.1L673 261.1L673 266.4L672.5 266.4L672.5 259.3L672 259.3L672 266.5L671.5 266.5L671.5 266.5L671 266.5L671 266.5L670.5 266.5L670.5 258.2L670 258.2L670 258.2L669.5 258.2L669.5 258.3L669 258.3L669 258.3L668.5 258.3L668.5 260.8L668 260.8L668 260.8L667.5 260.8L667.5 261.8L667 261.8L667 261.8L666.5 261.8L666.5 261.8L666 261.8L666 269.9L665.5 269.9L665.5 269.9L665 269.9L665 262.2L664.5 262.2L664.5 262.2L664 262.2L664 262.2L663.5 262.2L663.5 259.1L663 259.1L663 259.1L662.5 259.1L662.5 259.1L662 259.1L662 270.2L661.5 270.2L661.5 266.3L661 266.3L661 266.3L660.5 266.3L660.5 266.0L660 266.0L660 266.0L659.5 266.0L659.5 264.9L659 264.9L659 264.9L658.5 264.9L658.5 264.9L658 264.9L658 261.0L657.5 261.0L657.5 261.0L657 261.0L657 258.6L656.5 258.6L656.5 269.4L656 269.4L656 269.4L655.5 269.4L655.5 269.4L655 269.4L655 260.3L654.5 260.3L654.5 260.3L654 260.3L654 261.6L653.5 261.6L653.5 261.6L653 261.6L653 269.3L652.5 269.3L652.5 269.3L652 269.3L652 260.3L651.5 260.3L651.5 260.3L651 260.3L651 260.8L650.5 260.8L650.5 260.8L650 260.8L650 260.8L649.5 260.8L649.5 259.0L649 259.0L649 259.0L648.5 259.0L648.5 259.0L648 259.0L648 260.4L647.5 260.4L647.5 260.4L647 260.4L647 260.4L646.5 260.4L646.5 260.2L646 260.2L646 260.2L645.5 260.2L645.5 272.9L645 272.9L645 261.9L644.5 261.9L644.5 261.9L644 261.9L644 266.4L643.5 266.4L643.5 266.4L643 266.4L643 258.5L642.5 258.5L642.5 258.5L642 258.5L642 258.5L641.5 258.5L641.5 240.2L641 240.2L641 240.2L640.5 240.2L640.5 240.2L640 240.2L640 240.2L639.5 240.2L639.5 269.3L639 269.3L639 269.3L638.5 269.3L638.5 267.4L638 267.4L638 267.4L637.5 267.4L637.5 259.5L637 259.5L637 262.5L636.5 262.5L636.5 262.5L636 262.5L636 262.5L635.5 262.5L635.5 262.6L635 262.6L635 262.6L634.5 262.6L634.5 262.6L634 262.6L634 262.6L633.5 262.6L633.5 262.6L633 262.6L633 262.6L632.5 262.6L632.5 269.6L632 269.6L632 269.6L631.5 269.6L631.5 260.9L631 260.9L631 260.9L630.5 260.9L630.5 270.9L630 270.9L630 270.9L629.5 270.9L629.5 258.0L629 258.0L629 258.0L628.5 258.0L628.5 267.3L628 267.3L628 267.3L627.5 267.3L627.5 267.3L627 267.3L627 257.7L626.5 257.7L626.5 260.6L626 260.6L626 260.6L625.5 260.6L625.5 269.9L625 269.9L625 269.9L624.5 269.9L624.5 269.3L624 269.3L624 269.3L623.5 269.3L623.5 260.1L623 260.1L623 260.1L622.5 260.1L622.5 260.1L622 260.1L622 259.4L621.5 259.4L621.5 259.4L621 259.4L621 259.4L620.5 259.4L620.5 257.6L620 257.6L620 257.6L619.5 257.6L619.5 258.4L619 258.4L619 257.5L618.5 257.5L618.5 257.5L618 257.5L618 268.6L617.5 268.6L617.5 268.6L617 268.6L617 268.6L616.5 268.6L616.5 267.9L616 267.9L616 271.5L615.5 271.5L615.5 257.5L615 257.5L615 257.5L614.5 257.5L614.5 257.5L614 257.5L614 259.3L613.5 259.3L613.5 259.3L613 259.3L613 261.2L612.5 261.2L612.5 261.2L612 261.2L612 265.6L611.5 265.6L611.5 266.9L611 266.9L611 258.3L610.5 258.3L610.5 257.4L610 257.4L610 257.8L609.5 257.8L609.5 257.4L609 257.4L609 257.4L608.5 257.4L608.5 257.8L608 257.8L608 261.8L607.5 261.8L607.5 261.8L607 261.8L607 260.7L606.5 260.7L606.5 260.7L606 260.7L606 258.3L605.5 258.3L605.5 258.3L605 258.3L605 271.5L604.5 271.5L604.5 271.5L604 271.5L604 257.8L603.5 257.8L603.5 257.8L603 257.8L603 257.8L602.5 257.8L602.5 260.5L602 260.5L602 260.5L601.5 260.5L601.5 261.0L601 261.0L601 261.0L600.5 261.0L600.5 257.9L600 257.9L600 257.9L599.5 257.9L599.5 269.7L599 269.7L599 269.7L598.5 269.7L598.5 269.7L598 269.7L598 270.1L597.5 270.1L597.5 270.1L597 270.1L597 270.1L596.5 270.1L596.5 269.7L596 269.7L596 269.7L595.5 269.7L595.5 259.7L595 259.7L595 259.7L594.5 259.7L594.5 259.7L594 259.7L594 263.1L593.5 263.1L593.5 263.1L593 263.1L593 263.1L592.5 263.1L592.5 261.7L592 261.7L592 261.7L591.5 261.7L591.5 259.4L591 259.4L591 259.4L590.5 259.4L590.5 263.5L590 263.5L590 263.5L589.5 263.5L589.5 263.5L589 263.5L589 258.9L588.5 258.9L588.5 268.3L588 268.3L588 259.1L587.5 259.1L587.5 259.1L587 259.1L587 259.1L586.5 259.1L586.5 263.1L586 263.1L586 268.7L585.5 268.7L585.5 268.7L585 268.7L585 270.7L584.5 270.7L584.5 270.7L584 270.7L584 266.2L583.5 266.2L583.5 266.2L583 266.2L583 266.2L582.5 266.2L582.5 266.2L582 266.2L582 258.7L581.5 258.7L581.5 258.7L581 258.7L581 268.3L580.5 268.3L580.5 262.4L580 262.4L580 262.4L579.5 262.4L579.5 260.8L579 260.8L579 260.8L578.5 260.8L578.5 258.4L578 258.4L578 258.4L577.5 258.4L577.5 259.5L577 259.5L577 259.5L576.5 259.5L576.5 269.9L576 269.9L576 269.9L575.5 269.9L575.5 269.9L575 269.9L575 262.8L574.5 262.8L574.5 259.7L574 259.7L574 259.7L573.5 259.7L573.5 259.7L573 259.7L573 259.8L572.5 259.8L572.5 259.8L572 259.8L572 258.4L571.5 258.4L571.5 247.4L571 247.4L571 247.4L570.5 247.4L570.5 260.0L570 260.0L570 260.0L569.5 260.0L569.5 260.9L569 260.9L569 260.9L568.5 260.9L568.5 265.8L568 265.8L568 265.8L567.5 265.8L567.5 260.1L567 260.1L567 260.1L566.5 260.1L566.5 260.1L566 260.1L566 257.7L565.5 257.7L565.5 257.8L565 257.8L565 257.8L564.5 257.8L564.5 258.9L564 258.9L564 258.9L563.5 258.9L563.5 259.5L563 259.5L563 259.5L562.5 259.5L562.5 258.2L562 258.2L562 258.2L561.5 258.2L561.5 257.3L561 257.3L561 257.3L560.5 257.3L560.5 257.3L560 257.3L560 257.3L559.5 257.3L559.5 270.7L559 270.7L559 270.7L558.5 270.7L558.5 259.8L558 259.8L558 259.8L557.5 259.8L557.5 257.4L557 257.4L557 257.4L556.5 257.4L556.5 257.4L556 257.4L556 258.7L555.5 258.7L555.5 257.5L555 257.5L555 257.6L554.5 257.6L554.5 262.0L554 262.0L554 262.0L553.5 262.0L553.5 258.2L553 258.2L553 258.3L552.5 258.3L552.5 258.3L552 258.3L552 261.5L551.5 261.5L551.5 261.5L551 261.5L551 257.4L550.5 257.4L550.5 257.4L550 257.4L550 257.5L549.5 257.5L549.5 266.2L549 266.2L549 266.2L548.5 266.2L548.5 266.2L548 266.2L548 268.9L547.5 268.9L547.5 268.9L547 268.9L547 268.6L546.5 268.6L546.5 268.6L546 268.6L546 258.7L545.5 258.7L545.5 258.7L545 258.7L545 258.7L544.5 258.7L544.5 270.3L544 270.3L544 270.3L543.5 270.3L543.5 270.3L543 270.3L543 260.4L542.5 260.4L542.5 260.4L542 260.4L542 260.4L541.5 260.4L541.5 259.8L541 259.8L541 259.8L540.5 259.8L540.5 259.8L540 259.8L540 258.7L539.5 258.7L539.5 258.7L539 258.7L539 258.7L538.5 258.7L538.5 270.1L538 270.1L538 270.1L537.5 270.1L537.5 259.2L537 259.2L537 259.2L536.5 259.2L536.5 270.2L536 270.2L536 270.0L535.5 270.0L535.5 270.0L535 270.0L535 263.4L534.5 263.4L534.5 263.4L534 263.4L534 266.4L533.5 266.4L533.5 266.5L533 266.5L533 263.5L532.5 263.5L532.5 269.8L532 269.8L532 269.8L531.5 269.8L531.5 269.8L531 269.8L531 270.1L530.5 270.1L530.5 270.1L530 270.1L530 261.8L529.5 261.8L529.5 267.7L529 267.7L529 260.7L528.5 260.7L528.5 260.8L528 260.8L528 260.8L527.5 260.8L527.5 263.2L527 263.2L527 263.3L526.5 263.3L526.5 270.7L526 270.7L526 270.7L525.5 270.7L525.5 261.6L525 261.6L525 261.6L524.5 261.6L524.5 270.3L524 270.3L524 269.6L523.5 269.6L523.5 269.6L523 269.6L523 269.6L522.5 269.6L522.5 269.5L522 269.5L522 269.6L521.5 269.6L521.5 269.6L521 269.6L521 266.6L520.5 266.6L520.5 266.6L520 266.6L520 260.9L519.5 260.9L519.5 260.9L519 260.9L519 270.3L518.5 270.3L518.5 270.3L518 270.3L518 259.2L517.5 259.2L517.5 259.2L517 259.2L517 267.1L516.5 267.1L516.5 267.1L516 267.1L516 267.1L515.5 267.1L515.5 259.2L515 259.2L515 259.2L514.5 259.2L514.5 259.9L514 259.9L514 259.9L513.5 259.9L513.5 258.8L513 258.8L513 258.8L512.5 258.8L512.5 267.9L512 267.9L512 268.6L511.5 268.6L511.5 268.6L511 268.6L511 268.6L510.5 268.6L510.5 262.4L510 262.4L510 262.4L509.5 262.4L509.5 262.4L509 262.4L509 263.0L508.5 263.0L508.5 263.0L508 263.0L508 263.0L507.5 263.0L507.5 271.1L507 271.1L507 270.2L506.5 270.2L506.5 270.2L506 270.2L506 260.5L505.5 260.5L505.5 260.5L505 260.5L505 268.5L504.5 268.5L504.5 268.5L504 268.5L504 269.8L503.5 269.8L503.5 269.8L503 269.8L503 271.5L502.5 271.5L502.5 271.5L502 271.5L502 262.2L501.5 262.2L501.5 262.2L501 262.2L501 262.2L500.5 262.2L500.5 272.3L500 272.3L500 272.3L499.5 272.3L499.5 262.4L499 262.4L499 262.4L498.5 262.4L498.5 261.1L498 261.1L498 261.1L497.5 261.1L497.5 261.2L497 261.2L497 264.0L496.5 264.0L496.5 264.0L496 264.0L496 261.1L495.5 261.1L495.5 261.1L495 261.1L495 261.1L494.5 261.1L494.5 261.1L494 261.1L494 260.5L493.5 260.5L493.5 260.5L493 260.5L493 260.5L492.5 260.5L492.5 264.6L492 264.6L492 260.6L491.5 260.6L491.5 260.6L491 260.6L491 260.7L490.5 260.7L490.5 267.3L490 267.3L490 267.3L489.5 267.3L489.5 260.8L489 260.8L489 260.9L488.5 260.9L488.5 260.9L488 260.9L488 260.9L487.5 260.9L487.5 260.9L487 260.9L487 260.9L486.5 260.9L486.5 272.5L486 272.5L486 272.5L485.5 272.5L485.5 264.9L485 264.9L485 264.9L484.5 264.9L484.5 262.7L484 262.7L484 262.7L483.5 262.7L483.5 263.4L483 263.4L483 263.4L482.5 263.4L482.5 268.3L482 268.3L482 264.9L481.5 264.9L481.5 261.2L481 261.2L481 261.2L480.5 261.2L480.5 269.2L480 269.2L480 269.3L479.5 269.3L479.5 263.4L479 263.4L479 261.9L478.5 261.9L478.5 261.9L478 261.9L478 261.9L477.5 261.9L477.5 261.4L477 261.4L477 268.3L476.5 268.3L476.5 263.3L476 263.3L476 268.9L475.5 268.9L475.5 271.7L475 271.7L475 271.7L474.5 271.7L474.5 271.3L474 271.3L474 271.3L473.5 271.3L473.5 262.9L473 262.9L473 262.9L472.5 262.9L472.5 270.7L472 270.7L472 270.7L471.5 270.7L471.5 270.7L471 270.7L471 271.3L470.5 271.3L470.5 271.3L470 271.3L470 271.3L469.5 271.3L469.5 270.8L469 270.8L469 270.8L468.5 270.8L468.5 270.8L468 270.8L468 269.5L467.5 269.5L467.5 269.5L467 269.5L467 268.2L466.5 268.2L466.5 267.0L466 267.0L466 267.0L465.5 267.0L465.5 262.8L465 262.8L465 264.4L464.5 264.4L464.5 264.4L464 264.4L464 270.3L463.5 270.3L463.5 266.9L463 266.9L463 267.0L462.5 267.0L462.5 267.0L462 267.0L462 266.9L461.5 266.9L461.5 267.0L461 267.0L461 264.2L460.5 264.2L460.5 260.8L460 260.8L460 260.8L459.5 260.8L459.5 270.6L459 270.6L459 270.6L458.5 270.6L458.5 262.4L458 262.4L458 262.4L457.5 262.4L457.5 262.4L457 262.4L457 264.0L456.5 264.0L456.5 263.3L456 263.3L456 263.3L455.5 263.3L455.5 263.3L455 263.3L455 271.5L454.5 271.5L454.5 271.5L454 271.5L454 271.5L453.5 271.5L453.5 263.2L453 263.2L453 263.3L452.5 263.3L452.5 268.6L452 268.6L452 268.6L451.5 268.6L451.5 268.6L451 268.6L451 264.6L450.5 264.6L450.5 264.6L450 264.6L450 264.6L449.5 264.6L449.5 268.5L449 268.5L449 268.5L448.5 268.5L448.5 262.3L448 262.3L448 262.3L447.5 262.3L447.5 268.6L447 268.6L447 268.7L446.5 268.7L446.5 272.6L446 272.6L446 271.2L445.5 271.2L445.5 271.2L445 271.2L445 271.2L444.5 271.2L444.5 270.2L444 270.2L444 262.5L443.5 262.5L443.5 262.5L443 262.5L443 264.9L442.5 264.9L442.5 265.0L442 265.0L442 265.1L441.5 265.1L441.5 263.1L441 263.1L441 263.1L440.5 263.1L440.5 262.0L440 262.0L440 262.0L439.5 262.0L439.5 268.3L439 268.3L439 268.3L438.5 268.3L438.5 262.3L438 262.3L438 262.4L437.5 262.4L437.5 262.2L437 262.2L437 264.1L436.5 264.1L436.5 264.2L436 264.2L436 264.2L435.5 264.2L435.5 270.1L435 270.1L435 270.2L434.5 270.2L434.5 267.8L434 267.8L434 267.8L433.5 267.8L433.5 268.9L433 268.9L433 271.7L432.5 271.7L432.5 271.7L432 271.7L432 263.1L431.5 263.1L431.5 263.1L431 263.1L431 263.2L430.5 263.2L430.5 262.1L430 262.1L430 269.9L429.5 269.9L429.5 269.9L429 269.9L429 269.9L428.5 269.9L428.5 271.3L428 271.3L428 271.3L427.5 271.3L427.5 265.4L427 265.4L427 265.4L426.5 265.4L426.5 271.8L426 271.8L426 271.8L425.5 271.8L425.5 265.0L425 265.0L425 265.0L424.5 265.0L424.5 265.0L424 265.0L424 272.8L423.5 272.8L423.5 272.8L423 272.8L423 270.6L422.5 270.6L422.5 270.6L422 270.6L422 270.0L421.5 270.0L421.5 270.0L421 270.0L421 264.4L420.5 264.4L420.5 264.4L420 264.4L420 264.4L419.5 264.4L419.5 264.9L419 264.9L419 265.0L418.5 265.0L418.5 263.8L418 263.8L418 264.5L417.5 264.5L417.5 264.5L417 264.5L417 264.5L416.5 264.5L416.5 263.9L416 263.9L416 263.9L415.5 263.9L415.5 265.6L415 265.6L415 265.6L414.5 265.6L414.5 265.6L414 265.6L414 268.9L413.5 268.9L413.5 268.9L413 268.9L413 270.2L412.5 270.2L412.5 269.9L412 269.9L412 269.9L411.5 269.9L411.5 269.1L411 269.1L411 269.1L410.5 269.1L410.5 269.1L410 269.1L410 263.1L409.5 263.1L409.5 263.1L409 263.1L409 272.4L408.5 272.4L408.5 270.9L408 270.9L408 271.6L407.5 271.6L407.5 271.6L407 271.6L407 263.9L406.5 263.9L406.5 263.9L406 263.9L406 263.9L405.5 263.9L405.5 270.4L405 270.4L405 264.8L404.5 264.8L404.5 264.8L404 264.8L404 264.5L403.5 264.5L403.5 264.5L403 264.5L403 268.5L402.5 268.5L402.5 268.6L402 268.6L402 268.6L401.5 268.6L401.5 263.1L401 263.1L401 263.2L400.5 263.2L400.5 264.1L400 264.1L400 264.1L399.5 264.1L399.5 269.6L399 269.6L399 269.6L398.5 269.6L398.5 271.2L398 271.2L398 271.2L397.5 271.2L397.5 271.2L397 271.2L397 269.3L396.5 269.3L396.5 269.3L396 269.3L396 263.4L395.5 263.4L395.5 263.4L395 263.4L395 270.7L394.5 270.7L394.5 265.1L394 265.1L394 265.1L393.5 265.1L393.5 269.3L393 269.3L393 269.3L392.5 269.3L392.5 264.1L392 264.1L392 264.1L391.5 264.1L391.5 266.4L391 266.4L391 266.5L390.5 266.5L390.5 266.5L390 266.5L390 271.8L389.5 271.8L389.5 271.8L389 271.8L389 271.8L388.5 271.8L388.5 271.8L388 271.8L388 271.8L387.5 271.8L387.5 265.4L387 265.4L387 265.4L386.5 265.4L386.5 265.4L386 265.4L386 265.9L385.5 265.9L385.5 265.9L385 265.9L385 266.1L384.5 266.1L384.5 266.1L384 266.1L384 266.1L383.5 266.1L383.5 265.2L383 265.2L383 265.2L382.5 265.2L382.5 265.2L382 265.2L382 264.8L381.5 264.8L381.5 264.8L381 264.8L381 265.4L380.5 265.4L380.5 265.4L380 265.4L380 265.1L379.5 265.1L379.5 265.1L379 265.1L379 264.7L378.5 264.7L378.5 264.7L378 264.7L378 266.9L377.5 266.9L377.5 266.9L377 266.9L377 267.2L376.5 267.2L376.5 267.2L376 267.2L376 266.5L375.5 266.5L375.5 266.5L375 266.5L375 264.5L374.5 264.5L374.5 269.5L374 269.5L374 269.5L373.5 269.5L373.5 269.6L373 269.6L373 269.6L372.5 269.6L372.5 270.5L372 270.5L372 264.7L371.5 264.7L371.5 264.3L371 264.3L371 264.3L370.5 264.3L370.5 264.3L370 264.3L370 269.0L369.5 269.0L369.5 269.0L369 269.0L369 264.5L368.5 264.5L368.5 270.2L368 270.2L368 270.2L367.5 270.2L367.5 270.8L367 270.8L367 270.8L366.5 270.8L366.5 266.6L366 266.6L366 266.6L365.5 266.6L365.5 266.6L365 266.6L365 272.1L364.5 272.1L364.5 272.1L364 272.1L364 267.3L363.5 267.3L363.5 267.3L363 267.3L363 267.3L362.5 267.3L362.5 265.4L362 265.4L362 265.4L361.5 265.4L361.5 270.3L361 270.3L361 270.3L360.5 270.3L360.5 270.3L360 270.3L360 271.1L359.5 271.1L359.5 266.5L359 266.5L359 267.2L358.5 267.2L358.5 271.4L358 271.4L358 270.7L357.5 270.7L357.5 269.8L357 269.8L357 269.8L356.5 269.8L356.5 271.9L356 271.9L356 271.9L355.5 271.9L355.5 271.9L355 271.9L355 266.5L354.5 266.5L354.5 266.5L354 266.5L354 266.5L353.5 266.5L353.5 269.1L353 269.1L353 265.9L352.5 265.9L352.5 266.0L352 266.0L352 266.3L351.5 266.3L351.5 266.4L351 266.4L351 265.6L350.5 265.6L350.5 265.6L350 265.6L350 267.3L349.5 267.3L349.5 267.3L349 267.3L349 270.5L348.5 270.5L348.5 270.5L348 270.5L348 270.5L347.5 270.5L347.5 266.9L347 266.9L347 266.9L346.5 266.9L346.5 270.7L346 270.7L346 270.7L345.5 270.7L345.5 270.7L345 270.7L345 269.9L344.5 269.9L344.5 269.9L344 269.9L344 265.8L343.5 265.8L343.5 265.8L343 265.8L343 266.0L342.5 266.0L342.5 266.0L342 266.0L342 266.1L341.5 266.1L341.5 267.5L341 267.5L341 267.5L340.5 267.5L340.5 265.7L340 265.7L340 265.7L339.5 265.7L339.5 265.7L339 265.7L339 266.7L338.5 266.7L338.5 266.7L338 266.7L338 272.8L337.5 272.8L337.5 271.3L337 271.3L337 271.3L336.5 271.3L336.5 267.2L336 267.2L336 267.2L335.5 267.2L335.5 267.2L335 267.2L335 265.8L334.5 265.8L334.5 272.0L334 272.0L334 272.0L333.5 272.0L333.5 266.8L333 266.8L333 269.9L332.5 269.9L332.5 269.9L332 269.9L332 266.4L331.5 266.4L331.5 266.3L331 266.3L331 266.3L330.5 266.3L330.5 266.3L330 266.3L330 271.7L329.5 271.7L329.5 271.7L329 271.7L329 271.7L328.5 271.7L328.5 270.7L328 270.7L328 270.7L327.5 270.7L327.5 267.5L327 267.5L327 267.5L326.5 267.5L326.5 266.7L326 266.7L326 266.7L325.5 266.7L325.5 266.8L325 266.8L325 268.7L324.5 268.7L324.5 268.7L324 268.7L324 267.1L323.5 267.1L323.5 267.1L323 267.1L323 267.2L322.5 267.2L322.5 270.2L322 270.2L322 270.2L321.5 270.2L321.5 270.2L321 270.2L321 267.2L320.5 267.2L320.5 267.2L320 267.2L320 267.2L319.5 267.2L319.5 268.4L319 268.4L319 267.4L318.5 267.4L318.5 267.4L318 267.4L318 266.8L317.5 266.8L317.5 266.8L317 266.8L317 266.9L316.5 266.9L316.5 271.1L316 271.1L316 271.1L315.5 271.1L315.5 271.5L315 271.5L315 268.2L314.5 268.2L314.5 268.2L314 268.2L314 268.3L313.5 268.3L313.5 272.5L313 272.5L313 272.5L312.5 272.5L312.5 268.2L312 268.2L312 268.2L311.5 268.2L311.5 268.1L311 268.1L311 268.2L310.5 268.2L310.5 268.2L310 268.2L310 266.6L309.5 266.6L309.5 271.2L309 271.2L309 271.2L308.5 271.2L308.5 271.3L308 271.3L308 270.4L307.5 270.4L307.5 270.4L307 270.4L307 270.4L306.5 270.4L306.5 266.5L306 266.5L306 266.5L305.5 266.5L305.5 266.5L305 266.5L305 270.6L304.5 270.6L304.5 271.6L304 271.6L304 271.6L303.5 271.6L303.5 271.6L303 271.6L303 268.6L302.5 268.6L302.5 268.6L302 268.6L302 272.4L301.5 272.4L301.5 272.2L301 272.2L301 272.2L300.5 272.2L300.5 266.8L300 266.8L300 266.8L299.5 266.8L299.5 267.8L299 267.8L299 267.8L298.5 267.8L298.5 270.7L298 270.7L298 270.7L297.5 270.7L297.5 268.8L297 268.8L297 268.8L296.5 268.8L296.5 268.8L296 268.8L296 266.9L295.5 266.9L295.5 266.9L295 266.9L295 271.7L294.5 271.7L294.5 271.7L294 271.7L294 271.7L293.5 271.7L293.5 268.1L293 268.1L293 268.1L292.5 268.1L292.5 267.5L292 267.5L292 267.1L291.5 267.1L291.5 263.9L291 263.9L291 259.8L290.5 259.8L290.5 255.6L290 255.6L290 251.5L289.5 251.5L289.5 247.3L289 247.3L289 243.2L288.5 243.2L288.5 239.0L288 239.0L288 234.8L287.5 234.8L287.5 230.7L287 230.7L287 227.4L286.5 227.4L286.5 231.9L286 231.9L286 236.3L285.5 236.3L285.5 240.8L285 240.8L285 245.3L284.5 245.3L284.5 249.8L284 249.8L284 254.3L283.5 254.3L283.5 253.6L283 253.6L283 252.8L282.5 252.8L282.5 266.5L282 266.5L282 266.4L281.5 266.4L281.5 266.4L281 266.4L281 267.1L280.5 267.1L280.5 267.1L280 267.1L280 256.4L279.5 256.4L279.5 256.4L279 256.4L279 257.6L278.5 257.6L278.5 257.6L278 257.6L278 251.5L277.5 251.5L277.5 251.6L277 251.6L277 252.3L276.5 252.3L276.5 250.9L276 250.9L276 250.9L275.5 250.9L275.5 262.4L275 262.4L275 262.4L274.5 262.4L274.5 250.7L274 250.7L274 250.7L273.5 250.7L273.5 266.4L273 266.4L273 266.4L272.5 266.4L272.5 251.0L272 251.0L272 251.1L271.5 251.1L271.5 251.4L271 251.4L271 251.4L270.5 251.4L270.5 252.2L270 252.2L270 252.2L269.5 252.2L269.5 252.3L269 252.3L269 254.7L268.5 254.7L268.5 254.7L268 254.7L268 254.1L267.5 254.1L267.5 254.1L267 254.1L267 253.7L266.5 253.7L266.5 253.7L266 253.7L266 255.5L265.5 255.5L265.5 255.5L265 255.5L265 253.6L264.5 253.6L264.5 253.7L264 253.7L264 266.8L263.5 266.8L263.5 266.8L263 266.8L263 253.7L262.5 253.7L262.5 266.6L262 266.6L262 266.7L261.5 266.7L261.5 257.9L261 257.9L261 254.3L260.5 254.3L260.5 257.5L260 257.5L260 257.5L259.5 257.5L259.5 268.7L259 268.7L259 268.7L258.5 268.7L258.5 268.7L258 268.7L258 256.7L257.5 256.7L257.5 256.7L257 256.7L257 256.7L256.5 256.7L256.5 256.3L256 256.3L256 256.3L255.5 256.3L255.5 256.4L255 256.4L255 256.2L254.5 256.2L254.5 256.3L254 256.3L254 256.3L253.5 256.3L253.5 254.7L253 254.7L253 257.9L252.5 257.9L252.5 265.8L252 265.8L252 265.8L251.5 265.8L251.5 265.8L251 265.8L251 267.1L250.5 267.1L250.5 267.1L250 267.1L250 272.2L249.5 272.2L249.5 272.2L249 272.2L249 272.2L248.5 272.2L248.5 265.4L248 265.4L248 265.4L247.5 265.4L247.5 265.4L247 265.4L247 256.9L246.5 256.9L246.5 256.9L246 256.9L246 269.5L245.5 269.5L245.5 255.6L245 255.6L245 255.4L244.5 255.4L244.5 255.4L244 255.4L244 255.6L243.5 255.6L243.5 255.6L243 255.6L243 264.8L242.5 264.8L242.5 264.8L242 264.8L242 256.5L241.5 256.5L241.5 270.1L241 270.1L241 260.6L240.5 260.6L240.5 260.6L240 260.6L240 271.8L239.5 271.8L239.5 271.8L239 271.8L239 269.3L238.5 269.3L238.5 257.6L238 257.6L238 257.6L237.5 257.6L237.5 272.3L237 272.3L237 256.4L236.5 256.4L236.5 256.4L236 256.4L236 267.8L235.5 267.8L235.5 272.4L235 272.4L235 272.4L234.5 272.4L234.5 272.4L234 272.4L234 265.3L233.5 265.3L233.5 265.3L233 265.3L233 265.4L232.5 265.4L232.5 268.4L232 268.4L232 268.4L231.5 268.4L231.5 261.0L231 261.0L231 261.0L230.5 261.0L230.5 261.0L230 261.0L230 258.7L229.5 258.7L229.5 255.7L229 255.7L229 255.8L228.5 255.8L228.5 257.7L228 257.7L228 257.7L227.5 257.7L227.5 257.7L227 257.7L227 257.7L226.5 257.7L226.5 257.7L226 257.7L226 260.3L225.5 260.3L225.5 266.8L225 266.8L225 256.1L224.5 256.1L224.5 256.1L224 256.1L224 256.6L223.5 256.6L223.5 256.6L223 256.6L223 256.2L222.5 256.2L222.5 256.3L222 256.3L222 256.3L221.5 256.3L221.5 268.8L221 268.8L221 268.8L220.5 268.8L220.5 255.5L220 255.5L220 255.5L219.5 255.5L219.5 268.0L219 268.0L219 268.0L218.5 268.0L218.5 254.9L218 254.9L218 256.5L217.5 256.5L217.5 257.7L217 257.7L217 257.1L216.5 257.1L216.5 260.1L216 260.1L216 260.5L215.5 260.5L215.5 260.5L215 260.5L215 267.0L214.5 267.0L214.5 267.0L214 267.0L214 257.3L213.5 257.3L213.5 257.4L213 257.4L213 257.4L212.5 257.4L212.5 260.0L212 260.0L212 260.0L211.5 260.0L211.5 269.8L211 269.8L211 269.8L210.5 269.8L210.5 259.4L210 259.4L210 259.4L209.5 259.4L209.5 259.5L209 259.5L209 270.5L208.5 270.5L208.5 267.3L208 267.3L208 267.3L207.5 267.3L207.5 261.2L207 261.2L207 255.3L206.5 255.3L206.5 258.5L206 258.5L206 258.5L205.5 258.5L205.5 258.5L205 258.5L205 255.3L204.5 255.3L204.5 255.3L204 255.3L204 259.5L203.5 259.5L203.5 266.0L203 266.0L203 261.2L202.5 261.2L202.5 261.2L202 261.2L202 261.2L201.5 261.2L201.5 250.4L201 250.4L201 250.4L200.5 250.4L200.5 262.8L200 262.8L200 260.0L199.5 260.0L199.5 261.2L199 261.2L199 261.2L198.5 261.2L198.5 245.9L198 245.9L198 245.9L197.5 245.9L197.5 245.9L197 245.9L197 248.2L196.5 248.2L196.5 246.7L196 246.7L196 246.7L195.5 246.7L195.5 264.8L195 264.8L195 264.8L194.5 264.8L194.5 264.8L194 264.8L194 253.4L193.5 253.4L193.5 253.4L193 253.4L193 246.6L192.5 246.6L192.5 245.9L192 245.9L192 245.9L191.5 245.9L191.5 245.9L191 245.9L191 246.6L190.5 246.6L190.5 246.6L190 246.6L190 246.6L189.5 246.6L189.5 246.8L189 246.8L189 246.8L188.5 246.8L188.5 267.8L188 267.8L188 267.8L187.5 267.8L187.5 252.6L187 252.6L187 252.6L186.5 252.6L186.5 252.6L186 252.6L186 251.2L185.5 251.2L185.5 246.0L185 246.0L185 246.0L184.5 246.0L184.5 253.2L184 253.2L184 253.2L183.5 253.2L183.5 253.2L183 253.2L183 248.2L182.5 248.2L182.5 254.1L182 254.1L182 262.5L181.5 262.5L181.5 262.5L181 262.5L181 249.9L180.5 249.9L180.5 249.9L180 249.9L180 250.0L179.5 250.0L179.5 250.0L179 250.0L179 247.1L178.5 247.1L178.5 247.1L178 247.1L178 247.1L177.5 247.1L177.5 254.2L177 254.2L177 254.2L176.5 254.2L176.5 263.7L176 263.7L176 263.7L175.5 263.7L175.5 254.0L175 254.0L175 254.0L174.5 254.0L174.5 263.2L174 263.2L174 246.9L173.5 246.9L173.5 269.3L173 269.3L173 269.3L172.5 269.3L172.5 270.5L172 270.5L172 270.5L171.5 270.5L171.5 270.5L171 270.5L171 266.8L170.5 266.8L170.5 266.8L170 266.8L170 266.8L169.5 266.8L169.5 270.4L169 270.4L169 270.4L168.5 270.4L168.5 270.4L168 270.4L168 265.8L167.5 265.8L167.5 265.8L167 265.8L167 270.6L166.5 270.6L166.5 270.6L166 270.6L166 249.8L165.5 249.8L165.5 249.8L165 249.8L165 249.8L164.5 249.8L164.5 268.3L164 268.3L164 268.3L163.5 268.3L163.5 259.9L163 259.9L163 259.9L162.5 259.9L162.5 253.0L162 253.0L162 246.5L161.5 246.5L161.5 246.5L161 246.5L161 254.2L160.5 254.2L160.5 254.2L160 254.2L160 254.2L159.5 254.2L159.5 247.6L159 247.6L159 247.6L158.5 247.6L158.5 247.6L158 247.6L158 267.6L157.5 267.6L157.5 267.6L157 267.6L157 259.5L156.5 259.5L156.5 259.5L156 259.5L156 259.5L155.5 259.5L155.5 269.1L155 269.1L155 269.1L154.5 269.1L154.5 269.1L154 269.1L154 246.3L153.5 246.3L153.5 246.3L153 246.3L153 253.3L152.5 253.3L152.5 253.4L152 253.4L152 253.4L151.5 253.4L151.5 253.4L151 253.4L151 262.2L150.5 262.2L150.5 262.2L150 262.2L150 262.2L149.5 262.2L149.5 253.9L149 253.9L149 253.9L148.5 253.9L148.5 263.5L148 263.5L148 263.5L147.5 263.5L147.5 262.1L147 262.1L147 262.1L146.5 262.1L146.5 252.2L146 252.2L146 252.2L145.5 252.2L145.5 251.9L145 251.9L145 251.9L144.5 251.9L144.5 251.9L144 251.9L144 270.6L143.5 270.6L143.5 249.6L143 249.6L143 249.6L142.5 249.6L142.5 249.6L142 249.6L142 248.6L141.5 248.6L141.5 248.6L141 248.6Z"/><path d="M141 332L141 290.9L141.5 290.9L141.5 290.9L142 290.9L142 309.5L142.5 309.5L142.5 309.5L143 309.5L143 305.1L143.5 305.1L143.5 307.0L144 307.0L144 307.0L144.5 307.0L144.5 293.6L145 293.6L145 293.6L145.5 293.6L145.5 309.9L146 309.9L146 309.9L146.5 309.9L146.5 309.9L147 309.9L147 304.9L147.5 304.9L147.5 304.9L148 304.9L148 303.6L148.5 303.6L148.5 303.6L149 303.6L149 303.6L149.5 303.6L149.5 306.8L150 306.8L150 306.8L150.5 306.8L150.5 302.5L151 302.5L151 302.5L151.5 302.5L151.5 305.4L152 305.4L152 305.4L152.5 305.4L152.5 285.8L153 285.8L153 285.8L153.5 285.8L153.5 309.8L154 309.8L154 309.8L154.5 309.8L154.5 309.8L155 309.8L155 294.5L155.5 294.5L155.5 294.5L156 294.5L156 292.6L156.5 292.6L156.5 289.1L157 289.1L157 289.1L157.5 289.1L157.5 289.1L158 289.1L158 307.0L158.5 307.0L158.5 307.0L159 307.0L159 307.0L159.5 307.0L159.5 287.5L160 287.5L160 308.8L160.5 308.8L160.5 308.8L161 308.8L161 294.1L161.5 294.1L161.5 294.1L162 294.1L162 294.1L162.5 294.1L162.5 308.2L163 308.2L163 308.2L163.5 308.2L163.5 308.2L164 308.2L164 311.0L164.5 311.0L164.5 311.0L165 311.0L165 311.0L165.5 311.0L165.5 307.4L166 307.4L166 307.4L166.5 307.4L166.5 307.4L167 307.4L167 309.7L167.5 309.7L167.5 294.9L168 294.9L168 310.2L168.5 310.2L168.5 310.2L169 310.2L169 307.2L169.5 307.2L169.5 307.2L170 307.2L170 312.3L170.5 312.3L170.5 306.6L171 306.6L171 306.6L171.5 306.6L171.5 306.6L172 306.6L172 312.3L172.5 312.3L172.5 307.7L173 307.7L173 307.7L173.5 307.7L173.5 298.6L174 298.6L174 298.6L174.5 298.6L174.5 310.9L175 310.9L175 310.9L175.5 310.9L175.5 309.6L176 309.6L176 309.6L176.5 309.6L176.5 303.2L177 303.2L177 303.2L177.5 303.2L177.5 288.7L178 288.7L178 288.7L178.5 288.7L178.5 306.2L179 306.2L179 306.2L179.5 306.2L179.5 287.8L180 287.8L180 287.8L180.5 287.8L180.5 309.3L181 309.3L181 309.3L181.5 309.3L181.5 309.4L182 309.4L182 301.8L182.5 301.8L182.5 301.9L183 301.9L183 308.7L183.5 308.7L183.5 308.7L184 308.7L184 308.7L184.5 308.7L184.5 305.7L185 305.7L185 305.7L185.5 305.7L185.5 305.7L186 305.7L186 309.9L186.5 309.9L186.5 309.9L187 309.9L187 305.0L187.5 305.0L187.5 305.0L188 305.0L188 287.0L188.5 287.0L188.5 287.0L189 287.0L189 287.0L189.5 287.0L189.5 306.8L190 306.8L190 306.8L190.5 306.8L190.5 306.8L191 306.8L191 306.1L191.5 306.1L191.5 306.1L192 306.1L192 296.9L192.5 296.9L192.5 296.9L193 296.9L193 296.9L193.5 296.9L193.5 291.6L194 291.6L194 291.6L194.5 291.6L194.5 291.6L195 291.6L195 289.6L195.5 289.6L195.5 309.4L196 309.4L196 295.4L196.5 295.4L196.5 307.8L197 307.8L197 307.8L197.5 307.8L197.5 307.0L198 307.0L198 307.0L198.5 307.0L198.5 309.0L199 309.0L199 305.0L199.5 305.0L199.5 305.0L200 305.0L200 292.2L200.5 292.2L200.5 291.4L201 291.4L201 291.4L201.5 291.4L201.5 310.0L202 310.0L202 310.0L202.5 310.0L202.5 290.1L203 290.1L203 290.1L203.5 290.1L203.5 296.5L204 296.5L204 309.5L204.5 309.5L204.5 309.5L205 309.5L205 303.2L205.5 303.2L205.5 308.0L206 308.0L206 308.0L206.5 308.0L206.5 303.9L207 303.9L207 303.7L207.5 303.7L207.5 286.2L208 286.2L208 286.2L208.5 286.2L208.5 298.4L209 298.4L209 298.4L209.5 298.4L209.5 286.6L210 286.6L210 286.6L210.5 286.6L210.5 286.6L211 286.6L211 299.7L211.5 299.7L211.5 299.7L212 299.7L212 299.7L212.5 299.7L212.5 286.6L213 286.6L213 286.6L213.5 286.6L213.5 296.9L214 296.9L214 285.6L214.5 285.6L214.5 285.6L215 285.6L215 299.5L215.5 299.5L215.5 299.5L216 299.5L216 297.0L216.5 297.0L216.5 297.0L217 297.0L217 290.6L217.5 290.6L217.5 290.6L218 290.6L218 295.1L218.5 295.1L218.5 295.1L219 295.1L219 295.1L219.5 295.1L219.5 300.1L220 300.1L220 300.2L220.5 300.2L220.5 290.1L221 290.1L221 290.1L221.5 290.1L221.5 296.7L222 296.7L222 296.7L222.5 296.7L222.5 297.0L223 297.0L223 297.1L223.5 297.1L223.5 297.1L224 297.1L224 286.7L224.5 286.7L224.5 286.8L225 286.8L225 286.8L225.5 286.8L225.5 297.7L226 297.7L226 297.7L226.5 297.7L226.5 293.1L227 293.1L227 293.2L227.5 293.2L227.5 300.7L228 300.7L228 300.7L228.5 300.7L228.5 297.7L229 297.7L229 297.7L229.5 297.7L229.5 286.2L230 286.2L230 286.2L230.5 286.2L230.5 296.1L231 296.1L231 296.1L231.5 296.1L231.5 300.4L232 300.4L232 300.5L232.5 300.5L232.5 300.5L233 300.5L233 288.5L233.5 288.5L233.5 288.5L234 288.5L234 288.6L234.5 288.6L234.5 301.5L235 301.5L235 301.5L235.5 301.5L235.5 301.5L236 301.5L236 299.2L236.5 299.2L236.5 291.9L237 291.9L237 291.9L237.5 291.9L237.5 289.8L238 289.8L238 289.8L238.5 289.8L238.5 292.5L239 292.5L239 292.5L239.5 292.5L239.5 289.2L240 289.2L240 289.2L240.5 289.2L240.5 289.2L241 289.2L241 297.1L241.5 297.1L241.5 297.2L242 297.2L242 299.2L242.5 299.2L242.5 299.3L243 299.3L243 303.2L243.5 303.2L243.5 303.2L244 303.2L244 298.7L244.5 298.7L244.5 298.7L245 298.7L245 298.8L245.5 298.8L245.5 300.2L246 300.2L246 293.8L246.5 293.8L246.5 293.8L247 293.8L247 298.6L247.5 298.6L247.5 298.6L248 298.6L248 298.6L248.5 298.6L248.5 300.8L249 300.8L249 300.8L249.5 300.8L249.5 302.7L250 302.7L250 287.4L250.5 287.4L250.5 287.4L251 287.4L251 285.9L251.5 285.9L251.5 302.4L252 302.4L252 302.5L252.5 302.5L252.5 302.5L253 302.5L253 288.9L253.5 288.9L253.5 288.9L254 288.9L254 288.9L254.5 288.9L254.5 302.8L255 302.8L255 302.9L255.5 302.9L255.5 297.5L256 297.5L256 297.5L256.5 297.5L256.5 297.5L257 297.5L257 287.8L257.5 287.8L257.5 287.8L258 287.8L258 287.0L258.5 287.0L258.5 287.0L259 287.0L259 293.6L259.5 293.6L259.5 293.6L260 293.6L260 301.9L260.5 301.9L260.5 301.9L261 301.9L261 292.1L261.5 292.1L261.5 298.3L262 298.3L262 303.7L262.5 303.7L262.5 303.8L263 303.8L263 289.2L263.5 289.2L263.5 289.2L264 289.2L264 289.3L264.5 289.3L264.5 301.5L265 301.5L265 303.7L265.5 303.7L265.5 304.2L266 304.2L266 293.7L266.5 293.7L266.5 293.7L267 293.7L267 299.9L267.5 299.9L267.5 299.9L268 299.9L268 299.9L268.5 299.9L268.5 302.9L269 302.9L269 302.6L269.5 302.6L269.5 302.6L270 302.6L270 290.9L270.5 290.9L270.5 290.9L271 290.9L271 290.9L271.5 290.9L271.5 305.5L272 305.5L272 305.6L272.5 305.6L272.5 305.6L273 305.6L273 290.3L273.5 290.3L273.5 287.7L274 287.7L274 287.7L274.5 287.7L274.5 305.9L275 305.9L275 306.0L275.5 306.0L275.5 302.4L276 302.4L276 302.4L276.5 302.4L276.5 302.9L277 302.9L277 302.9L277.5 302.9L277.5 289.7L278 289.7L278 289.7L278.5 289.7L278.5 289.7L279 289.7L279 288.4L279.5 288.4L279.5 293.4L280 293.4L280 293.4L280.5 293.4L280.5 293.4L281 293.4L281 301.0L281.5 301.0L281.5 301.0L282 301.0L282 300.5L282.5 300.5L282.5 299.9L283 299.9L283 299.3L283.5 299.3L283.5 303.7L284 303.7L284 308.2L284.5 308.2L284.5 312.7L285 312.7L285 317.2L285.5 317.2L285.5 321.7L286 321.7L286 326.1L286.5 326.1L286.5 330.6L287 330.6L287 327.3L287.5 327.3L287.5 323.2L288 323.2L288 319.0L288.5 319.0L288.5 314.8L289 314.8L289 310.7L289.5 310.7L289.5 306.5L290 306.5L290 302.4L290.5 302.4L290.5 298.2L291 298.2L291 294.1L291.5 294.1L291.5 289.9L292 289.9L292 285.7L292.5 285.7L292.5 285.1L293 285.1L293 286.5L293.5 286.5L293.5 286.5L294 286.5L294 284.9L294.5 284.9L294.5 288.9L295 288.9L295 288.9L295.5 288.9L295.5 288.9L296 288.9L296 285.2L296.5 285.2L296.5 285.2L297 285.2L297 285.2L297.5 285.2L297.5 289.1L298 289.1L298 288.7L298.5 288.7L298.5 288.7L299 288.7L299 288.7L299.5 288.7L299.5 285.3L300 285.3L300 285.3L300.5 285.3L300.5 288.7L301 288.7L301 288.7L301.5 288.7L301.5 289.5L302 289.5L302 289.5L302.5 289.5L302.5 289.1L303 289.1L303 289.1L303.5 289.1L303.5 286.7L304 286.7L304 289.7L304.5 289.7L304.5 289.7L305 289.7L305 286.9L305.5 286.9L305.5 285.9L306 285.9L306 285.9L306.5 285.9L306.5 285.7L307 285.7L307 286.3L307.5 286.3L307.5 286.3L308 286.3L308 289.7L308.5 289.7L308.5 289.7L309 289.7L309 289.8L309.5 289.8L309.5 289.8L310 289.8L310 289.8L310.5 289.8L310.5 289.8L311 289.8L311 289.8L311.5 289.8L311.5 289.8L312 289.8L312 289.8L312.5 289.8L312.5 289.8L313 289.8L313 289.9L313.5 289.9L313.5 290.0L314 290.0L314 290.0L314.5 290.0L314.5 289.7L315 289.7L315 289.7L315.5 289.7L315.5 289.7L316 289.7L316 285.3L316.5 285.3L316.5 285.3L317 285.3L317 285.3L317.5 285.3L317.5 287.0L318 287.0L318 288.9L318.5 288.9L318.5 285.8L319 285.8L319 290.1L319.5 290.1L319.5 290.1L320 290.1L320 290.2L320.5 290.2L320.5 289.8L321 289.8L321 289.8L321.5 289.8L321.5 290.0L322 290.0L322 290.0L322.5 290.0L322.5 289.2L323 289.2L323 289.2L323.5 289.2L323.5 288.5L324 288.5L324 288.5L324.5 288.5L324.5 288.5L325 288.5L325 287.0L325.5 287.0L325.5 287.0L326 287.0L326 287.1L326.5 287.1L326.5 286.5L327 286.5L327 286.4L327.5 286.4L327.5 289.4L328 289.4L328 289.4L328.5 289.4L328.5 290.7L329 290.7L329 290.7L329.5 290.7L329.5 286.3L330 286.3L330 286.3L330.5 286.3L330.5 290.0L331 290.0L331 290.0L331.5 290.0L331.5 286.4L332 286.4L332 286.4L332.5 286.4L332.5 286.4L333 286.4L333 287.6L333.5 287.6L333.5 287.6L334 287.6L334 290.5L334.5 290.5L334.5 290.6L335 290.6L335 290.6L335.5 290.6L335.5 289.5L336 289.5L336 289.5L336.5 289.5L336.5 289.5L337 289.5L337 285.4L337.5 285.4L337.5 286.2L338 286.2L338 286.2L338.5 286.2L338.5 290.8L339 290.8L339 290.0L339.5 290.0L339.5 290.0L340 290.0L340 290.1L340.5 290.1L340.5 290.5L341 290.5L341 290.6L341.5 290.6L341.5 290.9L342 290.9L342 290.9L342.5 290.9L342.5 290.9L343 290.9L343 291.0L343.5 291.0L343.5 291.0L344 291.0L344 287.5L344.5 287.5L344.5 287.5L345 287.5L345 291.4L345.5 291.4L345.5 291.4L346 291.4L346 286.9L346.5 286.9L346.5 286.9L347 286.9L347 286.3L347.5 286.3L347.5 286.3L348 286.3L348 286.3L348.5 286.3L348.5 290.6L349 290.6L349 290.6L349.5 290.6L349.5 290.9L350 290.9L350 290.9L350.5 290.9L350.5 291.0L351 291.0L351 286.2L351.5 286.2L351.5 286.4L352 286.4L352 291.4L352.5 291.4L352.5 291.5L353 291.5L353 291.5L353.5 291.5L353.5 287.6L354 287.6L354 287.6L354.5 287.6L354.5 291.1L355 291.1L355 291.1L355.5 291.1L355.5 285.0L356 285.0L356 285.4L356.5 285.4L356.5 285.4L357 285.4L357 290.1L357.5 290.1L357.5 290.2L358 290.2L358 285.9L358.5 285.9L358.5 285.9L359 285.9L359 289.5L359.5 289.5L359.5 289.7L360 289.7L360 289.7L360.5 289.7L360.5 289.8L361 289.8L361 290.0L361.5 290.0L361.5 290.2L362 290.2L362 290.3L362.5 290.3L362.5 290.3L363 290.3L363 287.7L363.5 287.7L363.5 287.7L364 287.7L364 287.7L364.5 287.7L364.5 286.4L365 286.4L365 286.4L365.5 286.4L365.5 291.2L366 291.2L366 287.4L366.5 287.4L366.5 291.6L367 291.6L367 292.2L367.5 292.2L367.5 292.2L368 292.2L368 290.6L368.5 290.6L368.5 285.7L369 285.7L369 285.7L369.5 285.7L369.5 286.5L370 286.5L370 286.5L370.5 286.5L370.5 290.5L371 290.5L371 290.5L371.5 290.5L371.5 290.5L372 290.5L372 287.2L372.5 287.2L372.5 285.7L373 285.7L373 292.0L373.5 292.0L373.5 292.0L374 292.0L374 286.0L374.5 286.0L374.5 286.0L375 286.0L375 285.9L375.5 285.9L375.5 292.5L376 292.5L376 292.5L376.5 292.5L376.5 292.5L377 292.5L377 291.2L377.5 291.2L377.5 291.2L378 291.2L378 287.5L378.5 287.5L378.5 287.5L379 287.5L379 291.0L379.5 291.0L379.5 291.0L380 291.0L380 291.0L380.5 291.0L380.5 287.9L381 287.9L381 287.9L381.5 287.9L381.5 287.9L382 287.9L382 292.5L382.5 292.5L382.5 287.9L383 287.9L383 287.9L383.5 287.9L383.5 287.9L384 287.9L384 288.0L384.5 288.0L384.5 288.0L385 288.0L385 285.9L385.5 285.9L385.5 290.9L386 290.9L386 290.9L386.5 290.9L386.5 290.9L387 290.9L387 293.0L387.5 293.0L387.5 293.1L388 293.1L388 293.1L388.5 293.1L388.5 286.7L389 286.7L389 286.7L389.5 286.7L389.5 285.9L390 285.9L390 286.0L390.5 286.0L390.5 286.0L391 286.0L391 292.6L391.5 292.6L391.5 292.7L392 292.7L392 292.7L392.5 292.7L392.5 286.6L393 286.6L393 286.6L393.5 286.6L393.5 286.6L394 286.6L394 292.9L394.5 292.9L394.5 292.9L395 292.9L395 293.0L395.5 293.0L395.5 289.0L396 289.0L396 288.0L396.5 288.0L396.5 293.3L397 293.3L397 293.3L397.5 293.3L397.5 293.3L398 293.3L398 291.8L398.5 291.8L398.5 291.8L399 291.8L399 285.9L399.5 285.9L399.5 285.9L400 285.9L400 291.7L400.5 291.7L400.5 291.7L401 291.7L401 288.1L401.5 288.1L401.5 288.1L402 288.1L402 287.0L402.5 287.0L402.5 287.0L403 287.0L403 291.0L403.5 291.0L403.5 291.1L404 291.1L404 291.1L404.5 291.1L404.5 286.5L405 286.5L405 286.5L405.5 286.5L405.5 292.3L406 292.3L406 292.3L406.5 292.3L406.5 286.1L407 286.1L407 285.6L407.5 285.6L407.5 285.6L408 285.6L408 287.3L408.5 287.3L408.5 291.9L409 291.9L409 285.8L409.5 285.8L409.5 285.8L410 285.8L410 288.8L410.5 288.8L410.5 292.3L411 292.3L411 292.3L411.5 292.3L411.5 292.1L412 292.1L412 292.3L412.5 292.3L412.5 291.0L413 291.0L413 293.2L413.5 293.2L413.5 293.2L414 293.2L414 286.7L414.5 286.7L414.5 286.7L415 286.7L415 292.8L415.5 292.8L415.5 292.8L416 292.8L416 288.8L416.5 288.8L416.5 288.8L417 288.8L417 292.9L417.5 292.9L417.5 292.9L418 292.9L418 293.0L418.5 293.0L418.5 287.8L419 287.8L419 287.8L419.5 287.8L419.5 292.7L420 292.7L420 292.7L420.5 292.7L420.5 292.7L421 292.7L421 291.8L421.5 291.8L421.5 291.8L422 291.8L422 287.3L422.5 287.3L422.5 287.3L423 287.3L423 293.1L423.5 293.1L423.5 293.1L424 293.1L424 293.1L424.5 293.1L424.5 293.1L425 293.1L425 286.3L425.5 286.3L425.5 286.3L426 286.3L426 292.0L426.5 292.0L426.5 292.0L427 292.0L427 292.0L427.5 292.0L427.5 288.6L428 288.6L428 288.6L428.5 288.6L428.5 285.9L429 285.9L429 293.8L429.5 293.8L429.5 293.9L430 293.9L430 293.9L430.5 293.9L430.5 286.9L431 286.9L431 294.1L431.5 294.1L431.5 294.1L432 294.1L432 294.1L432.5 294.1L432.5 287.3L433 287.3L433 287.3L433.5 287.3L433.5 292.6L434 292.6L434 292.6L434.5 292.6L434.5 293.4L435 293.4L435 287.8L435.5 287.8L435.5 287.8L436 287.8L436 291.6L436.5 291.6L436.5 291.6L437 291.6L437 291.7L437.5 291.7L437.5 285.9L438 285.9L438 285.9L438.5 285.9L438.5 287.0L439 287.0L439 286.7L439.5 286.7L439.5 286.7L440 286.7L440 292.0L440.5 292.0L440.5 292.0L441 292.0L441 292.0L441.5 292.0L441.5 291.7L442 291.7L442 291.7L442.5 291.7L442.5 293.1L443 293.1L443 293.1L443.5 293.1L443.5 288.7L444 288.7L444 286.2L444.5 286.2L444.5 286.2L445 286.2L445 292.9L445.5 292.9L445.5 292.9L446 292.9L446 293.0L446.5 293.0L446.5 291.8L447 291.8L447 291.8L447.5 291.8L447.5 294.6L448 294.6L448 294.9L448.5 294.9L448.5 289.0L449 289.0L449 289.3L449.5 289.3L449.5 289.3L450 289.3L450 292.6L450.5 292.6L450.5 292.6L451 292.6L451 292.7L451.5 292.7L451.5 292.2L452 292.2L452 292.2L452.5 292.2L452.5 289.8L453 289.8L453 289.8L453.5 289.8L453.5 294.5L454 294.5L454 294.5L454.5 294.5L454.5 294.1L455 294.1L455 289.0L455.5 289.0L455.5 289.0L456 289.0L456 289.0L456.5 289.0L456.5 292.5L457 292.5L457 292.5L457.5 292.5L457.5 292.5L458 292.5L458 295.1L458.5 295.1L458.5 295.1L459 295.1L459 295.1L459.5 295.1L459.5 294.6L460 294.6L460 294.7L460.5 294.7L460.5 287.4L461 287.4L461 293.2L461.5 293.2L461.5 293.2L462 293.2L462 293.2L462.5 293.2L462.5 292.8L463 292.8L463 292.8L463.5 292.8L463.5 292.9L464 292.9L464 294.0L464.5 294.0L464.5 294.0L465 294.0L465 289.4L465.5 289.4L465.5 292.8L466 292.8L466 286.1L466.5 286.1L466.5 286.1L467 286.1L467 286.1L467.5 286.1L467.5 294.0L468 294.0L468 294.0L468.5 294.0L468.5 293.4L469 293.4L469 293.4L469.5 293.4L469.5 294.8L470 294.8L470 294.9L470.5 294.9L470.5 289.0L471 289.0L471 289.0L471.5 289.0L471.5 289.4L472 289.4L472 289.4L472.5 289.4L472.5 295.1L473 295.1L473 295.1L473.5 295.1L473.5 295.2L474 295.2L474 287.3L474.5 287.3L474.5 287.4L475 287.4L475 288.7L475.5 288.7L475.5 289.7L476 289.7L476 289.7L476.5 289.7L476.5 291.9L477 291.9L477 291.9L477.5 291.9L477.5 292.8L478 292.8L478 292.8L478.5 292.8L478.5 292.8L479 292.8L479 293.8L479.5 293.8L479.5 293.8L480 293.8L480 295.6L480.5 295.6L480.5 295.6L481 295.6L481 287.9L481.5 287.9L481.5 287.9L482 287.9L482 287.9L482.5 287.9L482.5 294.1L483 294.1L483 292.8L483.5 292.8L483.5 292.8L484 292.8L484 289.6L484.5 289.6L484.5 289.6L485 289.6L485 295.3L485.5 295.3L485.5 295.3L486 295.3L486 294.2L486.5 294.2L486.5 294.2L487 294.2L487 294.2L487.5 294.2L487.5 295.3L488 295.3L488 295.3L488.5 295.3L488.5 292.9L489 292.9L489 292.9L489.5 292.9L489.5 292.9L490 292.9L490 295.8L490.5 295.8L490.5 295.8L491 295.8L491 295.8L491.5 295.8L491.5 286.3L492 286.3L492 286.3L492.5 286.3L492.5 289.3L493 289.3L493 289.3L493.5 289.3L493.5 289.3L494 289.3L494 288.8L494.5 288.8L494.5 288.8L495 288.8L495 288.8L495.5 288.8L495.5 287.6L496 287.6L496 287.6L496.5 287.6L496.5 287.6L497 287.6L497 293.3L497.5 293.3L497.5 294.4L498 294.4L498 294.4L498.5 294.4L498.5 294.4L499 294.4L499 295.0L499.5 295.0L499.5 295.0L500 295.0L500 295.0L500.5 295.0L500.5 295.3L501 295.3L501 295.4L501.5 295.4L501.5 295.4L502 295.4L502 294.8L502.5 294.8L502.5 294.8L503 294.8L503 294.8L503.5 294.8L503.5 289.5L504 289.5L504 294.0L504.5 294.0L504.5 294.0L505 294.0L505 285.1L505.5 285.1L505.5 285.1L506 285.1L506 285.1L506.5 285.1L506.5 295.9L507 295.9L507 296.0L507.5 296.0L507.5 296.0L508 296.0L508 292.5L508.5 292.5L508.5 292.5L509 292.5L509 290.0L509.5 290.0L509.5 290.0L510 290.0L510 287.4L510.5 287.4L510.5 287.4L511 287.4L511 294.8L511.5 294.8L511.5 294.8L512 294.8L512 296.3L512.5 296.3L512.5 296.2L513 296.2L513 285.9L513.5 285.9L513.5 285.9L514 285.9L514 295.3L514.5 295.3L514.5 295.3L515 295.3L515 295.3L515.5 295.3L515.5 296.0L516 296.0L516 296.0L516.5 296.0L516.5 287.7L517 287.7L517 289.6L517.5 289.6L517.5 296.3L518 296.3L518 296.3L518.5 296.3L518.5 288.8L519 288.8L519 288.8L519.5 288.8L519.5 293.4L520 293.4L520 293.4L520.5 293.4L520.5 293.4L521 293.4L521 286.0L521.5 286.0L521.5 286.0L522 286.0L522 296.4L522.5 296.4L522.5 296.4L523 296.4L523 296.4L523.5 296.4L523.5 293.1L524 293.1L524 293.1L524.5 293.1L524.5 293.2L525 293.2L525 293.9L525.5 293.9L525.5 285.9L526 285.9L526 285.9L526.5 285.9L526.5 296.4L527 296.4L527 296.5L527.5 296.5L527.5 288.4L528 288.4L528 288.4L528.5 288.4L528.5 286.1L529 286.1L529 286.2L529.5 286.2L529.5 286.2L530 286.2L530 296.8L530.5 296.8L530.5 295.8L531 295.8L531 295.8L531.5 295.8L531.5 287.8L532 287.8L532 294.2L532.5 294.2L532.5 294.2L533 294.2L533 286.5L533.5 286.5L533.5 286.5L534 286.5L534 290.5L534.5 290.5L534.5 290.5L535 290.5L535 288.5L535.5 288.5L535.5 288.5L536 288.5L536 288.5L536.5 288.5L536.5 294.0L537 294.0L537 294.1L537.5 294.1L537.5 294.1L538 294.1L538 297.6L538.5 297.6L538.5 297.6L539 297.6L539 297.6L539.5 297.6L539.5 287.5L540 287.5L540 287.5L540.5 287.5L540.5 288.6L541 288.6L541 288.6L541.5 288.6L541.5 288.6L542 288.6L542 287.6L542.5 287.6L542.5 287.6L543 287.6L543 297.3L543.5 297.3L543.5 297.3L544 297.3L544 297.3L544.5 297.3L544.5 286.3L545 286.3L545 286.3L545.5 286.3L545.5 293.3L546 293.3L546 295.6L546.5 295.6L546.5 295.6L547 295.6L547 293.0L547.5 293.0L547.5 296.5L548 296.5L548 296.5L548.5 296.5L548.5 284.9L549 284.9L549 284.9L549.5 284.9L549.5 295.2L550 295.2L550 295.2L550.5 295.2L550.5 295.2L551 295.2L551 285.4L551.5 285.4L551.5 285.7L552 285.7L552 290.1L552.5 290.1L552.5 290.1L553 290.1L553 288.3L553.5 288.3L553.5 290.3L554 290.3L554 290.3L554.5 290.3L554.5 290.3L555 290.3L555 294.1L555.5 294.1L555.5 294.1L556 294.1L556 294.6L556.5 294.6L556.5 295.0L557 295.0L557 287.8L557.5 287.8L557.5 287.8L558 287.8L558 287.8L558.5 287.8L558.5 295.6L559 295.6L559 297.5L559.5 297.5L559.5 297.5L560 297.5L560 289.7L560.5 289.7L560.5 289.7L561 289.7L561 289.7L561.5 289.7L561.5 294.9L562 294.9L562 294.9L562.5 294.9L562.5 296.9L563 296.9L563 296.9L563.5 296.9L563.5 296.9L564 296.9L564 295.9L564.5 295.9L564.5 295.9L565 295.9L565 295.9L565.5 295.9L565.5 294.5L566 294.5L566 294.5L566.5 294.5L566.5 297.2L567 297.2L567 285.1L567.5 285.1L567.5 288.5L568 288.5L568 288.5L568.5 288.5L568.5 296.6L569 296.6L569 296.6L569.5 296.6L569.5 296.8L570 296.8L570 296.8L570.5 296.8L570.5 296.8L571 296.8L571 296.0L571.5 296.0L571.5 287.1L572 287.1L572 287.0L572.5 287.0L572.5 287.8L573 287.8L573 289.7L573.5 289.7L573.5 289.7L574 289.7L574 286.4L574.5 286.4L574.5 286.4L575 286.4L575 288.4L575.5 288.4L575.5 288.4L576 288.4L576 288.4L576.5 288.4L576.5 291.7L577 291.7L577 287.4L577.5 287.4L577.5 287.4L578 287.4L578 289.3L578.5 289.3L578.5 290.9L579 290.9L579 297.7L579.5 297.7L579.5 297.7L580 297.7L580 288.1L580.5 288.1L580.5 288.1L581 288.1L581 297.7L581.5 297.7L581.5 297.7L582 297.7L582 286.8L582.5 286.8L582.5 287.8L583 287.8L583 287.8L583.5 287.8L583.5 287.8L584 287.8L584 287.8L584.5 287.8L584.5 287.8L585 287.8L585 288.5L585.5 288.5L585.5 288.5L586 288.5L586 296.7L586.5 296.7L586.5 296.7L587 296.7L587 296.4L587.5 296.4L587.5 296.4L588 296.4L588 296.1L588.5 296.1L588.5 288.1L589 288.1L589 293.9L589.5 293.9L589.5 293.9L590 293.9L590 295.7L590.5 295.7L590.5 295.7L591 295.7L591 295.7L591.5 295.7L591.5 289.9L592 289.9L592 289.9L592.5 289.9L592.5 288.5L593 288.5L593 288.5L593.5 288.5L593.5 288.5L594 288.5L594 289.7L594.5 289.7L594.5 289.7L595 289.7L595 297.4L595.5 297.4L595.5 297.4L596 297.4L596 298.3L596.5 298.3L596.5 298.3L597 298.3L597 295.4L597.5 295.4L597.5 295.4L598 295.4L598 299.0L598.5 299.0L598.5 299.0L599 299.0L599 298.9L599.5 298.9L599.5 290.2L600 290.2L600 290.2L600.5 290.2L600.5 290.2L601 290.2L601 297.6L601.5 297.6L601.5 287.7L602 287.7L602 287.7L602.5 287.7L602.5 288.3L603 288.3L603 288.2L603.5 288.2L603.5 290.9L604 290.9L604 290.9L604.5 290.9L604.5 290.9L605 290.9L605 294.8L605.5 294.8L605.5 294.8L606 294.8L606 294.8L606.5 294.8L606.5 296.7L607 296.7L607 296.7L607.5 296.7L607.5 298.6L608 298.6L608 298.6L608.5 298.6L608.5 297.3L609 297.3L609 297.3L609.5 297.3L609.5 290.9L610 290.9L610 290.9L610.5 290.9L610.5 299.2L611 299.2L611 297.7L611.5 297.7L611.5 297.7L612 297.7L612 297.7L612.5 297.7L612.5 290.7L613 290.7L613 290.7L613.5 290.7L613.5 289.8L614 289.8L614 289.8L614.5 289.8L614.5 289.8L615 289.8L615 286.4L615.5 286.4L615.5 286.4L616 286.4L616 286.4L616.5 286.4L616.5 295.6L617 295.6L617 295.6L617.5 295.6L617.5 295.6L618 295.6L618 287.6L618.5 287.6L618.5 287.6L619 287.6L619 287.6L619.5 287.6L619.5 290.6L620 290.6L620 296.7L620.5 296.7L620.5 296.6L621 296.6L621 296.6L621.5 296.6L621.5 289.5L622 289.5L622 289.5L622.5 289.5L622.5 289.5L623 289.5L623 289.2L623.5 289.2L623.5 289.2L624 289.2L624 296.8L624.5 296.8L624.5 289.5L625 289.5L625 289.5L625.5 289.5L625.5 288.2L626 288.2L626 286.7L626.5 286.7L626.5 295.1L627 295.1L627 295.1L627.5 295.1L627.5 295.1L628 295.1L628 294.8L628.5 294.8L628.5 294.8L629 294.8L629 293.6L629.5 293.6L629.5 293.6L630 293.6L630 295.2L630.5 295.2L630.5 295.2L631 295.2L631 295.2L631.5 295.2L631.5 287.1L632 287.1L632 296.8L632.5 296.8L632.5 296.8L633 296.8L633 294.8L633.5 294.8L633.5 294.8L634 294.8L634 287.0L634.5 287.0L634.5 287.0L635 287.0L635 285.9L635.5 285.9L635.5 285.9L636 285.9L636 296.3L636.5 296.3L636.5 296.0L637 296.0L637 295.9L637.5 295.9L637.5 289.1L638 289.1L638 289.1L638.5 289.1L638.5 285.6L639 285.6L639 286.8L639.5 286.8L639.5 315.4L640 315.4L640 315.4L640.5 315.4L640.5 315.4L641 315.4L641 315.4L641.5 315.4L641.5 296.3L642 296.3L642 296.3L642.5 296.3L642.5 287.2L643 287.2L643 295.3L643.5 295.3L643.5 295.3L644 295.3L644 285.5L644.5 285.5L644.5 285.5L645 285.5L645 297.0L645.5 297.0L645.5 287.4L646 287.4L646 287.4L646.5 287.4L646.5 296.9L647 296.9L647 296.8L647.5 296.8L647.5 296.5L648 296.5L648 296.5L648.5 296.5L648.5 295.3L649 295.3L649 295.3L649.5 295.3L649.5 296.2L650 296.2L650 296.2L650.5 296.2L650.5 289.5L651 289.5L651 289.5L651.5 289.5L651.5 295.4L652 295.4L652 295.4L652.5 295.4L652.5 296.3L653 296.3L653 296.3L653.5 296.3L653.5 293.4L654 293.4L654 293.4L654.5 293.4L654.5 286.1L655 286.1L655 286.1L655.5 286.1L655.5 286.1L656 286.1L656 293.5L656.5 293.5L656.5 293.5L657 293.5L657 289.9L657.5 289.9L657.5 295.2L658 295.2L658 289.4L658.5 289.4L658.5 289.4L659 289.4L659 288.6L659.5 288.6L659.5 288.6L660 288.6L660 287.4L660.5 287.4L660.5 287.4L661 287.4L661 289.1L661.5 289.1L661.5 289.1L662 289.1L662 289.1L662.5 289.1L662.5 285.8L663 285.8L663 285.8L663.5 285.8L663.5 294.2L664 294.2L664 294.2L664.5 294.2L664.5 294.2L665 294.2L665 297.5L665.5 297.5L665.5 288.2L666 288.2L666 295.2L666.5 295.2L666.5 295.2L667 295.2L667 286.6L667.5 286.6L667.5 287.0L668 287.0L668 287.0L668.5 287.0L668.5 289.4L669 289.4L669 289.4L669.5 289.4L669.5 289.4L670 289.4L670 286.8L670.5 286.8L670.5 286.8L671 286.8L671 286.8L671.5 286.8L671.5 289.5L672 289.5L672 287.5L672.5 287.5L672.5 287.5L673 287.5L673 289.4L673.5 289.4L673.5 295.9L674 295.9L674 294.0L674.5 294.0L674.5 294.0L675 294.0L675 294.3L675.5 294.3L675.5 294.3L676 294.3L676 313.0L676.5 313.0L676.5 313.0L677 313.0L677 313.0L677.5 313.0L677.5 313.0L678 313.0L678 296.7L678.5 296.7L678.5 296.7L679 296.7L679 294.8L679.5 294.8L679.5 294.8L680 294.8L680 294.8L680.5 294.8L680.5 296.2L681 296.2L681 296.2L681.5 296.2L681.5 294.4L682 294.4L682 294.4L682.5 294.4L682.5 294.4L683 294.4L683 286.2L683.5 286.2L683.5 286.2L684 286.2L684 294.8L684.5 294.8L684.5 294.8L685 294.8L685 294.8L685.5 294.8L685.5 296.4L686 296.4L686 294.2L686.5 294.2L686.5 295.9L687 295.9L687 289.0L687.5 289.0L687.5 288.0L688 288.0L688 296.1L688.5 296.1L688.5 297.8L689 297.8L689 297.7L689.5 297.7L689.5 297.7L690 297.7L690 293.7L690.5 293.7L690.5 293.7L691 293.7L691 290.4L691.5 290.4L691.5 290.4L692 290.4L692 290.4L692.5 290.4L692.5 291.3L693 291.3L693 291.3L693.5 291.3L693.5 296.2L694 296.2L694 296.2L694.5 296.2L694.5 294.9L695 294.9L695 294.9L695.5 294.9L695.5 295.5L696 295.5L696 295.4L696.5 295.4L696.5 295.2L697 295.2L697 297.5L697.5 297.5L697.5 297.5L698 297.5L698 297.5L698.5 297.5L698.5 293.2L699 293.2L699 293.2L699.5 293.2L699.5 293.2L700 293.2L700 294.0L700.5 294.0L700.5 284.8L701 284.8L701 284.8L701.5 284.8L701.5 292.5L702 292.5L702 292.5L702.5 292.5L702.5 292.5L703 292.5L703 294.9L703.5 294.9L703.5 294.9L704 294.9L704 294.9L704.5 294.9L704.5 289.3L705 289.3L705 289.3L705.5 289.3L705.5 289.3L706 289.3L706 297.2L706.5 297.2L706.5 297.1L707 297.1L707 297.1L707.5 297.1L707.5 289.1L708 289.1L708 294.4L708.5 294.4L708.5 294.4L709 294.4L709 289.5L709.5 289.5L709.5 289.5L710 289.5L710 320.1L710.5 320.1L710.5 320.1L711 320.1L711 320.1L711.5 320.1L711.5 320.1L712 320.1L712 320.1L712.5 320.1L712.5 320.1L713 320.1L713 285.4L713.5 285.4L713.5 285.4L714 285.4L714 285.4L714.5 285.4L714.5 285.2L715 285.2L715 285.2L715.5 285.2L715.5 285.2L716 285.2L716 288.5L716.5 288.5L716.5 288.5L717 288.5L717 288.5L717.5 288.5L717.5 286.2L718 286.2L718 286.2L718.5 286.2L718.5 286.2L719 286.2L719 288.7L719.5 288.7L719.5 288.7L720 288.7L720 288.7L720.5 288.7L720.5 285.2L721 285.2L721 285.2L721.5 285.2L721.5 286.1L722 286.1L722 289.1L722.5 289.1L722.5 285.6L723 285.6L723 285.6L723.5 285.6L723.5 286.6L724 286.6L724 286.6L724.5 286.6L724.5 286.5L725 286.5L725 286.5L725.5 286.5L725.5 286.4L726 286.4L726 286.1L726.5 286.1L726.5 286.1L727 286.1L727 287.9L727.5 287.9L727.5 287.9L728 287.9L728 286.4L728.5 286.4L728.5 289.2L729 289.2L729 289.2L729.5 289.2L729.5 288.5L730 288.5L730 285.7L730.5 285.7L730.5 285.7L731 285.7L731 285.7L731.5 285.7L731.5 288.6L732 288.6L732 285.7L732.5 285.7L732.5 285.7L733 285.7L733 297.8L733.5 297.8L733.5 297.8L734 297.8L734 285.3L734.5 285.3L734.5 285.2L735 285.2L735 285.2L735.5 285.2L735.5 286.0L736 286.0L736 286.0L736.5 286.0L736.5 286.3L737 286.3L737 288.9L737.5 288.9L737.5 284.9L738 284.9L738 285.4L738.5 285.4L738.5 285.4L739 285.4L739 285.8L739.5 285.8L739.5 285.8L740 285.8L740 285.8L740.5 285.8L740.5 285.6L741 285.6L741 285.6L741.5 285.6L741.5 285.6L742 285.6L742 288.1L742.5 288.1L742.5 288.1L743 288.1L743 288.1L743.5 288.1L743.5 287.7L744 287.7L744 287.7L744.5 287.7L744.5 289.0L745 289.0L745 289.0L745.5 289.0L745.5 286.9L746 286.9L746 286.9L746.5 286.9L746.5 289.0L747 289.0L747 289.0L747.5 289.0L747.5 286.1L748 286.1L748 286.1L748.5 286.1L748.5 286.1L749 286.1L749 288.6L749.5 288.6L749.5 288.6L750 288.6L750 288.2L750.5 288.2L750.5 288.2L751 288.2L751 288.6L751.5 288.6L751.5 287.7L752 287.7L752 287.7L752.5 287.7L752.5 287.7L753 287.7L753 286.2L753.5 286.2L753.5 286.2L754 286.2L754 288.6L754.5 288.6L754.5 288.6L755 288.6L755 288.1L755.5 288.1L755.5 288.1L756 288.1L756 288.1L756.5 288.1L756.5 288.0L757 288.0L757 287.8L757.5 287.8L757.5 287.8L758 287.8L758 284.7L758.5 284.7L758.5 284.7L759 284.7L759 287.9L759.5 287.9L759.5 288.4L760 288.4L760 284.9L760.5 284.9L760.5 287.6L761 287.6L761 287.6L761.5 287.6L761.5 287.4L762 287.4L762 287.4L762.5 287.4L762.5 288.6L763 288.6L763 288.6L763.5 288.6L763.5 285.4L764 285.4L764 285.4L764.5 285.4L764.5 288.6L765 288.6L765 288.6L765.5 288.6L765.5 288.6L766 288.6L766 288.2L766.5 288.2L766.5 288.2L767 288.2L767 288.2L767.5 288.2L767.5 288.6L768 288.6L768 286.2L768.5 286.2L768.5 286.2L769 286.2L769 286.2L769.5 286.2L769.5 288.9L770 288.9L770 288.9L770.5 288.9L770.5 288.7L771 288.7L771 288.7L771.5 288.7L771.5 286.5L772 286.5L772 286.5L772.5 286.5L772.5 286.8L773 286.8L773 285.1L773.5 285.1L773.5 285.1L774 285.1L774 285.6L774.5 285.6L774.5 285.6L775 285.6L775 285.6L775.5 285.6L775.5 286.4L776 286.4L776 285.7L776.5 285.7L776.5 285.7L777 285.7L777 288.5L777.5 288.5L777.5 288.5L778 288.5L778 286.8L778.5 286.8L778.5 286.8L779 286.8L779 286.0L779.5 286.0L779.5 286.0L780 286.0L780 286.0L780.5 286.0L780.5 288.6L781 288.6L781 308.2L781.5 308.2L781.5 308.2L782 308.2L782 308.2L782.5 308.2L782.5 308.2L783 308.2L783 308.2L783.5 308.2L783.5 308.2L784 308.2L784 286.2L784.5 286.2L784.5 286.2L785 286.2L785 286.2L785.5 286.2L785.5 285.9L786 285.9L786 285.9L786.5 285.9L786.5 289.1L787 289.1L787 289.1L787.5 289.1L787.5 288.2L788 288.2L788 285.0L788.5 285.0L788.5 285.0L789 285.0L789 285.0L789.5 285.0L789.5 288.8L790 288.8L790 288.8L790.5 288.8L790.5 284.9L791 284.9L791 286.2L791.5 286.2L791.5 286.2L792 286.2L792 286.2L792.5 286.2L792.5 285.6L793 285.6L793 285.6L793.5 285.6L793.5 288.2L794 288.2L794 288.2L794.5 288.2L794.5 288.4L795 288.4L795 288.5L795.5 288.5L795.5 288.5L796 288.5L796 286.2L796.5 286.2L796.5 286.2L797 286.2L797 286.2L797.5 286.2L797.5 286.2L798 286.2L798 286.2L798.5 286.2L798.5 286.2L799 286.2L799 285.2L799.5 285.2L799.5 285.2L800 285.2L800 287.7L800.5 287.7L800.5 287.7L801 287.7L801 287.7L801.5 287.7L801.5 285.2L802 285.2L802 285.2L802.5 285.2L802.5 285.2L803 285.2L803 288.9L803.5 288.9L803.5 288.9L804 288.9L804 288.9L804.5 288.9L804.5 288.2L805 288.2L805 285.5L805.5 285.5L805.5 285.5L806 285.5L806 288.7L806.5 288.7L806.5 285.8L807 285.8L807 285.8L807.5 285.8L807.5 288.6L808 288.6L808 288.6L808.5 288.6L808.5 285.1L809 285.1L809 285.1L809.5 285.1L809.5 288.3L810 288.3L810 287.9L810.5 287.9L810.5 284.8L811 284.8L811 284.8L811.5 284.8L811.5 284.8L812 284.8L812 284.8L812.5 284.8L812.5 284.8L813 284.8L813 288.5L813.5 288.5L813.5 287.9L814 287.9L814 287.9L814.5 287.9L814.5 288.4L815 288.4L815 288.4L815.5 288.4L815.5 285.1L816 285.1L816 288.6L816.5 288.6L816.5 288.6L817 288.6L817 288.6L817.5 288.6L817.5 286.3L818 286.3L818 286.3L818.5 286.3L818.5 288.2L819 288.2L819 288.2L819.5 288.2L819.5 288.2L820 288.2L820 288.1L820.5 288.1L820.5 288.1L821 288.1L821 288.1L821.5 288.1L821.5 285.9L822 285.9L822 285.9L822.5 285.9L822.5 286.3L823 286.3L823 286.3L823.5 286.3L823.5 288.5L824 288.5L824 288.5L824.5 288.5L824.5 288.5L825 288.5L825 288.4L825.5 288.4L825.5 288.8L826 288.8L826 287.9L826.5 287.9L826.5 287.9L827 287.9L827 285.5L827.5 285.5L827.5 285.5L828 285.5L828 288.4L828.5 288.4L828.5 288.4L829 288.4L829 285.7L829.5 285.7L829.5 285.7L830 285.7L830 287.9L830.5 287.9L830.5 287.9L831 287.9L831 286.0L831.5 286.0L831.5 285.6L832 285.6L832 285.6L832.5 285.6L832.5 285.6L833 285.6L833 287.9L833.5 287.9L833.5 287.9L834 287.9L834 288.4L834.5 288.4L834.5 288.4L835 288.4L835 285.4L835.5 285.4L835.5 285.4L836 285.4L836 288.9L836.5 288.9L836.5 288.9L837 288.9L837 286.2L837.5 286.2L837.5 286.2L838 286.2L838 286.2L838.5 286.2L838.5 285.2L839 285.2L839 285.2L839.5 285.2L839.5 285.0L840 285.0L840 285.0L840.5 285.0L840.5 285.0L841 285.0L841 288.3L841.5 288.3L841.5 288.1L842 288.1L842 288.1L842.5 288.1L842.5 288.1L843 288.1L843 286.4L843.5 286.4L843.5 286.4L844 286.4L844 288.6L844.5 288.6L844.5 288.6L845 288.6L845 287.9L845.5 287.9L845.5 287.9L846 287.9L846 287.9L846.5 287.9L846.5 285.1L847 285.1L847 288.1L847.5 288.1L847.5 288.1L848 288.1L848 285.2L848.5 285.2L848.5 285.2L849 285.2L849 288.3L849.5 288.3L849.5 288.6L850 288.6L850 288.6L850.5 288.6L850.5 285.4L851 285.4L851 294.4L851.5 294.4L851.5 312.5L852 312.5L852 295.9L852.5 295.9L852.5 296.6L853 296.6L853 297.4L853.5 297.4L853.5 316.2L854 316.2L854 299.0L854.5 299.0L854.5 317.9L855 317.9L855 318.7L855.5 318.7L855.5 319.5L856 319.5L856 302.4L856.5 302.4L856.5 303.2L857 303.2L857 321.9L857.5 321.9L857.5 322.6L858 322.6L858 306.0L858.5 306.0L858.5 324.0L859 324.0L859 324.7L859.5 324.7L859.5 325.3L860 325.3L860 310.0L860.5 310.0L860.5 326.5L861 326.5L861 327.1L861.5 327.1L861.5 327.7L862 327.7L862 328.2L862.5 328.2L862.5 328.7L863 328.7L863 329.1L863.5 329.1L863.5 329.6L864 329.6L864 329.9L864.5 329.9L864.5 330.3L865 330.3L865 330.6L865.5 330.6L865.5 330.8L866 330.8L866 331.0L866.5 331.0L866.5 331.1L867 331.1L867 332.9L866.5 332.9L866.5 333.0L866 333.0L866 333.2L865.5 333.2L865.5 333.4L865 333.4L865 333.7L864.5 333.7L864.5 334.1L864 334.1L864 334.4L863.5 334.4L863.5 334.9L863 334.9L863 335.3L862.5 335.3L862.5 335.8L862 335.8L862 336.3L861.5 336.3L861.5 336.9L861 336.9L861 337.5L860.5 337.5L860.5 338.1L860 338.1L860 355.1L859.5 355.1L859.5 339.3L859 339.3L859 340.0L858.5 340.0L858.5 358.0L858 358.0L858 341.4L857.5 341.4L857.5 359.9L857 359.9L857 342.9L856.5 342.9L856.5 343.7L856 343.7L856 344.5L855.5 344.5L855.5 345.3L855 345.3L855 364.2L854.5 364.2L854.5 347.0L854 347.0L854 347.8L853.5 347.8L853.5 348.7L853 348.7L853 367.4L852.5 367.4L852.5 368.1L852 368.1L852 351.5L851.5 351.5L851.5 352.4L851 352.4L851 377.0L850.5 377.0L850.5 377.9L850 377.9L850 374.7L849.5 374.7L849.5 378.4L849 378.4L849 378.4L848.5 378.4L848.5 373.3L848 373.3L848 373.3L847.5 373.3L847.5 373.3L847 373.3L847 373.5L846.5 373.5L846.5 373.8L846 373.8L846 373.8L845.5 373.8L845.5 376.3L845 376.3L845 376.3L844.5 376.3L844.5 377.2L844 377.2L844 377.2L843.5 377.2L843.5 373.6L843 373.6L843 373.6L842.5 373.6L842.5 376.7L842 376.7L842 376.7L841.5 376.7L841.5 374.0L841 374.0L841 374.0L840.5 374.0L840.5 374.0L840 374.0L840 376.8L839.5 376.8L839.5 377.0L839 377.0L839 377.0L838.5 377.0L838.5 373.8L838 373.8L838 373.8L837.5 373.8L837.5 374.9L837 374.9L837 374.9L836.5 374.9L836.5 374.9L836 374.9L836 377.9L835.5 377.9L835.5 377.9L835 377.9L835 374.1L834.5 374.1L834.5 377.5L834 377.5L834 377.5L833.5 377.5L833.5 378.9L833 378.9L833 378.9L832.5 378.9L832.5 378.9L832 378.9L832 373.7L831.5 373.7L831.5 373.7L831 373.7L831 373.7L830.5 373.7L830.5 373.6L830 373.6L830 376.6L829.5 376.6L829.5 376.6L829 376.6L829 373.9L828.5 373.9L828.5 373.9L828 373.9L828 373.4L827.5 373.4L827.5 373.4L827 373.4L827 373.4L826.5 373.4L826.5 374.7L826 374.7L826 374.7L825.5 374.7L825.5 377.7L825 377.7L825 377.7L824.5 377.7L824.5 374.5L824 374.5L824 374.5L823.5 374.5L823.5 374.2L823 374.2L823 374.2L822.5 374.2L822.5 373.8L822 373.8L822 374.0L821.5 374.0L821.5 374.0L821 374.0L821 374.0L820.5 374.0L820.5 374.9L820 374.9L820 377.3L819.5 377.3L819.5 377.3L819 377.3L819 377.3L818.5 377.3L818.5 378.4L818 378.4L818 378.4L817.5 378.4L817.5 378.4L817 378.4L817 378.0L816.5 378.0L816.5 378.0L816 378.0L816 378.0L815.5 378.0L815.5 374.4L815 374.4L815 374.4L814.5 374.4L814.5 374.4L814 374.4L814 375.5L813.5 375.5L813.5 379.2L813 379.2L813 379.2L812.5 379.2L812.5 379.2L812 379.2L812 374.2L811.5 374.2L811.5 378.7L811 378.7L811 378.7L810.5 378.7L810.5 378.7L810 378.7L810 375.6L809.5 375.6L809.5 375.6L809 375.6L809 375.5L808.5 375.5L808.5 375.5L808 375.5L808 377.3L807.5 377.3L807.5 373.6L807 373.6L807 373.6L806.5 373.6L806.5 375.2L806 375.2L806 376.7L805.5 376.7L805.5 374.8L805 374.8L805 377.0L804.5 377.0L804.5 377.0L804 377.0L804 377.2L803.5 377.2L803.5 377.2L803 377.2L803 377.2L802.5 377.2L802.5 377.7L802 377.7L802 377.7L801.5 377.7L801.5 374.2L801 374.2L801 374.2L800.5 374.2L800.5 373.8L800 373.8L800 373.8L799.5 373.8L799.5 373.8L799 373.8L799 373.3L798.5 373.3L798.5 373.3L798 373.3L798 373.3L797.5 373.3L797.5 374.1L797 374.1L797 374.1L796.5 374.1L796.5 374.2L796 374.2L796 374.2L795.5 374.2L795.5 374.2L795 374.2L795 376.3L794.5 376.3L794.5 376.3L794 376.3L794 373.3L793.5 373.3L793.5 373.3L793 373.3L793 374.1L792.5 374.1L792.5 373.1L792 373.1L792 373.1L791.5 373.1L791.5 373.1L791 373.1L791 376.7L790.5 376.7L790.5 376.7L790 376.7L790 377.4L789.5 377.4L789.5 377.4L789 377.4L789 374.5L788.5 374.5L788.5 374.5L788 374.5L788 377.9L787.5 377.9L787.5 377.9L787 377.9L787 377.9L786.5 377.9L786.5 374.9L786 374.9L786 374.9L785.5 374.9L785.5 374.9L785 374.9L785 375.5L784.5 375.5L784.5 375.5L784 375.5L784 355.8L783.5 355.8L783.5 355.8L783 355.8L783 355.8L782.5 355.8L782.5 355.8L782 355.8L782 355.8L781.5 355.8L781.5 355.8L781 355.8L781 377.3L780.5 377.3L780.5 379.0L780 379.0L780 373.7L779.5 373.7L779.5 373.7L779 373.7L779 373.7L778.5 373.7L778.5 378.3L778 378.3L778 378.3L777.5 378.3L777.5 378.3L777 378.3L777 378.0L776.5 378.0L776.5 378.0L776 378.0L776 377.1L775.5 377.1L775.5 377.1L775 377.1L775 377.1L774.5 377.1L774.5 377.1L774 377.1L774 377.1L773.5 377.1L773.5 374.2L773 374.2L773 374.2L772.5 374.2L772.5 377.1L772 377.1L772 378.7L771.5 378.7L771.5 378.7L771 378.7L771 378.7L770.5 378.7L770.5 374.6L770 374.6L770 377.4L769.5 377.4L769.5 377.4L769 377.4L769 373.8L768.5 373.8L768.5 373.8L768 373.8L768 373.8L767.5 373.8L767.5 373.6L767 373.6L767 373.6L766.5 373.6L766.5 374.9L766 374.9L766 374.9L765.5 374.9L765.5 376.8L765 376.8L765 374.8L764.5 374.8L764.5 374.8L764 374.8L764 374.4L763.5 374.4L763.5 374.4L763 374.4L763 373.4L762.5 373.4L762.5 373.4L762 373.4L762 373.4L761.5 373.4L761.5 378.7L761 378.7L761 378.7L760.5 378.7L760.5 378.7L760 378.7L760 374.9L759.5 374.9L759.5 374.9L759 374.9L759 378.0L758.5 378.0L758.5 378.0L758 378.0L758 373.6L757.5 373.6L757.5 373.6L757 373.6L757 373.6L756.5 373.6L756.5 377.2L756 377.2L756 377.2L755.5 377.2L755.5 374.2L755 374.2L755 374.1L754.5 374.1L754.5 374.1L754 374.1L754 374.1L753.5 374.1L753.5 373.5L753 373.5L753 373.5L752.5 373.5L752.5 373.9L752 373.9L752 373.9L751.5 373.9L751.5 373.9L751 373.9L751 374.7L750.5 374.7L750.5 374.7L750 374.7L750 374.7L749.5 374.7L749.5 378.4L749 378.4L749 378.4L748.5 378.4L748.5 373.6L748 373.6L748 374.1L747.5 374.1L747.5 374.1L747 374.1L747 372.9L746.5 372.9L746.5 374.7L746 374.7L746 374.7L745.5 374.7L745.5 377.0L745 377.0L745 377.0L744.5 377.0L744.5 378.1L744 378.1L744 378.1L743.5 378.1L743.5 378.1L743 378.1L743 378.5L742.5 378.5L742.5 378.5L742 378.5L742 378.5L741.5 378.5L741.5 376.9L741 376.9L741 376.9L740.5 376.9L740.5 378.1L740 378.1L740 378.1L739.5 378.1L739.5 378.1L739 378.1L739 373.3L738.5 373.3L738.5 373.3L738 373.3L738 374.7L737.5 374.7L737.5 374.7L737 374.7L737 373.5L736.5 373.5L736.5 373.5L736 373.5L736 373.1L735.5 373.1L735.5 377.7L735 377.7L735 373.7L734.5 373.7L734.5 373.7L734 373.7L734 366.2L733.5 366.2L733.5 366.2L733 366.2L733 377.2L732.5 377.2L732.5 373.6L732 373.6L732 373.6L731.5 373.6L731.5 374.4L731 374.4L731 374.4L730.5 374.4L730.5 373.1L730 373.1L730 373.1L729.5 373.1L729.5 378.6L729 378.6L729 378.6L728.5 378.6L728.5 377.9L728 377.9L728 374.6L727.5 374.6L727.5 374.3L727 374.3L727 374.3L726.5 374.3L726.5 374.9L726 374.9L726 374.9L725.5 374.9L725.5 373.5L725 373.5L725 373.5L724.5 373.5L724.5 378.4L724 378.4L724 378.4L723.5 378.4L723.5 377.5L723 377.5L723 377.6L722.5 377.6L722.5 377.6L722 377.6L722 377.6L721.5 377.6L721.5 374.4L721 374.4L721 374.4L720.5 374.4L720.5 374.4L720 374.4L720 375.6L719.5 375.6L719.5 375.6L719 375.6L719 375.3L718.5 375.3L718.5 375.3L718 375.3L718 373.8L717.5 373.8L717.5 374.0L717 374.0L717 374.0L716.5 374.0L716.5 378.9L716 378.9L716 378.9L715.5 378.9L715.5 378.8L715 378.8L715 378.8L714.5 378.8L714.5 373.5L714 373.5L714 373.5L713.5 373.5L713.5 373.5L713 373.5L713 343.9L712.5 343.9L712.5 343.9L712 343.9L712 343.9L711.5 343.9L711.5 343.9L711 343.9L711 343.9L710.5 343.9L710.5 343.9L710 343.9L710 374.3L709.5 374.3L709.5 361.2L709 361.2L709 365.1L708.5 365.1L708.5 365.1L708 365.1L708 365.6L707.5 365.6L707.5 365.6L707 365.6L707 375.3L706.5 375.3L706.5 376.6L706 376.6L706 364.5L705.5 364.5L705.5 373.6L705 373.6L705 373.6L704.5 373.6L704.5 373.6L704 373.6L704 363.7L703.5 363.7L703.5 363.7L703 363.7L703 366.1L702.5 366.1L702.5 366.1L702 366.1L702 363.9L701.5 363.9L701.5 363.9L701 363.9L701 363.3L700.5 363.3L700.5 363.3L700 363.3L700 363.3L699.5 363.3L699.5 364.1L699 364.1L699 364.1L698.5 364.1L698.5 376.1L698 376.1L698 376.1L697.5 376.1L697.5 376.5L697 376.5L697 362.1L696.5 362.1L696.5 362.1L696 362.1L696 371.7L695.5 371.7L695.5 371.7L695 371.7L695 366.0L694.5 366.0L694.5 366.0L694 366.0L694 366.8L693.5 366.8L693.5 366.8L693 366.8L693 372.3L692.5 372.3L692.5 372.3L692 372.3L692 363.8L691.5 363.8L691.5 363.8L691 363.8L691 366.9L690.5 366.9L690.5 366.9L690 366.9L690 377.1L689.5 377.1L689.5 377.1L689 377.1L689 362.0L688.5 362.0L688.5 362.0L688 362.0L688 365.0L687.5 365.0L687.5 365.0L687 365.0L687 363.5L686.5 363.5L686.5 363.5L686 363.5L686 363.5L685.5 363.5L685.5 374.5L685 374.5L685 374.5L684.5 374.5L684.5 360.3L684 360.3L684 360.3L683.5 360.3L683.5 360.7L683 360.7L683 360.7L682.5 360.7L682.5 360.7L682 360.7L682 360.3L681.5 360.3L681.5 360.3L681 360.3L681 371.9L680.5 371.9L680.5 371.9L680 371.9L680 371.8L679.5 371.8L679.5 371.8L679 371.8L679 371.8L678.5 371.8L678.5 359.8L678 359.8L678 351.0L677.5 351.0L677.5 351.0L677 351.0L677 351.0L676.5 351.0L676.5 351.0L676 351.0L676 360.9L675.5 360.9L675.5 360.9L675 360.9L675 360.9L674.5 360.9L674.5 362.6L674 362.6L674 362.6L673.5 362.6L673.5 363.7L673 363.7L673 363.7L672.5 363.7L672.5 363.7L672 363.7L672 371.9L671.5 371.9L671.5 371.9L671 371.9L671 371.9L670.5 371.9L670.5 372.0L670 372.0L670 372.0L669.5 372.0L669.5 372.0L669 372.0L669 374.9L668.5 374.9L668.5 374.9L668 374.9L668 374.9L667.5 374.9L667.5 363.5L667 363.5L667 363.7L666.5 363.7L666.5 363.7L666 363.7L666 373.0L665.5 373.0L665.5 361.2L665 361.2L665 361.2L664.5 361.2L664.5 371.5L664 371.5L664 371.5L663.5 371.5L663.5 363.7L663 363.7L663 363.7L662.5 363.7L662.5 361.0L662 361.0L662 361.0L661.5 361.0L661.5 362.7L661 362.7L661 362.7L660.5 362.7L660.5 362.7L660 362.7L660 364.1L659.5 364.1L659.5 364.1L659 364.1L659 365.1L658.5 365.1L658.5 365.1L658 365.1L658 365.1L657.5 365.1L657.5 364.9L657 364.9L657 364.9L656.5 364.9L656.5 366.8L656 366.8L656 361.7L655.5 361.7L655.5 361.7L655 361.7L655 363.0L654.5 363.0L654.5 363.0L654 363.0L654 376.5L653.5 376.5L653.5 376.5L653 376.5L653 370.9L652.5 370.9L652.5 370.8L652 370.8L652 377.2L651.5 377.2L651.5 377.2L651 377.2L651 371.1L650.5 371.1L650.5 371.1L650 371.1L650 371.1L649.5 371.1L649.5 372.3L649 372.3L649 372.3L648.5 372.3L648.5 372.3L648 372.3L648 364.9L647.5 364.9L647.5 364.9L647 364.9L647 364.9L646.5 364.9L646.5 363.7L646 363.7L646 363.7L645.5 363.7L645.5 363.7L645 363.7L645 371.5L644.5 371.5L644.5 373.1L644 373.1L644 373.1L643.5 373.1L643.5 365.7L643 365.7L643 365.7L642.5 365.7L642.5 365.7L642 365.7L642 377.9L641.5 377.9L641.5 348.6L641 348.6L641 348.6L640.5 348.6L640.5 348.6L640 348.6L640 348.6L639.5 348.6L639.5 361.1L639 361.1L639 362.0L638.5 362.0L638.5 365.0L638 365.0L638 376.5L637.5 376.5L637.5 361.2L637 361.2L637 361.2L636.5 361.2L636.5 361.2L636 361.2L636 360.7L635.5 360.7L635.5 360.7L635 360.7L635 360.6L634.5 360.6L634.5 371.2L634 371.2L634 371.2L633.5 371.2L633.5 363.2L633 363.2L633 363.2L632.5 363.2L632.5 375.1L632 375.1L632 375.1L631.5 375.1L631.5 375.1L631 375.1L631 363.0L630.5 363.0L630.5 363.0L630 363.0L630 361.7L629.5 361.7L629.5 361.7L629 361.7L629 361.7L628.5 361.7L628.5 372.0L628 372.0L628 372.0L627.5 372.0L627.5 372.0L627 372.0L627 370.8L626.5 370.8L626.5 370.8L626 370.8L626 370.8L625.5 370.8L625.5 373.9L625 373.9L625 373.9L624.5 373.9L624.5 373.9L624 373.9L624 362.1L623.5 362.1L623.5 362.1L623 362.1L623 375.5L622.5 375.5L622.5 375.5L622 375.5L622 363.9L621.5 363.9L621.5 363.9L621 363.9L621 362.9L620.5 362.9L620.5 376.1L620 376.1L620 365.1L619.5 365.1L619.5 365.1L619 365.1L619 365.1L618.5 365.1L618.5 377.4L618 377.4L618 377.4L617.5 377.4L617.5 364.1L617 364.1L617 364.1L616.5 364.1L616.5 375.7L616 375.7L616 375.7L615.5 375.7L615.5 375.7L615 375.7L615 363.1L614.5 363.1L614.5 377.2L614 377.2L614 377.2L613.5 377.2L613.5 362.7L613 362.7L613 361.6L612.5 361.6L612.5 364.8L612 364.8L612 364.8L611.5 364.8L611.5 365.2L611 365.2L611 365.2L610.5 365.2L610.5 365.2L610 365.2L610 377.5L609.5 377.5L609.5 363.4L609 363.4L609 363.4L608.5 363.4L608.5 360.8L608 360.8L608 360.8L607.5 360.8L607.5 366.4L607 366.4L607 366.4L606.5 366.4L606.5 366.4L606 366.4L606 361.9L605.5 361.9L605.5 361.9L605 361.9L605 377.5L604.5 377.5L604.5 377.5L604 377.5L604 377.5L603.5 377.5L603.5 371.5L603 371.5L603 371.5L602.5 371.5L602.5 371.5L602 371.5L602 374.4L601.5 374.4L601.5 374.4L601 374.4L601 364.5L600.5 364.5L600.5 364.5L600 364.5L600 360.3L599.5 360.3L599.5 373.4L599 373.4L599 373.4L598.5 373.4L598.5 372.4L598 372.4L598 372.4L597.5 372.4L597.5 360.7L597 360.7L597 360.3L596.5 360.3L596.5 360.3L596 360.3L596 362.6L595.5 362.6L595.5 362.8L595 362.8L595 362.8L594.5 362.8L594.5 360.9L594 360.9L594 360.9L593.5 360.9L593.5 359.9L593 359.9L593 359.9L592.5 359.9L592.5 360.2L592 360.2L592 360.2L591.5 360.2L591.5 372.2L591 372.2L591 364.6L590.5 364.6L590.5 364.6L590 364.6L590 374.3L589.5 374.3L589.5 364.3L589 364.3L589 375.0L588.5 375.0L588.5 375.0L588 375.0L588 375.0L587.5 375.0L587.5 372.9L587 372.9L587 372.9L586.5 372.9L586.5 372.9L586 372.9L586 370.9L585.5 370.9L585.5 370.9L585 370.9L585 370.2L584.5 370.2L584.5 370.2L584 370.2L584 370.2L583.5 370.2L583.5 363.7L583 363.7L583 363.7L582.5 363.7L582.5 363.7L582 363.7L582 366.8L581.5 366.8L581.5 366.8L581 366.8L581 365.9L580.5 365.9L580.5 365.9L580 365.9L580 363.0L579.5 363.0L579.5 371.8L579 371.8L579 371.8L578.5 371.8L578.5 363.4L578 363.4L578 363.4L577.5 363.4L577.5 363.2L577 363.2L577 363.2L576.5 363.2L576.5 363.2L576 363.2L576 365.6L575.5 365.6L575.5 365.6L575 365.6L575 362.3L574.5 362.3L574.5 362.3L574 362.3L574 378.1L573.5 378.1L573.5 378.1L573 378.1L573 370.7L572.5 370.7L572.5 370.7L572 370.7L572 370.7L571.5 370.7L571.5 371.2L571 371.2L571 371.2L570.5 371.2L570.5 371.2L570 371.2L570 373.1L569.5 373.1L569.5 377.6L569 377.6L569 365.9L568.5 365.9L568.5 362.4L568 362.4L568 362.4L567.5 362.4L567.5 375.8L567 375.8L567 372.0L566.5 372.0L566.5 372.0L566 372.0L566 372.0L565.5 372.0L565.5 364.0L565 364.0L565 364.0L564.5 364.0L564.5 364.1L564 364.1L564 371.8L563.5 371.8L563.5 371.8L563 371.8L563 373.9L562.5 373.9L562.5 373.9L562 373.9L562 373.9L561.5 373.9L561.5 359.6L561 359.6L561 359.6L560.5 359.6L560.5 359.8L560 359.8L560 369.4L559.5 369.4L559.5 369.5L559 369.5L559 365.1L558.5 365.1L558.5 365.1L558 365.1L558 359.7L557.5 359.7L557.5 359.7L557 359.7L557 360.5L556.5 360.5L556.5 360.6L556 360.6L556 360.6L555.5 360.6L555.5 359.8L555 359.8L555 359.9L554.5 359.9L554.5 372.3L554 372.3L554 375.6L553.5 375.6L553.5 375.6L553 375.6L553 375.6L552.5 375.6L552.5 374.0L552 374.0L552 374.0L551.5 374.0L551.5 372.6L551 372.6L551 372.6L550.5 372.6L550.5 376.3L550 376.3L550 376.3L549.5 376.3L549.5 376.3L549 376.3L549 369.5L548.5 369.5L548.5 369.5L548 369.5L548 365.0L547.5 365.0L547.5 365.0L547 365.0L547 360.6L546.5 360.6L546.5 375.4L546 375.4L546 375.4L545.5 375.4L545.5 366.5L545 366.5L545 366.5L544.5 366.5L544.5 361.3L544 361.3L544 373.0L543.5 373.0L543.5 373.0L543 373.0L543 361.3L542.5 361.3L542.5 361.3L542 361.3L542 361.3L541.5 361.3L541.5 371.4L541 371.4L541 371.4L540.5 371.4L540.5 375.0L540 375.0L540 375.0L539.5 375.0L539.5 375.0L539 375.0L539 372.6L538.5 372.6L538.5 372.6L538 372.6L538 363.2L537.5 363.2L537.5 363.2L537 363.2L537 364.1L536.5 364.1L536.5 364.1L536 364.1L536 375.0L535.5 375.0L535.5 375.7L535 375.7L535 375.7L534.5 375.7L534.5 371.3L534 371.3L534 371.3L533.5 371.3L533.5 367.1L533 367.1L533 367.1L532.5 367.1L532.5 367.1L532 367.1L532 364.8L531.5 364.8L531.5 364.8L531 364.8L531 370.9L530.5 370.9L530.5 371.0L530 371.0L530 371.2L529.5 371.2L529.5 371.2L529 371.2L529 376.5L528.5 376.5L528.5 376.5L528 376.5L528 377.1L527.5 377.1L527.5 377.1L527 377.1L527 377.1L526.5 377.1L526.5 365.3L526 365.3L526 366.4L525.5 366.4L525.5 366.4L525 366.4L525 366.4L524.5 366.4L524.5 368.3L524 368.3L524 368.3L523.5 368.3L523.5 368.3L523 368.3L523 363.9L522.5 363.9L522.5 365.8L522 365.8L522 365.8L521.5 365.8L521.5 376.6L521 376.6L521 376.6L520.5 376.6L520.5 366.2L520 366.2L520 366.1L519.5 366.1L519.5 366.2L519 366.2L519 374.1L518.5 374.1L518.5 374.1L518 374.1L518 366.4L517.5 366.4L517.5 366.8L517 366.8L517 366.8L516.5 366.8L516.5 364.1L516 364.1L516 364.2L515.5 364.2L515.5 364.2L515 364.2L515 377.2L514.5 377.2L514.5 377.2L514 377.2L514 366.8L513.5 366.8L513.5 366.8L513 366.8L513 365.3L512.5 365.3L512.5 375.5L512 375.5L512 375.5L511.5 375.5L511.5 364.0L511 364.0L511 364.5L510.5 364.5L510.5 364.5L510 364.5L510 364.5L509.5 364.5L509.5 373.9L509 373.9L509 378.0L508.5 378.0L508.5 378.0L508 378.0L508 375.4L507.5 375.4L507.5 375.4L507 375.4L507 364.8L506.5 364.8L506.5 365.5L506 365.5L506 363.7L505.5 363.7L505.5 363.7L505 363.7L505 374.4L504.5 374.4L504.5 372.6L504 372.6L504 372.6L503.5 372.6L503.5 372.0L503 372.0L503 372.1L502.5 372.1L502.5 367.3L502 367.3L502 367.1L501.5 367.1L501.5 367.2L501 367.2L501 367.2L500.5 367.2L500.5 364.8L500 364.8L500 364.8L499.5 364.8L499.5 377.6L499 377.6L499 365.6L498.5 365.6L498.5 364.2L498 364.2L498 364.2L497.5 364.2L497.5 374.6L497 374.6L497 371.9L496.5 371.9L496.5 371.9L496 371.9L496 375.0L495.5 375.0L495.5 377.2L495 377.2L495 377.2L494.5 377.2L494.5 366.7L494 366.7L494 366.7L493.5 366.7L493.5 366.7L493 366.7L493 365.4L492.5 365.4L492.5 365.4L492 365.4L492 368.7L491.5 368.7L491.5 368.7L491 368.7L491 368.7L490.5 368.7L490.5 366.8L490 366.8L490 366.8L489.5 366.8L489.5 364.3L489 364.3L489 364.3L488.5 364.3L488.5 365.5L488 365.5L488 365.6L487.5 365.6L487.5 368.1L487 368.1L487 368.2L486.5 368.2L486.5 368.2L486 368.2L486 366.4L485.5 366.4L485.5 372.1L485 372.1L485 366.9L484.5 366.9L484.5 366.9L484 366.9L484 368.5L483.5 368.5L483.5 368.5L483 368.5L483 368.5L482.5 368.5L482.5 366.2L482 366.2L482 366.2L481.5 366.2L481.5 377.0L481 377.0L481 377.0L480.5 377.0L480.5 377.0L480 377.0L480 376.8L479.5 376.8L479.5 366.3L479 366.3L479 367.0L478.5 367.0L478.5 365.6L478 365.6L478 365.7L477.5 365.7L477.5 365.4L477 365.4L477 365.5L476.5 365.5L476.5 369.6L476 369.6L476 369.6L475.5 369.6L475.5 366.4L475 366.4L475 366.4L474.5 366.4L474.5 369.1L474 369.1L474 369.2L473.5 369.2L473.5 369.2L473 369.2L473 368.0L472.5 368.0L472.5 368.0L472 368.0L472 377.9L471.5 377.9L471.5 377.9L471 377.9L471 367.5L470.5 367.5L470.5 373.9L470 373.9L470 376.9L469.5 376.9L469.5 376.9L469 376.9L469 376.6L468.5 376.6L468.5 376.6L468 376.6L468 376.6L467.5 376.6L467.5 366.9L467 366.9L467 366.9L466.5 366.9L466.5 366.0L466 366.0L466 366.0L465.5 366.0L465.5 366.7L465 366.7L465 366.8L464.5 366.8L464.5 373.1L464 373.1L464 373.1L463.5 373.1L463.5 373.2L463 373.2L463 366.1L462.5 366.1L462.5 366.1L462 366.1L462 376.2L461.5 376.2L461.5 376.2L461 376.2L461 376.7L460.5 376.7L460.5 376.7L460 376.7L460 367.8L459.5 367.8L459.5 367.8L459 367.8L459 367.9L458.5 367.9L458.5 375.5L458 375.5L458 375.5L457.5 375.5L457.5 374.7L457 374.7L457 376.5L456.5 376.5L456.5 376.5L456 376.5L456 375.4L455.5 375.4L455.5 375.4L455 375.4L455 375.4L454.5 375.4L454.5 366.4L454 366.4L454 366.4L453.5 366.4L453.5 366.4L453 366.4L453 367.7L452.5 367.7L452.5 367.8L452 367.8L452 377.5L451.5 377.5L451.5 377.5L451 377.5L451 366.0L450.5 366.0L450.5 366.0L450 366.0L450 366.0L449.5 366.0L449.5 367.3L449 367.3L449 369.2L448.5 369.2L448.5 366.4L448 366.4L448 366.5L447.5 366.5L447.5 366.5L447 366.5L447 373.2L446.5 373.2L446.5 373.2L446 373.2L446 375.3L445.5 375.3L445.5 375.3L445 375.3L445 367.1L444.5 367.1L444.5 370.0L444 370.0L444 370.0L443.5 370.0L443.5 369.1L443 369.1L443 369.1L442.5 369.1L442.5 375.3L442 375.3L442 375.3L441.5 375.3L441.5 375.3L441 375.3L441 379.2L440.5 379.2L440.5 379.2L440 379.2L440 367.7L439.5 367.7L439.5 367.7L439 367.7L439 367.7L438.5 367.7L438.5 367.7L438 367.7L438 367.8L437.5 367.8L437.5 367.8L437 367.8L437 369.1L436.5 369.1L436.5 369.1L436 369.1L436 369.1L435.5 369.1L435.5 367.2L435 367.2L435 367.2L434.5 367.2L434.5 366.9L434 366.9L434 366.9L433.5 366.9L433.5 372.7L433 372.7L433 372.7L432.5 372.7L432.5 366.8L432 366.8L432 366.8L431.5 366.8L431.5 366.8L431 366.8L431 366.8L430.5 366.8L430.5 374.4L430 374.4L430 374.5L429.5 374.5L429.5 368.6L429 368.6L429 368.6L428.5 368.6L428.5 368.1L428 368.1L428 368.1L427.5 368.1L427.5 368.8L427 368.8L427 370.8L426.5 370.8L426.5 370.8L426 370.8L426 370.9L425.5 370.9L425.5 370.1L425 370.1L425 375.6L424.5 375.6L424.5 375.6L424 375.6L424 370.7L423.5 370.7L423.5 370.7L423 370.7L423 378.1L422.5 378.1L422.5 378.1L422 378.1L422 375.5L421.5 375.5L421.5 368.0L421 368.0L421 368.0L420.5 368.0L420.5 376.5L420 376.5L420 376.5L419.5 376.5L419.5 368.3L419 368.3L419 371.3L418.5 371.3L418.5 371.3L418 371.3L418 377.0L417.5 377.0L417.5 377.0L417 377.0L417 377.0L416.5 377.0L416.5 367.9L416 367.9L416 368.0L415.5 368.0L415.5 368.0L415 368.0L415 377.4L414.5 377.4L414.5 370.4L414 370.4L414 374.1L413.5 374.1L413.5 374.1L413 374.1L413 374.1L412.5 374.1L412.5 375.5L412 375.5L412 375.5L411.5 375.5L411.5 371.6L411 371.6L411 370.8L410.5 370.8L410.5 370.8L410 370.8L410 371.9L409.5 371.9L409.5 371.9L409 371.9L409 371.9L408.5 371.9L408.5 370.7L408 370.7L408 369.8L407.5 369.8L407.5 369.8L407 369.8L407 369.8L406.5 369.8L406.5 371.8L406 371.8L406 371.8L405.5 371.8L405.5 371.7L405 371.7L405 371.7L404.5 371.7L404.5 371.8L404 371.8L404 371.7L403.5 371.7L403.5 371.7L403 371.7L403 370.8L402.5 370.8L402.5 370.9L402 370.9L402 370.9L401.5 370.9L401.5 371.1L401 371.1L401 371.1L400.5 371.1L400.5 370.9L400 370.9L400 377.7L399.5 377.7L399.5 377.7L399 377.7L399 370.4L398.5 370.4L398.5 370.4L398 370.4L398 371.8L397.5 371.8L397.5 371.8L397 371.8L397 378.7L396.5 378.7L396.5 378.7L396 378.7L396 371.3L395.5 371.3L395.5 371.4L395 371.4L395 371.4L394.5 371.4L394.5 378.0L394 378.0L394 378.0L393.5 378.0L393.5 378.0L393 378.0L393 370.3L392.5 370.3L392.5 370.3L392 370.3L392 376.6L391.5 376.6L391.5 370.6L391 370.6L391 370.6L390.5 370.6L390.5 377.3L390 377.3L390 373.1L389.5 373.1L389.5 373.1L389 373.1L389 373.1L388.5 373.1L388.5 378.4L388 378.4L388 378.4L387.5 378.4L387.5 378.4L387 378.4L387 370.5L386.5 370.5L386.5 370.5L386 370.5L386 372.5L385.5 372.5L385.5 372.6L385 372.6L385 372.6L384.5 372.6L384.5 371.5L384 371.5L384 370.6L383.5 370.6L383.5 370.7L383 370.7L383 378.4L382.5 378.4L382.5 378.4L382 378.4L382 378.4L381.5 378.4L381.5 371.4L381 371.4L381 377.0L380.5 377.0L380.5 377.0L380 377.0L380 377.0L379.5 377.0L379.5 371.6L379 371.6L379 371.7L378.5 371.7L378.5 373.4L378 373.4L378 373.4L377.5 373.4L377.5 372.4L377 372.4L377 372.4L376.5 372.4L376.5 372.4L376 372.4L376 376.9L375.5 376.9L375.5 376.9L375 376.9L375 371.1L374.5 371.1L374.5 371.2L374 371.2L374 371.2L373.5 371.2L373.5 371.5L373 371.5L373 371.5L372.5 371.5L372.5 370.9L372 370.9L372 377.1L371.5 377.1L371.5 377.1L371 377.1L371 371.5L370.5 371.5L370.5 371.6L370 371.6L370 372.1L369.5 372.1L369.5 372.1L369 372.1L369 372.1L368.5 372.1L368.5 377.0L368 377.0L368 377.0L367.5 377.0L367.5 371.1L367 371.1L367 371.1L366.5 371.1L366.5 372.3L366 372.3L366 372.4L365.5 372.4L365.5 371.3L365 371.3L365 371.3L364.5 371.3L364.5 371.3L364 371.3L364 377.1L363.5 377.1L363.5 371.6L363 371.6L363 371.6L362.5 371.6L362.5 378.1L362 378.1L362 378.1L361.5 378.1L361.5 372.7L361 372.7L361 371.4L360.5 371.4L360.5 377.1L360 377.1L360 376.4L359.5 376.4L359.5 376.4L359 376.4L359 376.4L358.5 376.4L358.5 375.8L358 375.8L358 371.4L357.5 371.4L357.5 378.1L357 378.1L357 378.1L356.5 378.1L356.5 373.8L356 373.8L356 373.9L355.5 373.9L355.5 372.7L355 372.7L355 372.7L354.5 372.7L354.5 379.1L354 379.1L354 379.1L353.5 379.1L353.5 379.1L353 379.1L353 372.2L352.5 372.2L352.5 372.2L352 372.2L352 373.1L351.5 373.1L351.5 373.2L351 373.2L351 373.2L350.5 373.2L350.5 372.8L350 372.8L350 372.9L349.5 372.9L349.5 373.3L349 373.3L349 373.3L348.5 373.3L348.5 373.6L348 373.6L348 373.6L347.5 373.6L347.5 376.5L347 376.5L347 376.5L346.5 376.5L346.5 376.5L346 376.5L346 373.9L345.5 373.9L345.5 373.9L345 373.9L345 374.0L344.5 374.0L344.5 374.0L344 374.0L344 374.1L343.5 374.1L343.5 376.2L343 376.2L343 372.4L342.5 372.4L342.5 372.4L342 372.4L342 378.3L341.5 378.3L341.5 376.1L341 376.1L341 376.1L340.5 376.1L340.5 376.1L340 376.1L340 376.5L339.5 376.5L339.5 376.5L339 376.5L339 373.6L338.5 373.6L338.5 372.5L338 372.5L338 378.8L337.5 378.8L337.5 378.8L337 378.8L337 374.1L336.5 374.1L336.5 376.9L336 376.9L336 376.9L335.5 376.9L335.5 373.0L335 373.0L335 373.0L334.5 373.0L334.5 374.2L334 374.2L334 374.2L333.5 374.2L333.5 374.2L333 374.2L333 372.9L332.5 372.9L332.5 372.9L332 372.9L332 378.0L331.5 378.0L331.5 378.0L331 378.0L331 373.4L330.5 373.4L330.5 374.7L330 374.7L330 373.2L329.5 373.2L329.5 373.2L329 373.2L329 379.0L328.5 379.0L328.5 379.1L328 379.1L328 376.8L327.5 376.8L327.5 376.8L327 376.8L327 376.8L326.5 376.8L326.5 379.3L326 379.3L326 379.3L325.5 379.3L325.5 375.1L325 375.1L325 375.2L324.5 375.2L324.5 377.0L324 377.0L324 377.3L323.5 377.3L323.5 377.3L323 377.3L323 378.5L322.5 378.5L322.5 378.5L322 378.5L322 378.5L321.5 378.5L321.5 374.9L321 374.9L321 379.2L320.5 379.2L320.5 379.2L320 379.2L320 379.2L319.5 379.2L319.5 375.3L319 375.3L319 378.0L318.5 378.0L318.5 378.0L318 378.0L318 378.0L317.5 378.0L317.5 377.3L317 377.3L317 377.3L316.5 377.3L316.5 377.4L316 377.4L316 374.1L315.5 374.1L315.5 374.1L315 374.1L315 378.3L314.5 378.3L314.5 378.3L314 378.3L314 378.6L313.5 378.6L313.5 378.7L313 378.7L313 378.7L312.5 378.7L312.5 379.1L312 379.1L312 379.1L311.5 379.1L311.5 375.4L311 375.4L311 374.4L310.5 374.4L310.5 374.4L310 374.4L310 374.5L309.5 374.5L309.5 377.2L309 377.2L309 377.2L308.5 377.2L308.5 374.1L308 374.1L308 374.1L307.5 374.1L307.5 374.2L307 374.2L307 378.5L306.5 378.5L306.5 375.9L306 375.9L306 375.9L305.5 375.9L305.5 378.4L305 378.4L305 378.4L304.5 378.4L304.5 378.4L304 378.4L304 374.2L303.5 374.2L303.5 374.2L303 374.2L303 375.5L302.5 375.5L302.5 375.5L302 375.5L302 375.2L301.5 375.2L301.5 375.2L301 375.2L301 377.1L300.5 377.1L300.5 377.1L300 377.1L300 375.0L299.5 375.0L299.5 375.0L299 375.0L299 376.7L298.5 376.7L298.5 374.0L298 374.0L298 374.0L297.5 374.0L297.5 375.3L297 375.3L297 375.3L296.5 375.3L296.5 375.4L296 375.4L296 375.4L295.5 375.4L295.5 375.4L295 375.4L295 376.9L294.5 376.9L294.5 374.1L294 374.1L294 374.1L293.5 374.1L293.5 374.1L293 374.1L293 378.5L292.5 378.5L292.5 378.3L292 378.3L292 374.1L291.5 374.1L291.5 369.9L291 369.9L291 365.8L290.5 365.8L290.5 361.6L290 361.6L290 357.5L289.5 357.5L289.5 353.3L289 353.3L289 349.2L288.5 349.2L288.5 345.0L288 345.0L288 340.8L287.5 340.8L287.5 336.7L287 336.7L287 333.4L286.5 333.4L286.5 337.9L286 337.9L286 342.3L285.5 342.3L285.5 346.8L285 346.8L285 351.3L284.5 351.3L284.5 355.8L284 355.8L284 360.3L283.5 360.3L283.5 364.7L283 364.7L283 362.2L282.5 362.2L282.5 361.5L282 361.5L282 371.7L281.5 371.7L281.5 371.7L281 371.7L281 371.7L280.5 371.7L280.5 376.4L280 376.4L280 376.4L279.5 376.4L279.5 377.4L279 377.4L279 377.4L278.5 377.4L278.5 361.2L278 361.2L278 358.6L277.5 358.6L277.5 358.6L277 358.6L277 358.4L276.5 358.4L276.5 359.3L276 359.3L276 377.0L275.5 377.0L275.5 377.0L275 377.0L275 358.8L274.5 358.8L274.5 358.8L274 358.8L274 360.5L273.5 360.5L273.5 360.6L273 360.6L273 360.5L272.5 360.5L272.5 360.5L272 360.5L272 360.5L271.5 360.5L271.5 361.2L271 361.2L271 377.2L270.5 377.2L270.5 360.4L270 360.4L270 360.5L269.5 360.5L269.5 363.3L269 363.3L269 362.9L268.5 362.9L268.5 362.9L268 362.9L268 365.4L267.5 365.4L267.5 365.4L267 365.4L267 365.4L266.5 365.4L266.5 362.6L266 362.6L266 362.6L265.5 362.6L265.5 372.2L265 372.2L265 372.2L264.5 372.2L264.5 360.3L264 360.3L264 363.6L263.5 363.6L263.5 370.4L263 370.4L263 365.4L262.5 365.4L262.5 365.4L262 365.4L262 365.4L261.5 365.4L261.5 361.0L261 361.0L261 361.0L260.5 361.0L260.5 372.9L260 372.9L260 372.9L259.5 372.9L259.5 373.0L259 373.0L259 369.8L258.5 369.8L258.5 376.8L258 376.8L258 362.3L257.5 362.3L257.5 362.3L257 362.3L257 371.8L256.5 371.8L256.5 359.6L256 359.6L256 359.6L255.5 359.6L255.5 360.1L255 360.1L255 360.2L254.5 360.2L254.5 363.8L254 363.8L254 363.9L253.5 363.9L253.5 363.9L253 363.9L253 360.9L252.5 360.9L252.5 360.9L252 360.9L252 365.6L251.5 365.6L251.5 365.6L251 365.6L251 365.7L250.5 365.7L250.5 374.8L250 374.8L250 374.8L249.5 374.8L249.5 361.0L249 361.0L249 361.0L248.5 361.0L248.5 361.1L248 361.1L248 373.7L247.5 373.7L247.5 373.7L247 373.7L247 373.7L246.5 373.7L246.5 371.0L246 371.0L246 371.0L245.5 371.0L245.5 361.9L245 361.9L245 362.0L244.5 362.0L244.5 362.0L244 362.0L244 376.4L243.5 376.4L243.5 369.9L243 369.9L243 369.9L242.5 369.9L242.5 369.9L242 369.9L242 359.8L241.5 359.8L241.5 359.9L241 359.9L241 375.7L240.5 375.7L240.5 375.7L240 375.7L240 363.3L239.5 363.3L239.5 363.3L239 363.3L239 364.8L238.5 364.8L238.5 361.0L238 361.0L238 362.5L237.5 362.5L237.5 362.5L237 362.5L237 373.5L236.5 373.5L236.5 373.5L236 373.5L236 375.4L235.5 375.4L235.5 375.4L235 375.4L235 364.1L234.5 364.1L234.5 364.1L234 364.1L234 376.0L233.5 376.0L233.5 376.0L233 376.0L233 362.9L232.5 362.9L232.5 362.9L232 362.9L232 362.9L231.5 362.9L231.5 376.7L231 376.7L231 376.7L230.5 376.7L230.5 377.8L230 377.8L230 377.8L229.5 377.8L229.5 378.3L229 378.3L229 378.3L228.5 378.3L228.5 378.3L228 378.3L228 362.7L227.5 362.7L227.5 362.7L227 362.7L227 365.9L226.5 365.9L226.5 365.9L226 365.9L226 362.0L225.5 362.0L225.5 362.0L225 362.0L225 372.7L224.5 372.7L224.5 377.2L224 377.2L224 377.2L223.5 377.2L223.5 367.3L223 367.3L223 367.3L222.5 367.3L222.5 367.3L222 367.3L222 364.9L221.5 364.9L221.5 364.9L221 364.9L221 375.0L220.5 375.0L220.5 375.0L220 375.0L220 375.0L219.5 375.0L219.5 372.4L219 372.4L219 372.4L218.5 372.4L218.5 375.0L218 375.0L218 375.0L217.5 375.0L217.5 375.0L217 375.0L217 362.9L216.5 362.9L216.5 362.9L216 362.9L216 362.9L215.5 362.9L215.5 373.6L215 373.6L215 373.6L214.5 373.6L214.5 367.6L214 367.6L214 367.6L213.5 367.6L213.5 375.3L213 375.3L213 375.7L212.5 375.7L212.5 375.7L212 375.7L212 365.1L211.5 365.1L211.5 365.1L211 365.1L211 366.0L210.5 366.0L210.5 366.5L210 366.5L210 366.5L209.5 366.5L209.5 374.5L209 374.5L209 374.5L208.5 374.5L208.5 376.5L208 376.5L208 365.2L207.5 365.2L207.5 360.0L207 360.0L207 354.8L206.5 354.8L206.5 354.8L206 354.8L206 354.8L205.5 354.8L205.5 358.3L205 358.3L205 355.0L204.5 355.0L204.5 355.0L204 355.0L204 355.8L203.5 355.8L203.5 356.6L203 356.6L203 356.6L202.5 356.6L202.5 359.1L202 359.1L202 359.1L201.5 359.1L201.5 353.5L201 353.5L201 353.5L200.5 353.5L200.5 374.7L200 374.7L200 374.7L199.5 374.7L199.5 374.7L199 374.7L199 373.1L198.5 373.1L198.5 373.1L198 373.1L198 356.9L197.5 356.9L197.5 356.9L197 356.9L197 372.2L196.5 372.2L196.5 372.2L196 372.2L196 352.9L195.5 352.9L195.5 352.9L195 352.9L195 352.9L194.5 352.9L194.5 371.8L194 371.8L194 353.7L193.5 353.7L193.5 353.7L193 353.7L193 354.8L192.5 354.8L192.5 354.8L192 354.8L192 373.8L191.5 373.8L191.5 373.8L191 373.8L191 376.1L190.5 376.1L190.5 358.1L190 358.1L190 358.1L189.5 358.1L189.5 356.2L189 356.2L189 356.2L188.5 356.2L188.5 353.6L188 353.6L188 353.6L187.5 353.6L187.5 353.4L187 353.4L187 353.4L186.5 353.4L186.5 353.4L186 353.4L186 371.5L185.5 371.5L185.5 367.0L185 367.0L185 375.7L184.5 375.7L184.5 375.7L184 375.7L184 354.3L183.5 354.3L183.5 354.3L183 354.3L183 357.5L182.5 357.5L182.5 372.8L182 372.8L182 352.6L181.5 352.6L181.5 373.5L181 373.5L181 373.5L180.5 373.5L180.5 353.5L180 353.5L180 353.5L179.5 353.5L179.5 353.6L179 353.6L179 372.2L178.5 372.2L178.5 360.6L178 360.6L178 360.6L177.5 360.6L177.5 353.3L177 353.3L177 353.3L176.5 353.3L176.5 357.2L176 357.2L176 357.2L175.5 357.2L175.5 357.2L175 357.2L175 370.9L174.5 370.9L174.5 370.9L174 370.9L174 353.1L173.5 353.1L173.5 369.5L173 369.5L173 369.5L172.5 369.5L172.5 367.6L172 367.6L172 367.6L171.5 367.6L171.5 367.6L171 367.6L171 352.8L170.5 352.8L170.5 352.8L170 352.8L170 352.8L169.5 352.8L169.5 356.9L169 356.9L169 356.9L168.5 356.9L168.5 356.9L168 356.9L168 357.8L167.5 357.8L167.5 359.9L167 359.9L167 371.9L166.5 371.9L166.5 371.9L166 371.9L166 354.5L165.5 354.5L165.5 354.5L165 354.5L165 354.5L164.5 354.5L164.5 355.8L164 355.8L164 355.8L163.5 355.8L163.5 355.8L163 355.8L163 357.3L162.5 357.3L162.5 357.3L162 357.3L162 376.6L161.5 376.6L161.5 354.7L161 354.7L161 354.7L160.5 354.7L160.5 354.8L160 354.8L160 354.8L159.5 354.8L159.5 354.8L159 354.8L159 356.6L158.5 356.6L158.5 370.8L158 370.8L158 370.8L157.5 370.8L157.5 353.6L157 353.6L157 353.0L156.5 353.0L156.5 353.0L156 353.0L156 359.3L155.5 359.3L155.5 356.2L155 356.2L155 356.2L154.5 356.2L154.5 368.1L154 368.1L154 368.1L153.5 368.1L153.5 368.1L153 368.1L153 359.9L152.5 359.9L152.5 359.9L152 359.9L152 371.6L151.5 371.6L151.5 371.6L151 371.6L151 375.5L150.5 375.5L150.5 356.0L150 356.0L150 356.0L149.5 356.0L149.5 354.1L149 354.1L149 354.1L148.5 354.1L148.5 359.2L148 359.2L148 352.3L147.5 352.3L147.5 360.0L147 360.0L147 353.4L146.5 353.4L146.5 375.5L146 375.5L146 375.5L145.5 375.5L145.5 375.5L145 375.5L145 366.6L144.5 366.6L144.5 371.2L144 371.2L144 371.2L143.5 371.2L143.5 371.2L143 371.2L143 355.8L142.5 355.8L142.5 358.5L142 358.5L142 358.5L141.5 358.5L141.5 353.6L141 353.6Z"/></g></svg>
<div class="a" style="left:0;top:457px;width:878px;height:13px;background:#efeff0"></div>
<div class="a" style="left:156px;top:463.5px;width:572px;height:1.5px;background:#555"></div>
<div class="a" style="left:0;top:470px;width:890px;height:51px;background:#f6f6f7"></div>
<div class="a" style="left:0;top:470px;width:890px;height:1px;background:#e6e6e7"></div>
<div class="a" style="left:0;top:520px;width:890px;height:16px;background:#efeff0;border-top:1px solid #dedede"></div>
<div class="a" style="left:3px;top:521px;width:1px;height:15px;background:#d8d8d8"></div>
<div class="a" style="left:227px;top:521px;width:1px;height:15px;background:#d8d8d8"></div>
<div class="a" style="left:755px;top:521px;width:1px;height:15px;background:#d8d8d8"></div>
<div class="t" style="left:7px;top:527px;font-size:9.1px;color:#1b1b1b">Остановлено</div>
<div class="a" style="left:3px;top:490px"><i class="a" style="left:0px;top:0px;width:1.5px;height:1.5px;background:#8c8c8c;border-radius:1px"></i><i class="a" style="left:0px;top:4px;width:1.5px;height:1.5px;background:#8c8c8c;border-radius:1px"></i><i class="a" style="left:0px;top:8px;width:1.5px;height:1.5px;background:#8c8c8c;border-radius:1px"></i></div>
<div class="t" style="left:9px;top:479.8px;font-size:9.8px">Темп</div>
<div class="a" style="left:10px;top:495px;width:32px;height:17px;background:#fff;border:1px solid #d9d9d9;border-bottom-color:#8a8a8a;border-radius:2px"></div>
<div class="t" style="left:14px;top:499px;font-size:9px">120</div>
<div class="a" style="left:43px;top:495px;width:11px;height:8px;background:#fbfbfb;border:1px solid #e0e0e0;border-radius:2px"></div><div class="a" style="left:43px;top:504px;width:11px;height:8px;background:#fbfbfb;border:1px solid #e0e0e0;border-bottom-color:#9a9a9a;border-radius:2px"></div><svg class="a" style="left:45px;top:497px" width="7" height="13" viewBox="0 0 7 13"><path d="M1.2 4 L3.5 1.5 L5.8 4Z M1.2 9 L3.5 11.5 L5.8 9Z" fill="#222"/></svg>
<div class="t" style="left:60px;top:479.8px;font-size:9.6px">Тактовый размер</div>
<div class="a" style="left:61px;top:495px;width:24px;height:17px;background:#fff;border:1px solid #d9d9d9;border-bottom-color:#8a8a8a;border-radius:2px"></div>
<div class="t" style="left:64px;top:499px;font-size:9px">4</div>
<div class="a" style="left:86px;top:495px;width:11px;height:8px;background:#fbfbfb;border:1px solid #e0e0e0;border-radius:2px"></div><div class="a" style="left:86px;top:504px;width:11px;height:8px;background:#fbfbfb;border:1px solid #e0e0e0;border-bottom-color:#9a9a9a;border-radius:2px"></div><svg class="a" style="left:88px;top:497px" width="7" height="13" viewBox="0 0 7 13"><path d="M1.2 4 L3.5 1.5 L5.8 4Z M1.2 9 L3.5 11.5 L5.8 9Z" fill="#222"/></svg>
<div class="t" style="left:101.5px;top:498px;font-size:10px;-webkit-text-stroke-width:0">/</div>
<div class="a" style="left:110px;top:495px;width:38px;height:17px;background:#fff;border:1px solid #d9d9d9;border-radius:2px"></div>
<div class="t" style="left:113px;top:499px;font-size:9px">4</div>
<svg class="a" style="left:136px;top:501px" width="8" height="5" viewBox="0 0 8 5"><path d="M0.5 0.5 L4 4 L7.5 0.5" fill="none" stroke="#555" stroke-width="0.9"/></svg>
<div class="a" style="left:158px;top:489px"><i class="a" style="left:0px;top:0px;width:1.5px;height:1.5px;background:#8c8c8c;border-radius:1px"></i><i class="a" style="left:0px;top:4px;width:1.5px;height:1.5px;background:#8c8c8c;border-radius:1px"></i><i class="a" style="left:0px;top:8px;width:1.5px;height:1.5px;background:#8c8c8c;border-radius:1px"></i><i class="a" style="left:4px;top:0px;width:1.5px;height:1.5px;background:#8c8c8c;border-radius:1px"></i><i class="a" style="left:4px;top:4px;width:1.5px;height:1.5px;background:#8c8c8c;border-radius:1px"></i><i class="a" style="left:4px;top:8px;width:1.5px;height:1.5px;background:#8c8c8c;border-radius:1px"></i></div>
<div class="a" style="left:169px;top:480px;width:9.5px;height:9.5px;border:1px solid #555;border-radius:2px;background:#fff"></div>
<div class="t" style="left:181px;top:480px;font-size:9.5px">Привязать</div>
<div class="a" style="left:169px;top:494px;width:116px;height:18px;background:#efefef;border:1px solid #b4b4b4;border-radius:2px"></div>
<div class="a" style="left:171px;top:496px;width:100px;height:14px;background:#e8e8e8"></div>
<div class="t" style="left:173px;top:499px;font-size:9.2px;color:#8d8d8d">1/8</div>
<svg class="a" style="left:274px;top:501px" width="8" height="5" viewBox="0 0 8 5"><path d="M0.5 0.5 L4 4 L7.5 0.5" fill="none" stroke="#999" stroke-width="0.9"/></svg>
<div class="a" style="left:291px;top:490px"><i class="a" style="left:0px;top:0px;width:1.5px;height:1.5px;background:#8c8c8c;border-radius:1px"></i><i class="a" style="left:0px;top:4px;width:1.5px;height:1.5px;background:#8c8c8c;border-radius:1px"></i><i class="a" style="left:0px;top:8px;width:1.5px;height:1.5px;background:#8c8c8c;border-radius:1px"></i><i class="a" style="left:4px;top:0px;width:1.5px;height:1.5px;background:#8c8c8c;border-radius:1px"></i><i class="a" style="left:4px;top:4px;width:1.5px;height:1.5px;background:#8c8c8c;border-radius:1px"></i><i class="a" style="left:4px;top:8px;width:1.5px;height:1.5px;background:#8c8c8c;border-radius:1px"></i></div>
<div class="a" style="left:300px;top:481px;width:175px;height:29px;background:#2a2c3c;border:1px solid #bfc0c8"></div>
<div class="t" style="left:302.3px;top:485px;font-size:22.5px;color:#f2f2f5;-webkit-text-stroke-width:0;transform:scaleX(1.0);transform-origin:0 0">0</div>
<div class="t" style="left:317.3px;top:485px;font-size:22.5px;color:#f2f2f5;-webkit-text-stroke-width:0;transform:scaleX(1.0);transform-origin:0 0">0</div>
<div class="t" style="left:337.7px;top:485px;font-size:22.5px;color:#f2f2f5;-webkit-text-stroke-width:0;transform:scaleX(1.0);transform-origin:0 0">ч</div>
<div class="t" style="left:356.4px;top:485px;font-size:22.5px;color:#f2f2f5;-webkit-text-stroke-width:0;transform:scaleX(1.0);transform-origin:0 0">0</div>
<div class="t" style="left:371.3px;top:485px;font-size:22.5px;color:#f2f2f5;-webkit-text-stroke-width:0;transform:scaleX(1.0);transform-origin:0 0">0</div>
<div class="t" style="left:391.7px;top:485px;font-size:22.5px;color:#f2f2f5;-webkit-text-stroke-width:0;transform:scaleX(1.0);transform-origin:0 0">м</div>
<div class="t" style="left:413.5px;top:485px;font-size:22.5px;color:#f2f2f5;-webkit-text-stroke-width:0;transform:scaleX(1.0);transform-origin:0 0">0</div>
<div class="t" style="left:429.0px;top:485px;font-size:22.5px;color:#f2f2f5;-webkit-text-stroke-width:0;transform:scaleX(1.0);transform-origin:0 0">0</div>
<div class="t" style="left:448.9px;top:485px;font-size:22.5px;color:#f2f2f5;-webkit-text-stroke-width:0;transform:scaleX(1.0);transform-origin:0 0">с</div>
<svg class="a" style="left:465px;top:492px" width="8" height="6" viewBox="0 0 8 6"><path d="M0 0.5 H8 L4 5.5Z" fill="#f2f2f5"/></svg>
<div class="a" style="left:479px;top:471px;width:1px;height:49px;background:#e4e4e4"></div>
<div class="a" style="left:482px;top:471px;width:1px;height:49px;background:#e4e4e4"></div>
<div class="a" style="left:484px;top:490px"><i class="a" style="left:0px;top:0px;width:1.5px;height:1.5px;background:#8c8c8c;border-radius:1px"></i><i class="a" style="left:0px;top:4px;width:1.5px;height:1.5px;background:#8c8c8c;border-radius:1px"></i><i class="a" style="left:0px;top:8px;width:1.5px;height:1.5px;background:#8c8c8c;border-radius:1px"></i><i class="a" style="left:4px;top:0px;width:1.5px;height:1.5px;background:#8c8c8c;border-radius:1px"></i><i class="a" style="left:4px;top:4px;width:1.5px;height:1.5px;background:#8c8c8c;border-radius:1px"></i><i class="a" style="left:4px;top:8px;width:1.5px;height:1.5px;background:#8c8c8c;border-radius:1px"></i></div>
<div class="t" style="left:494.5px;top:477px;font-size:9.6px">Выделение</div>
<div class="a" style="left:528px;top:494px;width:17px;height:17px;background:#dedfe2;border-radius:2px"></div>
<svg class="a" style="left:530px;top:496px" width="13" height="13" viewBox="0 0 14 14"><path d="M11.56 7.61 L12.95 8.35 L12.16 10.25 L10.65 9.79 L10.25 10.25 L9.79 10.65 L10.25 12.16 L8.35 12.95 L7.61 11.56 L7.00 11.60 L6.39 11.56 L5.65 12.95 L3.75 12.16 L4.21 10.65 L3.75 10.25 L3.35 9.79 L1.84 10.25 L1.05 8.35 L2.44 7.61 L2.40 7.00 L2.44 6.39 L1.05 5.65 L1.84 3.75 L3.35 4.21 L3.75 3.75 L4.21 3.35 L3.75 1.84 L5.65 1.05 L6.39 2.44 L7.00 2.40 L7.61 2.44 L8.35 1.05 L10.25 1.84 L9.79 3.35 L10.25 3.75 L10.65 4.21 L12.16 3.75 L12.95 5.65 L11.56 6.39 L11.60 7.00Z" fill="none" stroke="#2a2a2a" stroke-width="0.95" stroke-linejoin="round"/><circle cx="7" cy="7" r="1.8" fill="none" stroke="#2a2a2a" stroke-width="0.95"/></svg>
<div class="a" style="left:551px;top:476px;width:121px;height:15px;background:#2a2c3c;border:1px solid #bfc0c8"></div>
<div class="t" style="left:553.5px;top:478px;font-size:11.5px;color:#f0f0f4;-webkit-text-stroke-width:0.05px">0</div>
<div class="t" style="left:561.9px;top:478px;font-size:11.5px;color:#f0f0f4;-webkit-text-stroke-width:0.05px">0</div>
<div class="t" style="left:571.4px;top:478px;font-size:11.5px;color:#f0f0f4;-webkit-text-stroke-width:0.05px">ч</div>
<div class="t" style="left:579.4px;top:478px;font-size:11.5px;color:#f0f0f4;-webkit-text-stroke-width:0.05px">0</div>
<div class="t" style="left:588.1px;top:478px;font-size:11.5px;color:#f0f0f4;-webkit-text-stroke-width:0.05px">0</div>
<div class="t" style="left:596.8px;top:478px;font-size:11.5px;color:#f0f0f4;-webkit-text-stroke-width:0.05px">м</div>
<div class="t" style="left:608.1px;top:478px;font-size:11.5px;color:#f0f0f4;-webkit-text-stroke-width:0.05px">0</div>
<div class="t" style="left:616.9px;top:478px;font-size:11.5px;color:#f0f0f4;-webkit-text-stroke-width:0.05px">0</div>
<div class="t" style="left:624.1px;top:478px;font-size:11.5px;color:#f0f0f4;-webkit-text-stroke-width:0.05px">.</div>
<div class="t" style="left:627.1px;top:478px;font-size:11.5px;color:#f0f0f4;-webkit-text-stroke-width:0.05px">0</div>
<div class="t" style="left:635.4px;top:478px;font-size:11.5px;color:#f0f0f4;-webkit-text-stroke-width:0.05px">0</div>
<div class="t" style="left:643.8px;top:478px;font-size:11.5px;color:#f0f0f4;-webkit-text-stroke-width:0.05px">0</div>
<div class="t" style="left:653.4px;top:478px;font-size:11.5px;color:#f0f0f4;-webkit-text-stroke-width:0.05px">с</div>
<svg class="a" style="left:662px;top:481px" width="8" height="6" viewBox="0 0 8 6"><path d="M0 0.5 H8 L4 5.5Z" fill="#f2f2f5"/></svg>
<div class="a" style="left:551px;top:495px;width:121px;height:15px;background:#2a2c3c;border:1px solid #bfc0c8"></div>
<div class="t" style="left:553.5px;top:497px;font-size:11.5px;color:#f0f0f4;-webkit-text-stroke-width:0.05px">0</div>
<div class="t" style="left:561.9px;top:497px;font-size:11.5px;color:#f0f0f4;-webkit-text-stroke-width:0.05px">0</div>
<div class="t" style="left:571.4px;top:497px;font-size:11.5px;color:#f0f0f4;-webkit-text-stroke-width:0.05px">ч</div>
<div class="t" style="left:579.4px;top:497px;font-size:11.5px;color:#f0f0f4;-webkit-text-stroke-width:0.05px">0</div>
<div class="t" style="left:588.1px;top:497px;font-size:11.5px;color:#f0f0f4;-webkit-text-stroke-width:0.05px">0</div>
<div class="t" style="left:596.8px;top:497px;font-size:11.5px;color:#f0f0f4;-webkit-text-stroke-width:0.05px">м</div>
<div class="t" style="left:608.1px;top:497px;font-size:11.5px;color:#f0f0f4;-webkit-text-stroke-width:0.05px">0</div>
<div class="t" style="left:616.9px;top:497px;font-size:11.5px;color:#f0f0f4;-webkit-text-stroke-width:0.05px">0</div>
<div class="t" style="left:624.1px;top:497px;font-size:11.5px;color:#f0f0f4;-webkit-text-stroke-width:0.05px">.</div>
<div class="t" style="left:627.1px;top:497px;font-size:11.5px;color:#f0f0f4;-webkit-text-stroke-width:0.05px">0</div>
<div class="t" style="left:635.4px;top:497px;font-size:11.5px;color:#f0f0f4;-webkit-text-stroke-width:0.05px">0</div>
<div class="t" style="left:643.8px;top:497px;font-size:11.5px;color:#f0f0f4;-webkit-text-stroke-width:0.05px">0</div>
<div class="t" style="left:653.4px;top:497px;font-size:11.5px;color:#f0f0f4;-webkit-text-stroke-width:0.05px">с</div>
<svg class="a" style="left:662px;top:500px" width="8" height="6" viewBox="0 0 8 6"><path d="M0 0.5 H8 L4 5.5Z" fill="#f2f2f5"/></svg>
<div class="a" style="left:676px;top:471px;width:146px;height:24px;background:#f9f9f9;border-right:1px solid #e2e2e2;border-bottom:1px solid #e6e6e6"></div>
<div class="a" style="left:680px;top:477px"><i class="a" style="left:0px;top:0px;width:1.5px;height:1.5px;background:#8c8c8c;border-radius:1px"></i><i class="a" style="left:0px;top:4px;width:1.5px;height:1.5px;background:#8c8c8c;border-radius:1px"></i><i class="a" style="left:0px;top:8px;width:1.5px;height:1.5px;background:#8c8c8c;border-radius:1px"></i><i class="a" style="left:4px;top:0px;width:1.5px;height:1.5px;background:#8c8c8c;border-radius:1px"></i><i class="a" style="left:4px;top:4px;width:1.5px;height:1.5px;background:#8c8c8c;border-radius:1px"></i><i class="a" style="left:4px;top:8px;width:1.5px;height:1.5px;background:#8c8c8c;border-radius:1px"></i></div>
<div class="a" style="left:686px;top:473.5px;width:21px;height:20px;background:#dedfe2;border-radius:3px"></div>
<svg class="a" style="left:690px;top:476px" width="12" height="14" viewBox="0 0 12 14"><path d="M1 1 L11 7 L1 13Z" fill="#3f8a5e"/></svg>
<div class="t" style="left:711px;top:474px;font-size:8px">&ndash;</div>
<div class="t" style="left:811px;top:474px;font-size:8px">+</div>
<div class="a" style="left:711px;top:486px;width:106px;height:1px;background:#a9b4c8"></div>
<div class="a" style="left:711.0px;top:483px;width:1px;height:3px;background:#d9dde6"></div>
<div class="a" style="left:720.5px;top:483px;width:1px;height:3px;background:#d9dde6"></div>
<div class="a" style="left:730.0px;top:483px;width:1px;height:3px;background:#d9dde6"></div>
<div class="a" style="left:739.5px;top:483px;width:1px;height:3px;background:#d9dde6"></div>
<div class="a" style="left:749.0px;top:483px;width:1px;height:3px;background:#d9dde6"></div>
<div class="a" style="left:758.5px;top:483px;width:1px;height:3px;background:#d9dde6"></div>
<div class="a" style="left:768.0px;top:483px;width:1px;height:3px;background:#d9dde6"></div>
<div class="a" style="left:777.5px;top:483px;width:1px;height:3px;background:#d9dde6"></div>
<div class="a" style="left:787.0px;top:483px;width:1px;height:3px;background:#d9dde6"></div>
<div class="a" style="left:796.5px;top:483px;width:1px;height:3px;background:#d9dde6"></div>
<div class="a" style="left:806.0px;top:483px;width:1px;height:3px;background:#d9dde6"></div>
<div class="a" style="left:815.5px;top:483px;width:1px;height:3px;background:#d9dde6"></div>
<div class="a" style="left:741px;top:481.5px;width:9.5px;height:9.5px;border:1.2px solid #222;border-radius:50%;background:#fafafa"></div>
<div class="a" style="left:823px;top:471px;width:1px;height:24px;background:#e4e4e4"></div>
<div class="a" style="left:886px;top:528px;width:1.5px;height:1.5px;background:#a8a8a8"></div>
<div class="a" style="left:883px;top:531px;width:1.5px;height:1.5px;background:#a8a8a8"></div>
<div class="a" style="left:886px;top:531px;width:1.5px;height:1.5px;background:#a8a8a8"></div>
<div class="a" style="left:880px;top:534px;width:1.5px;height:1.5px;background:#a8a8a8"></div>
<div class="a" style="left:883px;top:534px;width:1.5px;height:1.5px;background:#a8a8a8"></div>
<div class="a" style="left:886px;top:534px;width:1.5px;height:1.5px;background:#a8a8a8"></div>
<div class="a" style="left:305px;top:33.5px;width:263px;height:353.5px;background:#f9f9f9;border:1px solid #e3e3e3;border-radius:0 0 2px 2px;box-shadow:0 2px 5px rgba(0,0,0,0.12)"></div>
<div class="a" style="left:310px;top:209px;width:254px;height:17px;background:#eeeeee;border-radius:4px"></div>
<div class="t" style="left:334px;top:41.3px;font-size:9.2px;color:#1e1e1e">Плагин-менеджер</div>
<div class="a" style="left:312px;top:56.0px;width:249px;height:1px;background:#dedede"></div>
<div class="t" style="left:334px;top:64.6px;font-size:9.2px;color:#1e1e1e">Добавить эффкты реального времени</div>
<div class="t" style="left:489px;width:60px;text-align:right;top:64.6px;font-size:9.2px;color:#1e1e1e">E</div>
<div class="t" style="left:334px;top:81.6px;font-size:9.2px;color:#1e1e1e">Ещё эффекты...</div>
<div class="a" style="left:312px;top:97.0px;width:249px;height:1px;background:#dedede"></div>
<div class="t" style="left:334px;top:105.2px;font-size:9.2px;color:#a0a0a0">Повторить последний эффект</div>
<div class="t" style="left:489px;width:60px;text-align:right;top:105.2px;font-size:9.2px;color:#a0a0a0">Ctrl+R</div>
<div class="a" style="left:312px;top:121.0px;width:249px;height:1px;background:#dedede"></div>
<div class="t" style="left:334px;top:128.7px;font-size:9.2px;color:#1e1e1e">Громкость и компрессия</div>
<svg class="a" style="left:552px;top:129.6px" width="5" height="8" viewBox="0 0 5 8"><path d="M0.9 0.9 L4 4 L0.9 7.1" fill="none" stroke="#222" stroke-width="1.25"/></svg>
<div class="t" style="left:334px;top:145.7px;font-size:9.2px;color:#1e1e1e">Фейдинг</div>
<svg class="a" style="left:552px;top:146.6px" width="5" height="8" viewBox="0 0 5 8"><path d="M0.9 0.9 L4 4 L0.9 7.1" fill="none" stroke="#222" stroke-width="1.25"/></svg>
<div class="t" style="left:334px;top:162.7px;font-size:9.2px;color:#1e1e1e">Высота тона и темп</div>
<svg class="a" style="left:552px;top:163.6px" width="5" height="8" viewBox="0 0 5 8"><path d="M0.9 0.9 L4 4 L0.9 7.1" fill="none" stroke="#222" stroke-width="1.25"/></svg>
<div class="t" style="left:334px;top:179.7px;font-size:9.2px;color:#1e1e1e">Эквалайзер и фильтры</div>
<svg class="a" style="left:552px;top:180.6px" width="5" height="8" viewBox="0 0 5 8"><path d="M0.9 0.9 L4 4 L0.9 7.1" fill="none" stroke="#222" stroke-width="1.25"/></svg>
<div class="t" style="left:334px;top:196.7px;font-size:9.2px;color:#1e1e1e">Удаление шума и восстановление</div>
<svg class="a" style="left:552px;top:197.6px" width="5" height="8" viewBox="0 0 5 8"><path d="M0.9 0.9 L4 4 L0.9 7.1" fill="none" stroke="#222" stroke-width="1.25"/></svg>
<div class="t" style="left:334px;top:213.4px;font-size:9.2px;color:#1e1e1e">Задержка и реверберация</div>
<svg class="a" style="left:552px;top:214.3px" width="5" height="8" viewBox="0 0 5 8"><path d="M0.9 0.9 L4 4 L0.9 7.1" fill="none" stroke="#222" stroke-width="1.25"/></svg>
<div class="t" style="left:334px;top:230.4px;font-size:9.2px;color:#1e1e1e">Искажение и модуляция</div>
<svg class="a" style="left:552px;top:231.3px" width="5" height="8" viewBox="0 0 5 8"><path d="M0.9 0.9 L4 4 L0.9 7.1" fill="none" stroke="#222" stroke-width="1.25"/></svg>
<div class="t" style="left:334px;top:247.4px;font-size:9.2px;color:#1e1e1e">Специальные</div>
<svg class="a" style="left:552px;top:248.3px" width="5" height="8" viewBox="0 0 5 8"><path d="M0.9 0.9 L4 4 L0.9 7.1" fill="none" stroke="#222" stroke-width="1.25"/></svg>
<div class="t" style="left:334px;top:264.4px;font-size:9.2px;color:#1e1e1e">Устаревшие</div>
<svg class="a" style="left:552px;top:265.3px" width="5" height="8" viewBox="0 0 5 8"><path d="M0.9 0.9 L4 4 L0.9 7.1" fill="none" stroke="#222" stroke-width="1.25"/></svg>
<div class="a" style="left:312px;top:280.5px;width:249px;height:1px;background:#dedede"></div>
<div class="t" style="left:334px;top:288.1px;font-size:9.2px;color:#1e1e1e">Устранение клиппинга</div>
<div class="t" style="left:334px;top:305.1px;font-size:9.2px;color:#1e1e1e">Dominic Mazzoni</div>
<svg class="a" style="left:552px;top:306.0px" width="5" height="8" viewBox="0 0 5 8"><path d="M0.9 0.9 L4 4 L0.9 7.1" fill="none" stroke="#222" stroke-width="1.25"/></svg>
<div class="t" style="left:334px;top:321.8px;font-size:9.2px;color:#1e1e1e">Вокодер</div>
<div class="t" style="left:334px;top:338.6px;font-size:9.2px;color:#1e1e1e">Paul Licameli</div>
<svg class="a" style="left:552px;top:339.5px" width="5" height="8" viewBox="0 0 5 8"><path d="M0.9 0.9 L4 4 L0.9 7.1" fill="none" stroke="#222" stroke-width="1.25"/></svg>
<div class="t" style="left:334px;top:355.3px;font-size:9.2px;color:#1e1e1e">Steve Daulton</div>
<svg class="a" style="left:552px;top:356.2px" width="5" height="8" viewBox="0 0 5 8"><path d="M0.9 0.9 L4 4 L0.9 7.1" fill="none" stroke="#222" stroke-width="1.25"/></svg>
<div class="t" style="left:334px;top:372.3px;font-size:9.2px;color:#1e1e1e">Режекторный фильтр</div>
<div class="a" style="left:565px;top:207px;width:141px;height:38px;background:#f9f9f9;border:1px solid #e3e3e3;border-radius:5px;box-shadow:0 2px 6px rgba(0,0,0,0.13)"></div>
<div class="a" style="left:569px;top:226px;width:132px;height:16px;background:#eeeeee;border-radius:4px"></div>
<div class="t" style="left:593px;top:214.2px;font-size:9.2px;color:#1e1e1e">Реверберация...</div>
<div class="t" style="left:593px;top:230.6px;font-size:9.2px;color:#1e1e1e">Эхо...</div>
</body></html>
